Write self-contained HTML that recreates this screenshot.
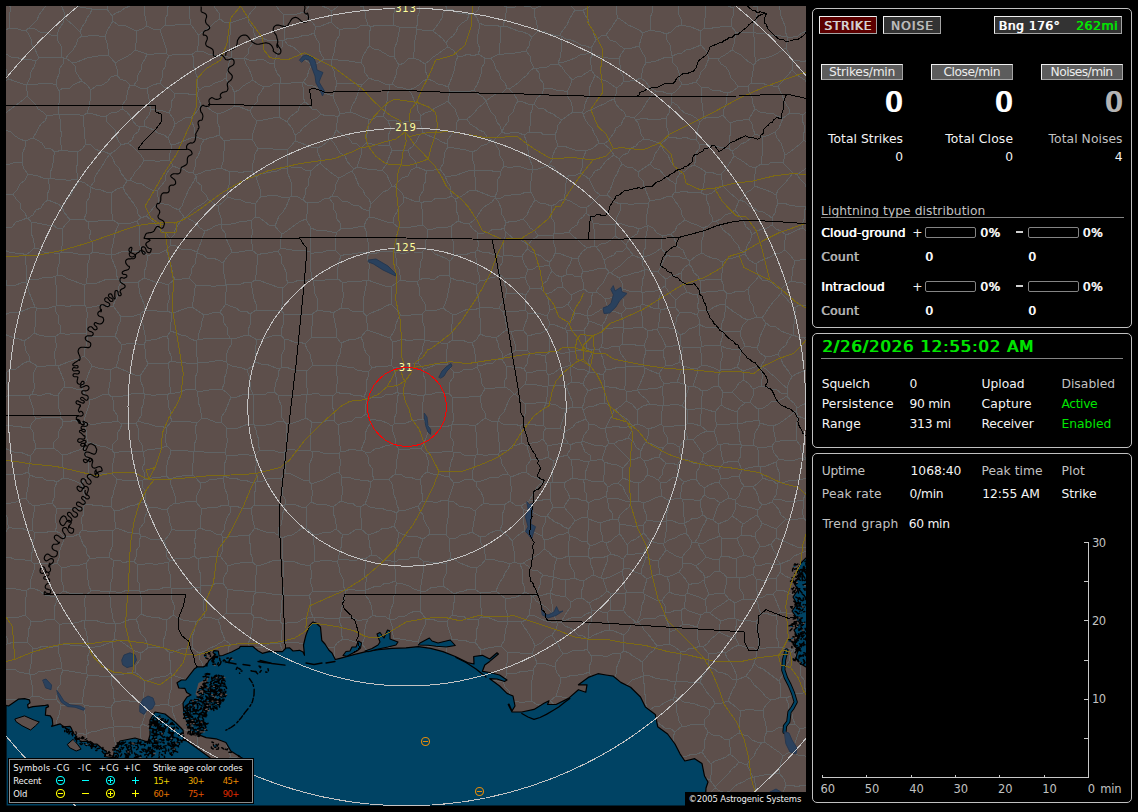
<!DOCTYPE html>
<html lang="en"><head><meta charset="utf-8"><title>Lightning Detector</title>
<style>
html,body{margin:0;padding:0;background:#000;}
body{width:1138px;height:812px;position:relative;overflow:hidden;font-family:"DejaVu Sans","Liberation Sans",sans-serif;}
.map{position:absolute;left:0;top:0;}
.t{position:absolute;line-height:1;white-space:nowrap;}
.pn{position:absolute;border:1px solid #c0c0c0;border-radius:5px;}
.bx{position:absolute;border:1px solid;border-color:#f0f0f0 #a4a4a4 #a4a4a4 #f0f0f0;}
.hr{position:absolute;height:1px;background:#848484;}
.bar{position:absolute;width:49px;height:9px;border:1px solid #848484;border-radius:2px;}
.mn{position:absolute;width:7px;height:2px;background:#d0d0d0;}
.lg{position:absolute;background:#000;border:1px solid #8c8c8c;box-shadow:0 0 0 1px #000;}
.rl{font-family:"DejaVu Sans","Liberation Sans",sans-serif;font-size:10px;letter-spacing:0.7px;fill:#ffff9c;}
</style></head><body>
<svg class="map" width="1138" height="812" viewBox="0 0 1138 812">
<defs><clipPath id="mc"><rect x="6" y="6" width="800" height="800"/></clipPath></defs>
<rect x="6" y="6" width="800" height="800" fill="#5d4f4b"/>
<g clip-path="url(#mc)" fill="none" stroke-linejoin="round" stroke-linecap="round">
<path d="M-26 673L-21 672L-15 671L-9 670L-4 668L1 666M1 666L1 660L1 653M-26 641L-21 643L-15 645L-10 648L-5 651L1 653M426 394L432 394L438 392L443 393L449 393M426 394L425 389L426 384L425 379L423 374L424 369M448 365L441 364L435 365L430 367L424 369M448 365L451 369L454 372M449 393L449 388L450 382L453 378L454 372M845 222L840 225L834 227L828 229L823 231L817 232L812 235M812 235L814 240L814 246L816 251L818 256M791 281L792 276L792 270L794 265L794 260M791 281L796 282L801 282L806 285L811 286L816 286M794 260L800 260L806 259L811 257L817 257M666 118L661 119L656 119L650 120L645 118L640 119L635 119M666 118L666 125L668 131L668 138M668 138L661 144M661 144L656 142L650 140L644 139M635 119L638 123L640 129L641 134L644 139M671 94L672 102M671 94L666 93L661 91L656 91M672 102L670 108L669 113L666 118M656 91L652 95L648 100L645 105L642 110L638 114L634 118M634 118L635 119M683 775L680 769L676 764L672 759M683 775L682 781L681 787L680 793L679 799L676 804M676 804L675 805M675 805L672 800L668 797L665 793L661 789L657 786L655 781L651 777M665 759L669 757M665 759L661 763L656 765L652 769M652 769L650 775M672 759L669 757M651 777L650 775M647 813L647 808L648 803L648 798L649 793L651 788L651 783L651 777M667 813L671 809L675 805M675 732L671 729L665 728L661 725L657 722L651 720M675 732L673 737L673 743L670 747L671 753L669 757M641 735L644 730L648 726L651 720M641 735L645 738L649 742L653 746L657 750L660 755L665 759M781 612L779 608L777 603L775 598L773 594M781 612L776 615M776 615L771 615L766 613L761 614M761 614L759 609L758 604L756 599M756 599L758 597M758 597L763 597L768 594L773 594M811 543L815 540L821 540L826 538L830 535L835 533M811 543L809 538L809 532L808 527L806 521M806 521L811 518L817 518L822 516L827 513L832 510L837 508M803 610L802 611M803 610L809 609L815 608L821 611L827 609L832 609M802 611L802 617L803 623L801 628L802 634L802 639L801 645M814 648L807 647L801 645M778 647L778 641L776 636L776 631L777 625L777 620L776 615M778 647L783 648L788 648L793 650M802 611L797 611L792 613L787 613L781 612M793 650L794 649M801 645L794 649M59 644L65 644L70 645L76 645L82 646L88 647M59 644L59 638L59 632L60 625M60 625L64 623L69 623L74 623L79 622L84 620M88 647L88 642L87 636L86 631L84 626L84 620M-1 540L2 547L1 555M1 555L-3 557L-9 556L-14 558L-19 558L-23 562L-29 562M-2 588L-0 583L0 578L2 573L1 567L4 563L3 557M3 557L1 555M-2 702L-1 707L-1 712L-1 717L-0 723L1 728L2 733M-30 732L-25 733L-19 733L-14 733L-9 732L-3 733L2 733M1 666L3 668M3 668L1 674L1 679L1 684L-0 690L-1 695L-1 701M33 648L32 654L31 659L31 664L30 669L29 674M33 648L38 648L43 646L48 647L53 647L58 646M61 668L61 662L60 657L58 651L58 646M61 668L56 669L51 670L45 671L40 671L35 674L30 674M30 674L29 674M3 668L8 670L14 669L19 672L24 673L29 674M-1 701L4 699L10 700L15 699L20 699L25 699L30 698M30 674L31 680L32 685L32 691L32 696M32 696L30 698M86 595L80 593L75 594L69 593L64 591M86 595L84 601L85 607L85 613L85 620M54 619L55 614L54 608L56 603L56 597M54 619L60 625M85 620L84 620M56 597L59 594L64 591M1 653L4 648L7 644M33 648L27 642M27 642L20 642L14 642L7 644M59 644L58 646M54 619L48 619L43 621L37 621L31 621M27 642L28 637L28 631L30 626L31 621M-24 623L-18 623L-12 623L-6 622L0 620M7 644L7 638L3 632L1 626L0 620M812 235L807 231L802 228M785 250L790 255L794 260M785 250L784 245L785 240L786 235M802 228L797 230L791 233L786 235M672 102L677 105L681 110L685 113L691 115L696 118L700 122M668 138L674 137L679 139L685 137L690 139L696 139M696 139L697 133L698 128L700 122M626 116L624 112L619 108L616 104L614 99M626 116L623 120L621 125L616 128L614 133L611 137L608 141L604 144M614 99L609 101L604 104L599 106L593 109L588 111L583 114M583 114L585 119L588 124L592 128L594 133L597 138L599 143M604 144L599 143M656 91L650 88L646 82L641 78M616 88L621 85L624 81M616 88L616 94L614 99M634 118L626 116M641 78L636 80L630 81L624 81M338 425L338 430L339 435L339 440L340 446L341 451M338 425L342 423L347 422L352 421L356 417L362 417L366 414M341 451L346 451L351 449L356 450L361 450M361 450L363 445L365 440L365 434L367 429L370 424L370 419M366 414L370 419M361 450L365 452M392 426L387 423L382 421L376 420L370 419M392 426L393 432L395 438L395 444M395 444L390 445L385 446L380 448L375 449L371 452L365 452M427 472L423 475L420 480M427 472L428 466L428 460L426 454M420 480L415 479L410 477L405 477L400 474L395 474M426 454L421 449M421 449L416 448L410 449L404 450L399 449M399 449L398 454L397 459L396 464L396 469L395 474M395 444L399 449M365 452L368 457L368 463L372 468L372 474L374 479M395 474L389 479M374 479L382 479L389 479M643 554L646 547L650 541M643 554L638 553L632 555L627 554M627 554L627 545M627 545L631 541L636 539L640 536L644 533M644 533L650 541M646 557L652 560L658 561M646 557L644 563L642 568L641 574M658 561L659 568L659 574M659 574L653 576L647 579M641 574L647 579M448 365L446 360L446 354L447 349L447 344M424 369L418 363M418 363L419 357L422 352L423 346L425 340M447 344L441 343L436 341L430 341L425 340M449 393L452 397M485 389L482 384L481 378L480 373L477 367M485 389L480 397M454 372L460 372L465 369L471 370L477 367M480 397L475 396L469 397L463 397L458 398L452 397M781 293L786 298L790 303L795 308M781 293L781 289M791 281L785 285L781 289M795 308L799 305L805 306L809 303L814 302M643 554L646 557M627 554L623 559M641 574L635 572L630 569L624 568M623 559L624 568M643 593L645 586L647 579M643 593L638 592L632 592L627 592M627 592L624 587L624 581L623 576L622 571M624 568L622 571M586 151L584 156L582 162L582 168L580 173M586 151L581 150L575 150L569 148L564 146L558 146M549 165L552 160L553 155L555 150L558 146M549 165L554 167L557 172L561 175L566 178M566 178L570 175L576 175L580 173M524 135L526 140L527 145L528 150L528 155L530 160L532 165L532 170M524 135L529 132M555 135L550 134L544 135L540 132L534 133L529 132M555 135L556 140L558 146M549 165L544 167L538 169L533 170M533 170L532 170M227 -13L232 -10L237 -8L242 -5L247 -3L252 0L258 3M258 3L257 -3L257 -9L258 -15L258 -21L257 -26M258 3L258 3M258 3L255 8L251 12L248 17M213 -4L214 2L215 8L219 13L220 19M248 17L242 19L236 21L230 23M220 19L224 22L230 23M274 63L276 57L278 52L282 47L283 41M274 63L269 63L264 60L259 59L254 61L249 60L244 58M283 41L278 40L272 41L267 40L262 38L256 38M256 38L253 43L249 48L248 54L244 58M244 58L244 58M256 38L254 33L253 28L249 23L248 17M230 23L231 29L230 35L229 41L229 46L232 52L231 58M244 58L237 58L231 58M198 35L203 32L207 29L211 26L215 22L220 19M198 35L199 40L198 46L197 51M197 51L202 51L208 54L214 55L219 56L225 56L231 58M231 58L231 58M812 2L815 -2L819 -6L824 -9M812 2L813 8L814 14L816 19L819 25M560 35L554 35L549 34L544 31L538 31M560 35L563 30L567 25L569 20L572 15L575 10M575 10L571 6L567 2L564 -2L560 -6M560 -6L556 -2L551 -1L547 1L543 5L538 7L534 9M538 31L537 25L536 20L534 15L534 9M529 6L534 9M529 6L528 1L528 -5L526 -10L527 -15L525 -21M448 87L450 91M448 87L450 82L452 77L454 71L455 66L456 61L458 56M450 91L456 91L462 91L468 92L474 90M458 56L463 56L468 54L473 56L478 54M474 90L477 85L479 80L481 74L481 69L484 64L485 58M478 54L485 58M562 120L558 125L557 130L555 135M562 120L557 117L553 114L548 112L544 109L538 108L534 104M529 132L530 126L531 121L530 115L532 110L533 105M534 104L533 105M616 88L611 84L606 81L600 79L595 75M592 55L590 60L591 65L591 70M592 55L597 55L603 57L608 58L613 58L619 59M619 59L620 65L620 71L623 76L624 81M595 75L591 70M583 114L582 113M595 75L593 80L591 84L589 89L590 95L587 99L585 104L584 109L582 113M562 120L567 116L573 112M599 143L593 148L586 151M573 112L582 113M561 36L562 42L561 47L561 52L560 58L558 63M561 36L566 39L571 40L576 42L581 45L586 46L591 48M558 63L564 62L570 60L575 58L580 55L586 54L591 52M591 48L591 52M560 35L561 36M575 10L583 10M591 48L596 40M583 10L585 15L588 19L589 25L593 30L594 35L596 40M592 55L591 52M619 59L621 54L625 49M625 49L620 46L616 42L610 40L606 35M606 35L601 36L596 40M625 49L632 48L639 46M618 18L615 22L612 27L609 31L606 35M618 18L623 21L628 25L633 27L639 30L643 33M643 33L641 39L639 46M641 78L642 73L643 68L646 63M639 46L642 52L645 57L646 63M696 82L689 84L682 84M696 82L699 78L701 72L705 68L707 63L709 58M682 84L679 79L679 73L677 67L673 63L672 57M709 58L706 51L701 45M701 45L696 47L691 49L686 50L682 53L677 54L672 56M672 57L672 56M671 94L675 92L679 88L682 84M701 87L702 92L701 98L702 103L702 108L704 114L703 119M701 87L696 82M700 122L703 119M646 63L651 62L656 61L661 59L666 57L672 57M666 34L667 40L670 45L671 51L672 56M666 34L661 32L655 31L650 30M643 33L650 30M758 6L753 6L747 5L741 5L736 5M758 6L764 3L768 -0M736 5L735 -1L735 -7L734 -13L732 -19M666 34L671 32L676 27L681 25M701 45L700 38L701 31M701 31L696 29L691 27L686 26L681 25M736 32L735 38L734 44L732 50M736 32L731 26M718 59L723 56L728 53L732 50M718 59L709 58M731 26L725 26L720 27L715 27L710 29L704 28M701 31L704 28M731 26L731 20L734 14L733 8M733 8L728 6L723 5L717 6L711 5L706 2M704 28L704 23L705 18L706 13L705 8L706 2M392 150L390 155L388 160L386 165L382 170M392 150L390 146M390 146L384 145L378 145L372 144L366 143M382 170L377 170L372 169L367 169L362 168L357 167M357 167L359 161L361 155L361 148M361 148L366 143M388 121L383 116M388 121L390 126L390 131L388 136L389 141L390 146M383 116L378 116L373 119L368 119M368 119L368 125L368 131L366 137L366 143M354 169L350 165L347 161L345 156L340 153L337 148L334 143L330 139M354 169L357 167M330 139L334 135L336 130M336 130L340 133L345 136L349 138L352 143L357 144L361 148M422 809L426 815M422 809L416 812L410 813L405 815L399 816L393 819M612 763L615 759L620 757L624 753M612 763L606 762L601 759L596 756L590 754M590 740L591 747L590 754M590 740L594 738L600 737L604 735L609 732L613 729L619 728M624 753L624 748L626 742L627 737M619 728L623 732L627 737M617 710L618 716L618 722L619 728M617 710L611 710L605 709L599 709L593 709L588 710M588 710L586 715L583 719L583 725L581 729M581 729L586 734L590 740M641 735L634 736L627 737M652 769L648 766L643 763L637 762L633 759L628 756L624 753M759 807L756 811L752 815M759 807L757 801L756 795L755 789L755 783L754 777M754 777L753 777M753 777L748 779L743 782L738 784L734 787L730 791L725 793M738 813L735 807L732 802L728 798L725 793M759 807L763 804L769 804L774 803L779 802M779 773L774 774L769 774L764 775L759 776L754 777M779 773L784 779L786 785M786 785L784 790L781 796L779 802M817 809L816 814L813 818L809 822M812 787L807 786L802 785L797 787L792 785L786 785M779 802L783 806L786 812L790 816L793 820M779 773L780 768L781 762L783 756M783 756L779 752L774 749L769 745L764 742M753 777L750 771L747 765M764 742L762 742M747 765L750 760L754 756L756 751L759 747L762 742M715 787L718 784L722 780L725 777L729 773L732 769L736 766L739 762M715 787L715 788M715 788L720 791L725 793M747 765L739 762M720 503L717 508L715 514L713 520M720 503L729 498M718 524L713 520M718 524L723 522L728 520L732 516M729 498L735 500M735 500L736 503M732 516L735 510L736 503M743 524L748 521L752 518L757 515M743 524L738 520L732 516M736 503L741 506L747 507L752 508L758 510M758 510L757 515M836 586L831 585L826 582L822 579L816 579L812 576M852 562L847 562L842 561L837 559L831 558L827 555L821 556L816 554L811 552M812 576L810 570L812 564L812 558L811 552M809 550L809 550M809 550L811 543M809 550L811 552M771 544L776 538M771 544L766 546L760 546M760 546L755 537M755 537L756 532L760 528L762 523M762 523L769 526L776 529M776 538L776 529M809 550L805 547L799 548L795 546L790 544L786 542L781 540L776 538M780 564L785 562L790 560L794 556L799 554L804 552L809 550M780 564L777 559L776 554L773 549L771 544M753 558L744 555M753 558L757 552L760 546M744 555L742 549L739 544L737 538M742 535L748 535L755 537M742 535L737 538M743 524L741 529L742 535M757 515L762 523M762 505L758 510M762 505L767 504L772 502M772 502L776 506L779 510L781 515L786 519M786 519L781 524L776 529M804 518L798 519L792 520L786 519M804 518L806 521M812 474L813 469L811 464M853 445L848 446L843 449L839 451L834 453L829 456L824 456L820 459L816 462L811 464M779 681L781 686L780 692L781 697M779 681L775 678L771 675L767 672L763 669L758 667L754 663M754 663L752 668L749 672L746 676M746 676L751 680L754 685L758 688L762 692L766 697L771 700M781 697L776 699L771 700M778 647L772 647L766 648L760 648M761 614L756 622M756 622L756 628L759 632L758 638L758 643L760 648M793 650L790 655L789 661L786 666L783 670L782 676L779 681M754 663L756 657L757 650M757 650L760 648M814 785L813 779L814 773L812 767L811 760M811 760L816 761L821 758L827 759L832 757L837 757L842 756M783 756L788 753L793 752M793 752L798 755L805 756L810 759M811 760L810 759M767 731L766 726L765 721L763 715L763 710M767 731L773 731L778 728L784 727L789 725L795 724M763 710L766 705L771 700M781 697L786 698M795 724L793 719L792 714L789 709L788 703L786 698M793 752L794 746L796 740L798 734L800 729M767 731L765 736L764 742M795 724L800 729M794 649L795 655L797 660L800 665L800 670L801 676L804 680L804 686L806 691M786 698L791 696L796 693L801 694L806 691M815 692L806 691M281 676L276 675L270 676L264 674L259 674L253 673M281 676L281 681L280 687L281 693L280 698M253 673L247 679M247 679L249 684L249 689L249 695L251 700M257 706L251 700M257 706L262 704L267 703L272 703L277 701M280 698L277 701M86 595L91 591M61 567L62 573L61 579L63 585L64 591M61 567L67 567L73 565L80 565L86 563M91 591L89 586L88 580L87 575L87 569L86 563M85 620L90 621L95 620L100 622L105 623L110 623L115 624M115 624L113 619L112 613L111 608L110 602L110 597L109 591M91 591L97 590L103 592L109 591M313 534L306 528M313 534L313 540L314 545L314 550L314 556L315 561M306 528L301 529L297 532L292 535L287 536L282 538M315 561L310 565M310 565L305 565L300 564L295 562L290 561L284 562M282 538L282 544L282 549L282 555L283 560M283 560L284 562M336 529L343 535M336 529L331 532L325 532L319 534L313 534M343 535L341 540L342 545L340 550L339 555L338 560M338 560L337 561M337 561L332 561L326 560L320 561L315 561M306 507L301 507L296 505L290 504L285 504M306 507L306 512L306 517L306 523L306 528M278 535L282 538M278 535L278 529L281 525L282 520L282 515L284 510L284 505M284 505L285 504M312 592L312 587L310 581L312 576L311 570L310 565M312 592L317 591L323 591L328 591L334 591L339 591L345 590M345 590L343 585L343 579L340 573L339 567L337 561M61 668L63 670M89 648L88 647M89 648L89 653L87 658L89 663L86 668L87 674M63 670L69 671L75 672L81 673L87 674M32 696L38 696L44 699L49 700L56 699M63 670L61 675L60 680L60 685L57 689L57 695L56 699M304 757L305 752L304 747L305 742L307 737L305 731L307 726M304 757L297 757L291 759L285 758M285 758L284 758M307 726L301 727L296 726L290 724L285 725M285 725L278 730M278 730L278 736L280 741L282 747L282 752L284 758M4 315L5 309L4 303L5 298L5 292L4 286M4 315L1 320M-18 285L-12 284L-7 285L-1 286L4 286M-27 310L-21 311L-15 314L-10 316L-4 317L1 320M204 315L209 314L215 312L220 312M204 315L202 321L201 327L199 333L198 339M220 312L223 316L223 322L227 327L227 333L230 338M198 339L203 339L209 338L214 338L219 338L224 338L230 338M231 397L229 402L227 407L225 412L222 416L221 422M231 397L227 393L222 389M222 389L216 389L209 390L203 391L197 391M197 391L198 397L198 402L200 407L201 413L202 418M202 418L208 419L215 422L221 422M29 728L35 729L41 729L47 732L53 733M29 728L29 728M54 759L55 754L54 749L54 743L54 738L53 733M54 759L48 761L42 762L37 764L31 764M31 764L29 759L30 754L30 749L29 744L28 739L29 733L29 728M2 733L3 733M29 728L29 723L29 718L29 713L30 708L29 703L30 698M29 728L24 730L18 729L13 730L8 732L3 733M3 733L2 739L3 745L3 750M-26 763L-21 762L-16 758L-11 757L-7 755L-2 753L3 750M2 812L5 814M2 812L-3 814L-8 814L-13 817L-19 817L-24 818M-2 786L-2 791L1 796L1 801L2 806L2 812M25 615L19 617L13 618L7 617L1 619M25 615L26 609L25 603L26 597L26 591M1 619L1 614L-1 609L-1 604L1 599L-1 594L-0 589M26 591L21 590L16 589L10 588L5 589L-0 589M31 621L25 615M0 620L1 619M30 588L35 589L40 591L45 595L50 596L56 597M30 588L26 591M701 87L707 87L712 90L718 90L723 92L728 93M703 119L708 117L714 118L719 117L723 115M723 115L724 109L726 104L726 98L728 93M718 59L721 64L726 67L729 72L731 78L735 82L738 87M728 93L733 91L738 87M306 507L311 502M336 529L336 524L335 518L333 513L333 507M333 507L327 505L322 504L316 504L311 502M339 453L334 454L328 453L323 453L317 451L312 452M339 453L340 459L340 466L339 472M312 452L312 458L310 463L309 469L310 475L309 481M309 481L311 484M311 484L317 482L323 480L328 477L333 474L339 472M337 392L336 387L338 381L337 376L336 370L337 365M337 392L333 396M333 396L328 395L322 396L317 393L312 394L307 394M336 365L337 365M336 365L330 365L325 365L319 366L313 365M307 394L307 388L306 382L306 377L307 371M313 365L307 371M305 344L300 342L294 342L289 340L284 339M305 344L307 349L310 354L311 359L313 365M281 368L282 362L281 356L284 350L284 345L284 339M281 368L286 367L291 369L296 370L302 370L307 371M339 453L341 451M312 452L310 450M334 421L328 420L323 422L317 423L312 422M334 421L338 425M312 422L311 428L310 433L311 439L310 445L310 450M364 397L366 392L366 387L366 382L368 377L368 372M364 397L366 399M366 399L371 398L377 397L382 397L387 394L393 394L398 392M372 368L379 366L385 367L391 365M372 368L368 372M398 392L397 387L396 382L396 377L395 372L393 367M393 367L391 365M337 392L342 394L348 393L353 395L359 395L364 397M337 365L342 366L347 367L352 367L357 370L362 371L368 372M334 421L334 416L334 411L332 406L332 401L333 396M366 414L365 409L366 404L366 399M392 341L392 347L392 353L392 359L391 365M392 341L397 341L403 339L408 341L413 340L419 339L424 339M418 363L412 363L406 366L400 367L393 367M424 339L425 340M423 419L422 413L422 408L423 402L423 396M423 419L417 420L411 421L406 423L400 423L394 424M394 424L394 419L396 414L396 408L397 403L397 398L399 393M423 396L417 395L411 394L405 393L399 393M429 426L428 432L426 438L424 443L421 449M429 426L423 419M392 426L394 424M398 392L399 393M426 394L423 396M366 590L365 585L367 579L364 575L365 569L366 564L365 559M366 590L365 590M365 559L360 558L355 561L349 560L344 559L338 560M345 590L345 591M345 591L350 589L355 590L360 591L365 590M345 591L345 596L343 601L342 607L341 612L340 617M340 617L345 617L351 617L357 620L362 620L368 619M365 590L366 596L369 600L371 605L372 610L373 615M373 615L368 619M309 481L303 480L297 477L291 474L285 473M310 450L304 450L298 451L292 449L286 450M286 450L284 452M284 452L284 457L286 462L285 468L285 473M285 504L285 499L282 494L282 488L283 483L281 478M311 502L312 496L312 490L311 484M285 473L281 478M374 479L371 482M339 472L342 477M371 482L366 480L360 480L354 479L348 477L342 477M333 507L337 504L341 501M342 477L341 483L343 489L342 495L341 501M420 480L421 485L421 491L423 496L422 501M422 501L418 506M389 479L392 484L393 489L394 495L396 500L397 505L399 510M399 510L406 510L412 508L418 506M343 535L349 534L355 530L361 529M341 501L347 503L352 503L356 506L361 507M361 529L361 524L361 518L360 513L361 507M371 482L370 488L369 493L367 499L365 504M361 507L365 504M399 510L397 513M365 504L370 507L375 508L381 508L386 510L392 511L397 513M720 503L715 499L709 498L704 495M713 520L707 518M704 495L700 501M700 501L701 508L703 515M703 515L707 518M700 501L694 500L688 499L682 499M682 499L684 505L683 511L684 517L684 523M703 515L698 518L693 518L689 521L684 523M718 524L718 530L720 536M737 538L730 538L722 538M722 538L720 536M624 651L629 653L633 656L638 659L642 662M624 651L623 646L623 641L624 635M624 635L628 631L631 625L636 622M657 646L654 642L651 638L648 634L644 630L642 626L638 622M657 646L654 650L649 654L646 658L642 662M636 622L637 622M637 622L638 622M682 726L675 732M682 726L679 721L678 716L676 710L676 704L673 699M651 720L650 715L650 710M650 710L654 707L660 706L664 703L668 701L673 699M669 644L663 645L657 646M669 644L675 647L680 651M680 651L681 656L680 661L678 666L678 671L676 676L677 681M677 681L676 682M642 662L642 669L644 675M644 675L650 676L655 678L660 679L665 679L670 681L676 682M422 501L428 501L433 502L438 502L443 500L448 501M418 506L420 511L423 515L424 520L426 524L429 529L430 534M430 534L436 534L441 534L446 535M448 501L448 507L448 513L448 518L447 524L446 530L446 535M418 557L423 561M418 557L419 550L421 545L423 539M450 558L450 552L449 545L450 539M450 558L447 563M423 539L430 534M447 563L441 563L435 562L429 562L423 561M450 539L446 535M560 428L564 432M560 428L562 422L564 416L566 409M582 408L573 407M582 408L583 410M583 410L586 419M564 432L568 430L573 427L576 423L581 421L586 419M566 409L573 407M477 367L478 365M452 340L447 344M452 340L457 340L462 340L467 342L472 343M478 365L475 360L475 354L474 348L472 343M479 308L479 313L480 318L480 324L481 329L480 334M479 308L474 310L468 309L463 311L457 314L452 314M452 340L453 335L451 330L452 324L452 319L452 314M472 343L477 339L480 334M515 394L520 389L525 384M515 394L520 399L525 404M546 403L541 402L536 403L531 403L525 404M546 403L546 403M546 403L547 397L547 392L548 386M525 384L531 384L537 385L542 386L548 386M429 426L435 427L440 426L446 427L451 425M426 454L431 452L436 452L442 452L447 451L452 451M451 425L451 431L450 436L453 441L453 446L452 451M452 397L453 403L452 408L453 413L454 419L452 424M451 425L452 424M680 335L680 340L680 345M680 335L674 328M680 345L673 346L666 347M658 328L663 327L669 328L674 328M658 328L657 329M657 329L659 333L662 338L664 342L666 347M810 463L811 464M810 463L813 458L816 453L819 449L820 443L823 438L825 433M637 390L641 395L646 399L650 404M637 390L643 389L648 389L653 388L658 388L663 386M663 386L662 392L664 399L663 405M650 404L657 405L663 405M757 348L751 347L745 346M757 348L759 343L760 337L762 332L764 328L766 323M745 346L743 341L741 337L740 332M740 332L743 325L748 320M748 320L757 317M757 317L762 318M766 323L762 318M741 350L740 356L739 362L737 367M741 350L736 349L731 349L726 348L721 346M721 346L722 352L722 358L720 364L721 370M737 367L732 369L726 369L721 370M700 325L699 330L700 336L701 341L701 347M700 325L705 327L710 328L716 327L721 329M701 347L707 345L713 345L720 345M720 345L722 338L723 331M721 329L723 331M700 324L695 327L689 329L685 333L680 335M700 324L700 325M682 347L688 348L694 347L700 348M682 347L680 345M700 348L701 347M700 348L701 353L701 359L702 365M720 371L714 368L708 366L702 365M720 371L721 370M721 346L720 345M745 346L741 350M740 332L734 331L728 332L723 331M726 306L730 309L734 312L739 315L743 318L748 320M726 306L725 312L724 318L722 323L721 329M803 500L797 501L791 501L785 501L779 499L773 500M803 500L805 495L807 490L806 484L809 478M809 478L803 479L797 480L791 480L785 482L779 482M773 500L776 495L777 489L777 484M777 484L779 482M804 518L802 512L804 506L803 500M772 502L773 500M812 474L809 478M639 501L631 502M639 501L638 495L638 489L639 483M631 502L628 497L625 492L623 487L618 483M639 483L633 482L628 480L623 478M623 478L618 483M608 487L613 484L618 483M608 487L603 481M603 481L604 475L604 468L604 462M604 462L611 464L617 465L623 468M623 468L622 473L623 478M735 500L739 496L741 490L744 486M762 505L759 501L758 496L756 491L753 487M753 487L744 486M777 484L773 481L768 480L763 478M753 487L758 483L763 478M606 447L604 453L602 459M606 447L600 445L594 445L588 443L582 441M602 459L597 460L591 460M591 460L590 455L585 452L583 447L581 442M582 441L581 442M609 443L606 447M609 443L607 438L606 433L605 428M605 428L600 428L595 425L589 424M589 424L588 430L584 435L582 441M609 443L614 444M604 462L602 459M623 468L630 460M614 444L618 448L622 452L626 456L630 460M529 501L532 496L535 491L538 486L543 482M529 501L534 500L540 501L545 499L550 499M550 499L550 494L550 488L551 483M543 482L551 483M510 501L510 495L512 489L510 483L511 477M510 501L515 505L521 506M521 506L529 501M511 477L516 475L521 473L526 472M526 472L531 476L537 478L543 482M605 428L606 427M632 426L632 426M632 426L631 432L628 438M628 438L623 440L618 441L614 444M606 427L612 427L617 426L622 428L627 427L632 426M637 410L632 404L626 401M637 410L637 417L637 424M637 424L632 426M632 426L629 421L624 417L619 414L616 409M626 401L621 406L616 409M583 410L588 407L594 406L599 404L605 403M589 424L586 419M606 427L609 421L612 416L614 410M605 403L610 406L614 410M614 410L616 409M650 164L653 160L655 154L658 150L661 145M650 164L654 168L660 170L663 174L667 178L671 181L676 184M661 145L664 151L668 155L670 160L673 165L677 169L680 174M680 174L677 178L676 184M661 144L661 145M696 139L699 144M699 144L699 149L695 154L696 160L694 165M680 174L685 171L689 167L694 165M638 172L639 177L643 181L644 186L646 191L648 196L650 201M638 172L644 168L650 164M650 201L655 200L661 199L666 197L672 196M672 196L675 192M675 192L676 184M735 210L739 201M735 210L738 214L741 218L744 222L746 227L750 230L752 235M752 235L757 231L762 229L767 228L772 225M740 200L745 202L749 206L754 208L758 211L763 212L768 215L772 218M740 200L739 201M772 225L772 218M604 144L610 149L614 155M580 173L585 176L589 179M589 179L592 176L595 171L600 169L603 165L606 161L610 158L614 155M638 172L633 168L627 167L622 164M644 139L639 142L636 146L631 148L628 153L623 155L619 159M622 164L619 159M619 159L614 155M551 206L552 212L551 217L554 222L554 228L554 233M551 206L556 204L559 201L564 199M564 199L570 201L575 204L580 207L586 208M569 232L564 233L559 233L554 233M569 232L572 228L577 225L579 220L583 217L586 213M586 213L586 208M566 178L566 183L565 188L565 194L564 199M589 179L592 185L595 191L600 195M586 208L591 204L595 200L600 195M650 201L648 203M648 203L642 203L637 203L631 205L625 203L620 204M622 164L619 169L617 174L614 179L612 185L610 190L607 195M620 204L615 202L611 198L607 195M607 195L600 195M535 200L532 205L529 210L527 215L523 219M535 200L531 192M531 192L526 192L521 194L516 194L511 195L506 195L501 198L496 198M523 219L517 221L511 221L506 223M506 223L504 218L501 213L501 208L499 203L496 198M553 235L546 235L538 236M553 235L554 233M538 236L535 231L530 228L527 223L523 219M551 206L546 204L540 203L535 200M533 170L531 176L531 181L530 186L531 192M450 261L445 258L440 256L435 254L431 250L425 249M450 261L454 256M427 229L428 236L425 242L425 249M427 229L433 229L439 227L445 228L451 226M454 256L453 251L453 246L453 241L451 236L451 231L451 226M528 270L525 277M528 270L533 269L538 266L544 266L549 265M525 277L527 283L530 288M552 271L549 265M552 271L549 276L547 281L543 284L541 289M541 289L536 288L530 288M504 278L509 278L514 278L520 278L525 277M504 278L504 283L506 288L506 293M506 293L513 293L519 293L526 295M526 295L530 288M479 307L486 307L493 308L499 308M479 307L479 302L478 296L476 291L476 285M476 285L480 281M504 278L499 274M506 293L505 298L502 303L499 308M480 281L485 280L490 278L495 277L499 274M627 247L633 255M627 247L623 251L617 251L614 255L609 257L604 260M606 268L604 260M606 268L609 272M633 255L628 258L624 262L620 266L615 269L611 273M609 272L611 273M258 3L263 3L269 3L275 4M283 41L284 40M284 40L284 40M284 40L284 35L284 30L284 25L283 20L284 15M275 4L279 10L284 15M275 4L278 0L279 -5L282 -9L286 -13L288 -17L290 -22L294 -26M192 54L194 59L193 65L195 70L196 74L198 79L197 85L199 90M192 54L197 51M231 58L229 63L228 68L227 73L226 78M226 78L221 81L215 83L210 86L204 87L199 90M250 111L253 106L257 102L258 96L261 92L264 87M250 111L245 109L240 107L235 106M235 106L234 99L234 92M234 92L239 90L243 86L248 83L253 80M264 87L258 84L253 80M280 83L279 89L280 94L279 100L279 106L279 112L279 117M280 83L275 83L270 86L264 87M257 121L263 120L268 119L273 118L279 117M257 121L253 117L250 111M244 58L246 64L249 69L251 74L253 80M226 78L228 83L232 87L234 92M274 63L275 68L277 73L280 77L281 83M281 83L280 83M812 2L807 -0L801 -2L797 -5L791 -6L787 -9M732 50L737 53L741 55L745 59L749 62L754 65M738 87L748 86M748 86L751 83M751 83L752 77L753 71L754 65M792 60L792 70M792 60L797 60L803 62L808 60L814 60L820 61L825 61M792 70L796 74L800 77L805 80L808 84L813 87M812 110L807 111L803 115M790 113L797 113L803 115M790 113L789 109L786 104L784 100L782 95L780 91L778 86M778 86L782 82L785 78L789 74L792 70M532 37L538 31M532 37L528 34L523 32L518 31L513 29L508 27L503 26M529 6L524 6L518 5L513 8L507 7M507 7L506 13L505 19L503 26M544 88L543 83L540 79L539 73L536 69M544 88L550 88L556 90L561 90L567 92M536 69L542 67L547 67L552 64L558 64M558 64L562 67L565 72L569 76L572 80M567 92L570 86L572 80M534 104L537 98L542 94L544 88M573 112L572 106L571 102L568 97L567 92M591 70L586 73L582 76L577 77L572 80M558 63L558 64M524 135L519 133L513 132L507 134L502 132M533 105L528 104L523 102L518 101M518 101L515 106L513 112L509 116L508 122L504 127L502 132M526 51L530 56L531 62L534 68M526 51L521 52L515 53L510 53L504 54L499 54M534 68L530 71L526 76L522 79L518 83L514 86L509 89M499 54L491 58M491 58L494 63L496 69L499 73L501 79L505 83L507 88M507 88L509 89M532 37L530 41L529 46L526 51M536 69L534 68M503 26L501 27M501 27L500 32L500 38L500 43L499 49L499 54M518 101L514 94L509 89M478 54L480 49L478 44L477 39L478 34L479 29L479 23M485 58L491 58M479 23L484 25L490 26L496 25L501 27M474 90L478 94L483 97L486 101M486 101L486 101M486 101L491 97L496 94L502 93L507 88M486 101L488 106L491 112L495 116L497 122L500 126L502 132M502 132L502 132M622 -6L620 -1L616 4M616 4L610 5L604 3L598 5L592 4M592 4L591 -1L590 -7L590 -12L589 -18L587 -23M653 2L647 -3M653 2L652 8L652 13L650 18L651 24L650 30M618 18L616 11L616 4M583 10L588 8L592 4M699 -11L695 -7L691 -4L687 -1L682 1L678 4M673 -32L672 -27L671 -21L670 -16L670 -10L667 -5L667 1M667 1L673 1L678 4M736 5L733 8M706 2L703 -4L699 -11M681 25L681 19L679 15L678 10L678 4M653 2L660 0L667 1M448 101L443 104L439 106L435 108L431 111L425 113L421 116M448 101L451 105L455 109L457 115L459 119M459 119L456 124L456 130L452 134L448 139L447 144M447 144L442 142L437 139L432 137L427 135L423 132M423 132L421 126L420 121M420 121L421 116M448 87L443 85L438 84L433 81L428 79M450 91L448 101M409 90L414 88L419 85L423 81L428 79M409 90L412 95L414 100L417 105L418 111L421 116M486 101L482 105L478 108L475 112L471 116L467 119M467 119L459 119M408 150L403 150L398 151L392 150M408 150L413 146L416 142L419 136L423 132M388 121L394 120L399 122L404 122L409 121L414 120L420 121M408 150L410 156L415 161L417 167M427 171L422 169L417 167M427 171L434 170L440 169M447 144L448 147M440 169L443 164L444 158L445 152L448 147M467 119L470 124L475 127L479 130L484 132L487 137L492 140M502 132L498 136L494 140M494 140L492 140M532 170L527 169L521 167L516 166L510 168L504 166M494 140L496 145L499 150L500 156L503 161L504 166M448 147L454 148L460 149L466 150L472 152M492 140L487 144L481 146L477 150L472 152M392 186L394 186M392 186L388 190L383 192L379 196L375 200L371 204M394 186L398 189L402 193L404 197M404 197L403 203L399 207L397 212L394 217L393 223M393 223L387 222L381 220L375 218L369 217M371 204L369 211M369 217L369 211M417 167L411 170L408 176L402 178L398 182L394 186M382 170L387 175L389 180L392 186M354 169L352 171M352 171L355 176L357 181L359 186L363 190L365 195L369 199L371 204M427 171L425 176L426 181L423 186L423 191L420 196L419 201M419 201L414 201L409 199L404 197M421 203L422 209L422 214L422 220L423 225M421 203L419 201M423 225L417 226L411 227L405 227L399 228M399 228L393 223M338 117L340 114M338 117L332 115L326 116L321 114M340 114L338 108L335 102L333 96M321 114L317 110L312 109L309 105L305 102M333 96L327 94L322 92L318 88L313 86L307 85L303 82M305 102L303 97L304 92L303 87L302 82M303 82L302 82M336 130L337 123L338 117M368 119L362 117L356 114L350 112M350 112L345 113L340 114M295 135L292 128L287 122M295 135L300 132L303 128L308 124L311 121L317 118L321 114M287 122L290 117L294 114L298 111L300 105L305 102M281 83L286 83L291 83L297 82L302 82M287 122L279 117M312 65L308 62L304 59L301 54L297 50L293 47L288 45L284 40M312 65L309 70L307 77L303 82M350 112L352 106L355 101L357 96L359 90L362 85M333 96L335 90L337 83M362 85L357 84L352 83L347 83L342 83L337 83M284 15L290 14L297 14L304 12M313 -19L313 -13L314 -6L313 0M304 12L307 9L310 5L313 0M340 786L340 780L342 774L342 768L345 762M340 786L345 788L350 789L356 792L361 794L366 796M366 796L369 790L373 785M373 785L370 780L367 775L364 770L361 764L359 759M359 759L352 760L345 762M335 754L330 755L325 758L319 757L314 759L309 761M335 754L340 758L345 762M309 761L309 766L309 771L310 776L311 781L312 786M340 786L333 790M312 786L317 788L322 789L328 789L333 790M647 813L641 811L637 806L631 804L625 801M650 775L645 777L641 780L636 782L632 785L627 786L622 789M625 801L625 795L622 789M612 763L613 769L613 774L615 779L615 785M622 789L615 785M532 811L527 812L521 810L516 812L510 811M532 811L532 817L533 822L536 828L534 834L536 839M510 811L504 817M537 805L532 811M537 805L543 804L548 805L554 805L560 806M560 806L562 812L567 816L570 821M585 788L580 788L575 790L569 790M585 788L586 782L584 776L584 771L585 765L585 759M585 759L578 758L572 761M572 761L569 765L566 770L564 775L562 780M569 790L565 785L562 780M590 754L585 759M592 793L597 790L604 789L609 786L615 785M592 793L585 788M451 786L452 792L453 798L453 804L455 809L455 815M451 786L456 786L461 784L467 783L472 781L478 782M480 814L480 808L481 802L482 797L482 791L482 785M478 782L482 785M724 825L720 822L716 818L713 815L709 811L706 807L701 804M695 808L694 813L695 818L696 823L697 828L698 833L702 837L701 842L702 847M695 808L701 804M715 788L711 792L708 796L704 800L701 804M676 804L682 806L688 808L695 808M683 775L688 775L694 777L699 779L705 778L710 780M710 780L715 787M763 710L757 711L751 709L745 710L740 711M762 742L757 742L752 740L748 736L744 735L739 733M739 733L739 728L739 722L740 717L740 711M682 726L687 726L693 724L698 724L704 725M673 699L674 697M674 697L679 699L684 702L690 703L695 704L700 706L705 707L710 710M704 725L705 719L709 715L710 710M677 681L682 681L688 682L694 682L700 682M700 682L703 686L706 691L709 695L713 699L715 704M676 682L674 687L676 692L674 697M710 710L715 704M700 682L702 677L706 672L709 667M709 667L714 669L718 672L723 673L728 675L732 679L737 680M737 680L735 686L732 691L730 696L728 701M715 704L722 703L728 701M746 676L737 680M737 680L737 680M728 701L732 704L736 707L740 711M637 410L643 406L650 404M637 424L643 426L648 429M663 405L663 405M663 405L662 411L661 418L661 424M648 429L655 427L661 424M753 558L756 565M780 564L780 564M756 565L762 565L768 563L774 565L780 564M756 599L750 600L743 599M758 597L757 591L756 585L756 579M743 599L743 594L740 589L739 583L739 577M739 577L746 577L753 574M756 579L753 574M739 577L736 577M744 555L737 558M756 565L753 569L753 574M736 577L736 571L736 564L737 558M722 538L721 544L721 550L721 556M737 558L732 558L727 556L721 556M719 632L725 635L730 637L736 639M719 632L715 636L711 639L707 644L703 647M703 647L708 653M708 653L714 654L720 652L725 653M725 653L730 650L734 647L739 645M739 645L736 639M700 646L695 648L690 648L686 651L680 651M700 646L703 647M709 667L708 660L708 653M737 680L736 674L734 669L731 663L727 658L725 653M757 650L752 647L745 647L739 645M756 622L751 621L746 620L741 621L736 619M736 619L737 624L735 629L735 634L736 639M810 759L813 755L816 750L818 744L820 739L823 734M800 729L808 727M823 734L817 733L812 730L808 727M808 727L811 723L811 717L813 712L815 707L817 702L820 697M9 79L3 82L-2 85L-8 87M9 79L6 74L6 69L4 64L3 59L1 54M1 54L0 53M0 53L-5 54L-10 57L-16 58L-20 62L-26 63M5 31L5 36L4 42L2 48L0 53M5 31L-0 28L-5 26L-11 25M5 31L9 28M3 -3L7 2L10 7M9 28L9 23L9 17L10 12L10 7M10 7L15 3L20 1L26 -2L30 -6L35 -9M67 -26L65 -21L64 -15L63 -9L63 -4L61 2M61 2L61 2M61 2L54 1L48 2M48 2L44 -3L38 -4L35 -9M107 9L108 4L107 -1L107 -6L107 -12L109 -17M107 9L102 10L97 9L92 9M92 9L86 8L80 7L74 4L69 2M69 2L74 -1L78 -5L82 -8L86 -12L90 -16L95 -19L100 -22M61 2L69 2M61 2L62 7L64 12L64 17M92 9L90 14L87 18L85 23L82 27L80 32M64 17L68 21L72 24L76 28L80 32M308 726L310 721L310 715L311 710L312 705M308 726L313 727L318 729L324 730L329 733L335 734M312 705L318 704L324 705L329 704L334 703M335 734L340 729M340 729L341 724L339 718L340 712L340 707M334 703L340 707M307 726L308 726M312 704L312 705M312 704L307 702L301 703L296 702L291 700L285 700L280 698M285 725L283 719L280 713L280 707L277 701M304 757L309 761M335 754L334 749L334 744L335 739L335 734M312 704L311 698L311 692L310 687L311 681L309 675M336 671L331 672L325 673L320 675L315 674L309 675M336 671L338 672M338 672L338 677L336 682L336 688L336 693L336 698L334 703M251 648L248 644M251 648L252 653L252 658L252 663L252 668L253 673M247 679L241 679L235 678L229 678L224 677M224 677L223 676M223 676L225 671L225 665L227 660L228 655L228 649L230 644M248 644L242 643L236 644L230 644M282 624L280 621M282 624L287 623L292 622L298 622L303 619L308 618L313 617M280 621L280 616L282 611L281 606L282 600L283 595M313 617L311 612L310 607L311 601L309 596M309 596L304 595L299 595L293 595L288 595L283 595M283 595L283 595M312 592L309 596M284 562L283 567L283 573L283 578L282 584L284 590L283 595M140 791L139 797L139 803L138 809L137 815M140 791L148 787M145 823L150 821L154 817L159 816L164 813L168 811M148 787L153 789L159 789L164 790M164 790L168 794M168 811L169 805L169 799L168 794M140 791L135 789L129 790L124 787L119 786M114 816L112 811L115 806L114 801L113 795L113 790M119 786L113 790M141 755L136 757L130 757L125 758L120 759M141 755L142 756M142 756L142 761L143 766L146 771L145 776L148 781L148 787M119 786L120 781L120 775L120 770L121 765L120 759M89 648L95 647L101 646L106 644L112 642M115 624L115 624M115 624L115 632L114 639M112 642L114 639M205 617L212 618L218 620M205 617L200 620L195 622M195 622L195 627L194 632L192 637L193 642L192 648M218 620L220 625L221 630L223 635L225 640M225 640L220 643L215 646L210 648L205 651L199 653M192 648L199 653M223 676L217 675L211 674L205 673M225 640L230 644M199 653L199 658L202 663L202 668L205 673M4 286L6 285M6 285L6 280L3 275L4 270L2 265L1 260L-1 255M29 361L29 356L26 351L25 346L24 341M29 361L24 363L20 366L16 369L10 370L6 373M6 373L1 369L-4 366M-4 366L-4 360L-2 355L-2 349L-1 343L0 338M24 341L19 339L14 338L9 336L4 334M4 334L0 338M-27 392L-22 392L-17 394L-12 396L-7 398L-3 400L2 401M8 395L2 401M8 395L8 390L7 384L6 378L6 373M-26 341L-21 340L-16 340L-10 341L-5 338L0 338M1 320L3 327L4 334M254 395L253 394M254 395L253 401L253 407L254 413L253 419L254 424M253 394L247 394L242 395L237 397L231 397M221 422L227 428M227 428L233 428L238 428L243 426L248 424L254 424M257 481L263 481L269 478L275 478L281 478M257 481L257 476L255 471L256 466L256 461L255 455M284 452L278 452L272 450L266 450L260 450M255 455L260 450M228 364L226 362M228 364L232 366L237 367L242 368L247 370M226 362L226 356L228 350L231 345L231 339M247 370L252 366L256 362M256 362L255 356L255 351L256 345L257 340M231 339L237 338L243 336L249 335M249 335L257 340M253 394L250 388L250 382L249 376L247 370M222 389L224 384L224 379L226 374L227 369L228 364M274 392L269 392L264 395L259 394L254 395M274 392L275 387L276 382L278 377L278 372L281 368M281 368L276 368L271 366L266 364L261 364L256 362M281 368L281 368M284 339L281 335M281 335L275 335L269 337L263 339L257 340M220 312L226 304M230 338L231 339M226 304L230 306L236 308L240 311L246 311L250 314M250 314L250 319L250 325L248 330L249 335M250 314L256 310M256 310L261 310L266 310L271 310L276 311L281 310M281 335L281 330L283 325L283 319L284 314M284 314L281 310M198 362L197 357L196 351L196 346L196 341M198 362L197 363M197 363L192 363L186 363L181 362L176 362L171 361M196 341L191 339L186 336L181 335L176 333L171 331M171 361L171 356L169 351L168 346L169 341L167 336M171 331L167 336M198 339L196 341M226 362L220 360L215 361L209 362L203 362L198 362M195 389L196 384L195 378L197 373L198 368L197 363M195 389L197 391M192 307L187 308L181 310L176 312L171 313M192 307L198 311L204 315M171 313L172 319L170 325L171 331M305 344L312 337M284 314L289 314L295 315L300 314L306 315L312 314M312 337L311 331L312 326L312 320L312 314M35 533L40 532L45 533L50 531L55 531M35 533L34 539L32 544L33 550L31 555L31 561M57 563L51 565L45 563L39 563L34 564M57 563L59 558L59 553L61 547L63 542L64 537M64 537L60 533L55 531M31 561L34 564M-1 540L3 536L6 532L9 527M3 557L9 557L14 559L20 559L25 560L31 561M9 527L15 529L21 528L26 530L32 530M32 530L35 533M30 588L30 582L32 576L34 570L34 564M61 567L57 563M86 563L90 558M90 558L87 554L86 548L83 544L81 539L79 534M79 534L74 536L69 536L64 537M114 511L120 510L125 508L130 506L135 505L140 503L145 502M114 511L111 506M111 506L111 500L113 495L114 490L116 484L117 479M117 479L122 480L127 480L132 481L137 480L142 481M142 481L142 486L145 491L145 496L145 502M-2 786L-0 781L1 775L2 770L2 765L3 759L5 754M-2 786L4 785L9 785L15 784L20 784L26 784M5 754L10 757L15 758L20 760L24 764L30 765M26 784L28 778L28 771L30 765M3 750L5 754M31 764L30 765M57 844L57 839L57 833L57 828L59 823L60 817L59 812M83 813L77 813L71 812L65 811L59 812M804 140L803 135L805 130L804 125L802 120L803 115M804 140L808 144L812 148L816 150L819 154M790 113L783 118M748 86L749 92L752 98L753 104L755 109M778 86L773 86L767 85L762 83L757 83L751 83M783 118L777 116L772 113L766 113L760 112L755 109M797 175L801 180L805 184L807 190L812 193L815 198M797 175L793 173M793 173L789 178L786 182L782 186L778 190L776 195M806 207L801 206L795 206L789 205L784 203L778 203M806 207L810 202L815 198M778 203L776 195M820 157L815 160L810 163L807 168L802 171L797 175M802 228L803 222L805 217L804 212L806 207M786 235L781 231L776 229L772 225M772 218L775 213L776 208L778 203M755 186L760 188L766 190L771 192L776 195M755 186L751 190L747 192L744 196L740 200M761 164L767 165L772 162L778 162L783 163M761 164L761 159L763 153L762 148L762 142L763 137M763 137L769 135L775 132M775 132L777 138L781 143L783 149L785 155M785 155L783 163M755 186L754 180L755 174L755 168M755 168L761 164M793 173L788 168L783 163M804 140L800 144L795 148L790 152L785 155M783 118L781 123L779 128L775 132M730 123L736 121L743 120L749 119M730 123L730 128L731 133L729 138L730 143L729 149M732 151L737 148L741 144L746 142L751 138L755 134M732 151L729 149M755 134L753 129L752 124L749 119M723 115L726 119L730 123M755 109L752 114L749 119M699 144L704 144L709 145L714 146L719 147L724 148L729 149M734 156L732 151M734 156L739 159L744 162L749 166L755 168M763 137L755 134M306 418L299 421L293 423L286 424M306 418L305 412L305 406L307 400L306 394M278 395L279 400L281 405L282 411L281 416L284 421M278 395L283 395L289 395L295 395L301 395L306 394M284 421L286 424M312 422L306 418M286 450L286 445L286 440L286 434L287 429L286 424M307 394L306 394M274 392L278 395M254 425L254 424M254 425L260 426L266 425L272 424L278 421L284 421M260 450L258 445L259 440L257 435L256 430L254 425M343 639L341 634L342 628L340 623L339 618M343 639L337 643L334 648M334 648L328 647L324 644L318 644L314 642M314 642L313 636L314 630L315 624L314 618M314 618L319 617L324 618L329 619L334 618L339 618M340 617L339 618M368 619L366 624L365 629L364 634L364 639L362 644M362 644L355 642L349 640L343 639M313 617L314 618M310 644L309 650L310 656L308 662L307 668L307 673M310 644L305 644L299 643L293 642L287 643L282 642M282 642L280 644M280 644L282 649L282 655L284 661L285 667L285 672M285 672L290 673L296 672L301 674L307 673M336 671L335 665L334 660L334 654L334 648M309 675L307 673M314 642L310 644M282 624L282 630L281 636L282 642M251 648L257 647L263 647L269 644L274 643L280 644M254 617L252 623L252 628L251 634L250 639L248 644M254 617L259 617L264 619L269 621L275 620L280 621M281 676L285 672M395 581L390 583L385 583L381 586L376 586L371 588L366 590M395 581L397 583M373 615L378 617L384 616L389 619M389 619L390 614L391 609L393 604L393 598L395 594L395 588L397 583M443 586L437 587L432 587L426 591L421 591M443 586L443 580L446 574L446 569L447 563M423 561L423 567L423 573L422 579L421 585L420 591M420 591L421 591M362 644L368 652M338 672L344 673L350 673L356 675L362 674M368 652L366 657L365 663L364 668L362 674M368 535L374 533L379 531L383 528L389 528L394 526M368 535L369 540L369 545L371 550L371 555M371 555L377 556L382 560L388 560L394 562M398 532L394 526M398 532L398 538L397 544L396 550L394 556L395 562M395 562L394 562M361 529L368 535M397 513L396 520L394 526M365 559L371 555M395 581L395 575L395 569L394 562M423 539L418 537L413 536L407 536L402 534L398 532M418 557L412 557L407 560L400 559L395 562M397 583L403 584L409 586L414 589L420 591M650 541L657 543L663 544M658 561L662 556L666 550M666 550L663 544M670 632L669 626L667 621L664 615M670 632L677 629L683 624M683 624L681 617L681 610M681 610L676 610L671 612L665 612M664 615L665 612M669 644L669 638L670 632M638 622L643 619L648 618L654 619L659 616L664 615M700 646L698 640L697 633L697 627M697 627L690 625L683 624M644 594L650 597L656 600L662 601M644 594L644 600L642 605L641 611L640 616L637 622M662 601L665 606L665 612M721 621L727 619L734 618M721 621L715 617L710 613M710 613L714 609L719 606L724 603L729 599M734 618L734 610L735 603M735 603L729 599M736 619L734 618M719 632L719 627L721 621M743 599L735 603M709 594L714 594L719 593L724 593M709 594L706 587L704 580M705 578L704 580M705 578L710 576L714 572L719 571M724 593L726 585L727 578M719 571L724 574L727 578M736 577L727 578M729 599L724 593M719 560L721 556M719 560L719 565L719 571M587 649L591 656M587 649L582 651L577 650L572 651L568 653L563 654M591 656L591 662L589 667L589 672M589 672L584 674L578 675L572 675L567 677L561 678M563 654L559 658L556 662L555 667M561 678L557 673L555 667M609 630L614 631L619 633L624 635M609 630L604 631L599 633L594 635L589 638M620 654L614 653L608 656L603 656L597 655L591 656M620 654L624 651M587 639L589 638M587 639L587 649M592 677L589 672M592 677L597 679L603 680L607 684L613 684M613 684L614 679L616 674L616 669L618 664L620 659L620 654M584 703L579 701L573 700L567 698L562 697L556 696M584 703L586 698L588 693L590 688L590 682L592 677M556 696L558 690L560 684L561 678M647 707L645 702L646 697L644 692L645 686L643 681L643 676M647 707L641 708L635 708L629 709L623 709L617 710M643 676L638 678L632 680L628 684L622 686L617 688M617 710L617 704L616 699L618 693L617 688M650 710L647 707M644 675L643 676M617 710L617 710M613 684L617 688M588 710L584 703M454 594L455 600L453 605L453 610L452 615M454 594L459 592L464 591L469 589L475 589M452 615L457 616L463 616L467 619L473 619L478 620M480 593L475 589M480 593L481 599L480 605L482 611L481 617M481 617L478 620M450 558L455 560L460 563L465 565L470 567L476 568M443 586L449 590L454 594M476 568L476 573L475 579L475 584L475 589M447 621L448 627L450 633L452 639M447 621L452 615M452 639L458 640L464 640L469 642L475 642M475 642L477 637L476 631L478 626L478 620M496 591L498 586L500 582L503 578L505 573L508 569L510 564M496 591L491 592L485 592L480 593M476 568L481 565L486 559M486 559L492 559L498 561L504 562L510 564M623 610L617 610L610 610M623 610L625 605L625 599L625 593M610 610L610 605L611 599L610 593M625 593L620 593L615 594L610 593M609 630L609 624L607 618L608 612M636 622L632 619L627 615L623 610M608 612L610 610M644 594L643 593M627 592L625 593M622 571L616 574L610 577L603 579M610 593L607 591M603 579L605 585L607 591M542 536L542 529L545 523L546 517M542 536L544 540M544 540L549 539L554 537L558 535L564 534L568 532M547 516L546 517M547 516L551 519L555 522L560 524L564 527L569 529M569 529L568 532M523 509L529 512L534 513L540 516L546 517M523 509L524 514L523 520L524 525L524 531M524 531L530 532L536 533L542 536M512 541L513 546L514 551L514 557L514 562M512 541L516 537L520 534L524 531M514 562L520 564M544 549L544 540M544 549L539 554L534 557L528 560L523 563M523 563L520 564M521 506L523 509M553 507L550 499M553 507L550 512L547 516M359 759L363 755M340 729L344 731L350 731L355 731L360 732L365 732M363 755L363 749L365 744L364 738L365 732M446 647L450 644L452 639M446 647L446 653L447 658L447 663L448 668M481 650L475 642M481 650L480 656L476 662L476 669M448 668L453 667L459 668L465 667L470 669L476 669M475 511L475 516L474 521L473 527L472 532M475 511L479 507L484 503M504 505L499 504L494 504L489 504L484 503M504 505L504 510L502 515L503 520L502 525L500 530M500 530L495 531L490 533L486 536L480 537M480 537L472 532M448 501L448 501M448 501L454 502L459 506L464 507L470 508L475 511M450 539L456 538L461 535L467 534L472 532M508 474L511 477M508 474L502 475L497 478L491 477L487 479L481 481L476 482M476 482L477 487L481 492L483 497L484 503M510 501L504 505M512 541L509 537L504 533L500 530M514 562L510 564M486 559L485 554L484 548L481 543L480 537M520 426L522 432L521 437L522 443M520 426L523 424M523 424L528 424L533 424L538 426L543 425M522 443L527 446M527 446L532 443L538 442L543 439M543 439L543 433L546 428M546 428L543 425M514 394L515 394M514 394L510 398L508 402L506 407L504 412L500 416L498 421M498 421L503 424L509 425L515 424L520 426M525 404L525 409L525 414L523 419L523 424M546 403L544 408L543 414L544 419L543 425M560 428L553 428L546 428M546 403L551 404L556 405L561 408L566 409M499 308L503 312M526 295L525 302L525 310M503 312L509 311L514 311L519 311L525 310M479 307L479 308M480 334L485 336L491 337L496 338M503 312L505 318L506 324L506 330M496 338L501 334L506 330M573 407L572 401L570 396L568 391L566 386M548 386L549 385M549 385L555 385L561 385L566 386M453 452L459 452L464 455L470 455L476 455M453 452L453 457L451 462L450 467L449 472L449 477M476 455L474 461L474 467L472 473L472 479M472 479L466 479L460 482L454 483M449 477L454 483M427 472L433 474L438 474L444 476L449 477M452 451L453 452M476 482L472 479M448 501L450 495L452 489L454 483M475 426L476 432L476 437L476 443L477 448L478 454M475 426L480 422L485 418M498 421L497 427L498 432L498 437L499 442L499 448L499 453M498 421L491 421L485 418M478 454L483 455L488 455L493 454L498 454M498 454L499 453M452 424L458 424L464 424L469 425L475 426M476 455L478 454M480 397L481 403L482 408L485 413L485 418M498 421L498 421M522 443L517 445L512 446L508 450L503 450L499 453M485 389L490 388L495 388L500 387L505 387M505 387L510 390L514 394M508 474L505 469L502 464L501 459L498 454M526 472L527 465L531 460M531 460L529 453L527 446M700 324L699 319L697 315M674 328L676 322L677 317L680 313M680 313L686 312L692 313L697 315M726 306L725 304M725 304L719 305L714 307L710 310L704 310L699 311M697 315L699 311M664 384L670 383L677 382M664 384L661 379L659 374M659 374L662 369L666 365M677 382L679 377L681 371L684 366M666 365L673 365L680 362M680 362L684 366M682 347L682 352L679 357L680 362M666 347L663 350M663 350L663 355L665 360L666 365M702 365L697 369M697 369L690 368L684 366M725 304L726 299L727 294M757 317L754 312L753 306L750 301L749 295L748 289M727 294L732 293L737 291L743 292L748 289M781 293L778 297L774 301L771 305L768 309L765 314L762 318M781 289L776 287L772 283L768 281L762 280L759 276M748 289L751 285L755 281L759 276M785 250L780 253L775 254L770 257L765 259L760 261L756 264M756 264L756 270L759 276M817 329L813 333L809 336L804 338M804 338L808 343L810 348L811 355L815 360M795 308L795 313L794 318L794 324L793 329L793 335M804 338L798 337L793 335M766 323L770 326L776 327L781 331L786 333L792 335M792 335L793 335M824 399L821 395L820 390L817 385L817 380L813 376L812 371L810 366M810 366L815 360M773 426L778 424L783 421L787 418L792 414L796 411M773 426L774 432L775 437L775 442M775 442L780 441L786 440L791 441L796 440M796 440L796 434L796 428L797 422L798 416M798 416L796 411M810 463L806 460M825 433L821 430L816 427L811 426L808 421L803 418L798 416M806 460L804 455L801 450L800 445L796 440M824 399L818 399L813 403L807 403L802 405L797 408M797 408L796 411M806 460L801 458L795 460L790 460L784 460L779 459M775 442L772 446M779 459L774 453L772 446M779 482L780 477L779 472L777 467L776 462M779 459L776 462M763 478L761 473L760 467M776 462L771 464L766 466L760 467M608 487L606 496M606 496L607 498M631 502L631 502M631 502L625 501L619 499L613 498L607 498M553 507L558 507L564 507M569 529L572 525L575 521M564 507L568 512L572 516L575 521M570 536L568 532M570 536L576 538L581 541L587 542M589 519L588 525L588 531L587 536L587 542M589 519L587 517M575 521L581 518L587 517M744 486L741 482L739 476M739 476L742 470M760 467L759 466M742 470L748 468L753 467L759 466M772 446L767 447L762 448L757 447M759 466L758 460L759 453L757 447M623 559L618 556L611 554M611 554L607 556M603 579L601 578M607 556L607 562L605 567L603 572L601 578M603 481L597 481L591 481L585 479M591 460L589 462M589 462L587 468L585 473L585 479M568 443L570 445M568 443L563 443L558 444L552 445L547 445M570 445L570 450L567 455M567 455L560 457L553 461M547 445L548 451L548 457M553 461L548 457M564 432L565 438L568 443M581 442L575 443L570 445M543 439L547 445M571 460L577 459L583 461L589 462M571 460L567 455M531 460L537 459L543 459L548 457M552 482L551 483M552 482L553 477L552 471L553 466L553 461M622 344L622 339L623 333L624 328M622 344L628 345L633 344L638 346L644 345M624 328L630 329L636 327L643 327M644 345L647 338L648 331M643 327L648 331M601 347L607 349L613 346L619 347M601 347L603 341L602 334L603 328M619 347L622 344M623 327L616 327L610 329L603 328M623 327L624 328M657 329L648 331M646 351L652 350L658 350L663 350M646 351L644 345M566 330L572 331L578 330L584 330M566 330L568 335L567 341L568 347L570 352M584 330L585 336L586 342L586 348M586 348L581 350L575 351L570 352M721 174L716 174L711 172L706 172M721 174L722 180L723 186M706 172L704 177L704 183L703 188L701 193M723 186L717 189L712 193L706 195M706 195L701 193M734 156L731 161L728 166L725 170L721 174M694 165L700 168L706 172M739 201L735 197L731 194L727 190L723 186M675 192L680 192L685 191L690 193L696 192L701 193M587 248L594 246M587 248L582 244L578 240L573 236L569 232M586 213L591 217L593 223M593 223L594 229L594 235L595 240L594 246M566 275L567 269L570 264L572 258M566 275L571 274L576 277L581 276M581 276L583 271M583 271L580 265L578 258M578 258L572 258M561 277L556 275L552 271M561 277L566 275M555 253L553 258L550 262M555 253L561 254L566 256L572 258M550 262L549 265M606 268L600 268L594 270L589 271L583 271M596 292L599 287L603 283L606 277L609 272M596 292L593 293M584 289L588 292L593 293M584 289L583 282L581 276M604 260L601 253L596 247M587 248L582 252L578 258M594 246L596 247M553 235L553 241L555 247L555 253M550 310L549 305L548 299L546 294M550 310L556 308L563 307L568 304M546 294L552 292L557 288L563 287M568 304L571 300L571 295M563 287L567 291L571 295M547 316L550 310M547 316L541 314L534 313L528 313M541 289L546 294M528 313L525 310M550 324L555 325L560 327L565 329M550 324L547 316M565 329L568 323L573 319L575 313M575 313L571 309L568 304M561 277L563 287M584 289L577 292L571 295M454 256L459 254L465 255L470 253L475 252M469 224L473 229L478 233M469 224L463 223L458 221M458 221L451 226M475 252L477 250M478 233L477 239L479 244L477 250M495 198L496 198M495 198L492 202L487 205L483 208L480 212L477 217L473 221L469 224M506 223L504 228M478 233L484 233L489 232L493 229L499 230L504 228M480 281L479 275L477 269L477 264L476 258L475 252M499 274L499 268L502 263L502 257M477 250L482 252L487 252L492 254L497 255L502 257M658 328L659 322L659 316L661 310M680 313L675 307M661 310L668 308L675 307M640 306L641 311L642 316L642 322L643 327M640 306L642 304M642 304L648 306L653 308L659 308M661 310L659 308M623 289L622 283L619 278M623 289L629 291L635 291L641 291M619 278L623 276L628 275L634 273L639 272L644 270M641 291L642 286L642 281L644 276L644 270M642 304L642 299L642 293M659 308L658 302L660 295L661 289M642 293L648 291L655 291L661 289M633 255L642 259M619 278L611 273M642 259L642 264L645 269M644 270L645 269M676 300L675 307M676 300L672 296L668 291L665 286M665 286L661 289M596 292L601 295L605 299M623 289L620 294M605 299L610 298L615 297L620 294M640 306L633 308L626 309M641 291L642 293M620 294L623 299L623 304L626 309M623 327L623 320L621 314M626 309L621 314M602 326L605 321L607 316L610 311M602 326L595 323L589 321M589 321L587 316M608 308L610 311M608 308L602 309L597 312L592 315L587 316M587 316L587 316M603 328L602 326M621 314L616 312L610 311M601 347L599 349M599 349L591 350M584 330L587 326L589 321M586 348L591 350M565 329L566 330M575 313L581 314L587 316M605 299L608 308M593 293L591 298L591 305L588 310L587 316M443 308L437 310L431 310L426 310M443 308L445 304L447 298L448 293L449 288L450 283L451 278M426 310L425 304L422 299L419 294L419 287L417 282M451 278L449 276M449 276L444 275L439 276L435 279L430 279L424 278L419 280M419 280L417 282M452 314L447 311L443 308M424 339L425 333L424 326L422 320L422 314M422 314L426 310M476 285L471 283L466 282L461 280L456 280L451 278M450 261L449 268L449 276M425 249L422 252M422 252L423 257L420 263L420 268L419 274L419 280M392 341L390 338M422 314L417 314L411 315L406 315L401 315M401 315L398 319L396 324L395 329L393 333L390 338M112 16L116 13L121 11L125 8L130 6L135 4L139 3L144 0M112 16L107 9M144 0L148 -7M189 1L184 -2L178 -2L173 -3M189 1L190 7L189 13L190 19L191 25M191 25L186 24L181 24L175 25L170 25L165 25M165 25L165 19L168 14L167 9L169 4L170 -2M199 -4L193 -3L189 1M198 35L195 30L191 25M257 121L255 127L253 133L252 139M218 114L224 112L230 109L235 106M218 114L217 119L218 124L220 129L219 135M219 135L224 141M252 139L247 139L241 140L235 139L230 140L224 141M330 139L326 143L322 146L317 148M295 135L295 141M295 141L301 143L306 145L311 147L317 148M218 114L212 111L207 107L201 105M199 90L197 94M197 94L199 100L201 105M169 56L166 61L165 67L162 72L162 78L160 83M169 56L175 54L181 55L187 54L192 54M160 83L164 87L170 89L174 93M197 94L191 95L186 93L180 94L174 93M151 109L157 110L163 111L169 113M151 109L149 104L149 99L148 94L147 88M160 83L153 85L147 88M174 93L174 98L171 102L171 108L169 113M786 48L781 51L776 54L772 56L766 58L760 59L756 62M786 48L787 43L788 38M787 36L788 38M787 36L781 36L776 35L770 35L764 33L759 34L753 32M756 62L755 57L754 52L755 47L754 42L754 37L753 32M753 32L753 32M754 65L756 62M792 60L789 54L786 48M812 31L807 31L802 33L798 36L793 37L788 38M779 -0L779 5L780 10L781 16L783 21L785 26L785 31L787 36M758 6L757 11L756 16L756 22L753 26L753 32M736 32L741 32L747 32L753 32M458 56L453 50L448 47M428 79L427 75L425 70L425 64M425 64L429 61L433 57L438 54L443 50L448 47M332 11L327 8L322 6L318 3L313 0M332 11L337 7L342 3L345 -2M421 -7L425 -4L430 -2L436 -1L440 3L445 4M445 4L447 -1L451 -6L452 -11L455 -15M474 14L477 18L479 23M474 14L478 10L480 4M507 7L502 5L499 1L494 -1M480 4L484 2L489 -1L494 -1M440 169L445 176M472 152L472 158L474 164L474 170M445 176L451 176L457 175L462 173L468 171L474 170M421 203L426 201L432 201L436 198L442 198L447 198L452 196M445 176L447 181L450 186L450 191L452 196M427 229L423 225M458 221L458 215L456 210L457 204L455 199M455 199L452 196M311 786L310 792L309 797L308 803L308 808L306 814M311 786L312 786M333 790L334 796L333 802L334 808L335 814M366 796L366 802L368 807M368 807L363 809L358 811L353 813L347 812L342 814L337 817M368 807L372 814M582 817L588 813L592 807M592 807L597 811L602 813L607 817L611 821M560 806L562 800L566 795L569 790M592 793L592 800L592 807M625 801L621 806L619 812L616 817L611 821M422 809L421 803L422 797L423 792M451 786L447 784M423 792L428 789L435 788L441 786L447 784M452 757L445 764M452 757L457 757L461 760L467 759L472 761L477 761M477 761L477 766L478 771L479 776L478 782M447 784L446 779L447 774L444 769L445 764M537 805L537 799L535 794L535 788L534 783L533 777M510 811L509 806L507 801L505 796L504 790M533 777L527 779L523 781L518 783L514 786L509 789L504 790M562 780L556 779L551 776L545 776L540 774L534 772M533 777L534 772M482 785L487 784L493 785M504 790L499 787L493 785M534 772L533 765M493 785L495 780L498 775L502 771L504 766L508 762L511 758M533 765L527 763L522 761L516 761L511 758M730 754L730 747L729 740M730 754L726 757L721 759L715 761L711 764M729 740L724 739L719 735L713 735L708 732M708 732L706 737L704 742L705 748L702 752M702 752L706 758L711 764M739 762L735 758L730 754M739 733L734 736L729 740M710 780L711 775L711 769L711 764M704 725L708 732M672 759L677 757L682 756L687 756L692 754L697 754L702 752M628 438L633 441L636 447L641 451M630 460L635 459L640 457M641 451L640 457M648 429L648 436L646 442M641 451L643 446L646 442M639 483L644 480L647 475M647 475L647 468L644 461M640 457L644 461M729 498L727 492L722 487L719 482M739 476L733 476L727 479L721 478M719 482L721 478M704 495L705 488M719 482L714 483L709 485L705 488M682 499L680 498M680 498L681 492L681 487L684 482M684 482L690 480L696 479M705 488L700 485L696 479M776 579L780 572M776 579L776 585L777 590M780 572L785 576L790 578L795 581L799 585L804 588M777 590L782 590L787 592L791 594L796 595L801 596M801 596L804 588M780 564L780 572M756 579L761 580L766 580L771 578L776 579M773 594L777 590M812 576L808 582L804 588M803 610L801 603L801 596M-7 108L-2 112L3 115M-8 140L-5 136L1 134L5 130M3 115L3 120L4 125L5 130M135 50L141 52L147 54M135 50L136 43L136 37L136 31M136 31L142 29L147 26M147 26L153 29L160 30M160 30L162 36L164 42L166 48L167 54M167 54L160 53L154 54L147 54M113 21L118 25L124 25L130 28L136 31M113 21L112 16M144 0L144 6L144 11L145 16L146 21L147 26M165 25L160 30M169 56L167 54M134 85L137 81L138 75L141 70L142 64L145 59L147 54M134 85L140 88L147 88M57 35L58 41L61 46L61 52L62 57M57 35L51 35L46 32L40 32L35 29L29 28M62 57L57 57L51 57L45 57L39 58M39 58L37 54L35 49L32 45L31 39L29 35L26 30M29 28L26 30M48 2L45 7L42 11L39 15L37 20L33 24L29 28M64 17L63 23L59 29L57 35M1 54L6 54L11 57L16 57L21 59L26 59L32 60L36 61M9 28L15 28L21 30L26 30M36 61L39 58M113 21L110 26L107 31L105 37M80 32L82 36M82 36L88 36L93 35L99 36L105 37M115 63L120 60L126 57L131 54L135 50M115 63L112 59L108 55M105 37L107 43L108 49L108 55M205 617L204 611L203 605L203 599L200 593L200 587M195 622L189 621L183 620L178 618L173 615M173 615L174 610L174 605L172 600L171 594L172 589M200 587L194 587L189 589L183 588L178 588L172 589M223 583L217 583L212 585L206 585L201 586M223 583L224 577L227 572L228 566M228 566L224 561L220 556M220 556L215 556L209 557L203 557L198 559M201 586L200 581L201 575L199 570L198 565L198 559M256 565L261 565L267 563L272 561L277 560L283 560M256 565L252 562M278 535L273 532L266 532L260 530L255 528M252 562L252 557L250 552L251 546L249 541L249 536M255 528L252 532L249 536M252 562L246 562L240 563L234 564L228 566M220 556L223 550L222 544L223 537M249 536L244 535L238 536L233 536L228 537L223 537M149 507L147 512L145 517L144 523L140 528L139 533M149 507L145 502M114 511L114 517L115 522L116 528M139 533L133 533L127 532L122 530L116 528M109 591L110 591M110 591L110 585L112 579L112 573L113 567L114 561M90 558L96 558L103 557L109 557M114 561L109 557M82 530L87 531L92 531L98 531L103 530L108 530L113 531M82 530L79 534M109 557L110 552L112 547L113 542L112 536L113 531M251 613L245 613L238 613L232 613L226 613M251 613L251 608L254 603L253 597L256 592M255 591L256 592M255 591L249 591L244 591L238 590L233 590L227 589M227 589L228 595L226 601L227 607L226 613M254 617L251 613M218 620L222 617L226 613M283 595L277 594L272 594L266 593L261 592L256 592M256 565L256 570L256 575L255 581L256 586L255 591M223 583L227 589M200 587L201 586M168 811L172 815M56 699L61 705M88 675L86 680L85 686L83 692L83 697L82 703M88 675L87 674M82 703L77 703L72 703L66 705L61 705M53 733L55 731M61 705L60 710L59 715L57 720L56 726L55 731M117 757L111 758L105 757L99 757L94 759L88 759M117 757L117 752L116 747L115 742L114 737L113 732L114 727M114 727L108 728L103 729L97 731L91 732L86 734M88 759L87 753L87 747L86 741L86 735M86 735L86 734M141 755L141 750L141 744L141 738L140 733L140 727M140 727L135 728L130 726L125 726L120 727L114 726M120 759L117 757M114 726L114 727M111 707L111 714L113 720L114 726M111 707L105 707L100 706L95 706L89 706L84 705M84 705L84 711L86 717L85 723L86 729L86 734M82 703L84 705M55 731L60 732L65 734L70 732L75 735L81 733L86 735M195 698L189 699L183 702L178 705L172 707M195 698L195 693L195 687L195 681M195 681L189 681L184 679L178 677L172 675M172 675L171 681L172 687L170 693L169 699L168 705M168 705L172 707M140 727L142 724M111 707L115 701M142 724L144 718L146 711L147 705M147 705L144 702M144 702L138 701L132 702L127 700L121 701L115 701M88 675L94 675L99 676L105 677L111 676M115 701L113 696L114 691L112 686L111 681L111 676M112 642L113 648L113 653L113 658L113 664L113 669L113 674M111 676L113 674M257 706L256 712L255 718L254 725M278 730L272 731L266 730L259 731M254 725L259 731M284 758L278 757L272 759L266 757L261 759L255 759M259 731L259 737L258 742L256 748L256 753L255 759M201 730L207 731L213 730L219 732L224 731M201 730L201 725L202 720L201 715L201 709L201 704M201 704L206 704L211 703L216 702L222 701M227 729L224 731M227 729L227 723L228 718L228 712L227 707M222 701L227 707M224 677L224 683L221 689L223 695L222 701M205 673L201 678L195 681M195 698L201 704M254 725L248 725L243 727L238 728L232 729L227 729M231 757L237 758L242 760L248 758L253 760M231 757L229 752L227 747L226 742L225 737L224 731M255 759L253 760M251 700L245 702L238 702L233 705L227 707M172 707L173 713L175 718L175 723L178 728M201 730L199 732M199 732L194 730L188 731L183 729L178 728M142 724L147 726L152 727L156 730L161 731L166 732L171 735M147 705L152 705L157 706L163 704L168 705M171 735L178 728M142 756L148 756L154 754L160 753L167 754M171 735L170 741L168 747L167 754M164 790L166 785L166 780L169 775L170 770L172 765L173 760M167 754L173 760M60 333L61 327L58 322L59 317L56 312L55 306M60 333L55 337M55 337L50 336L44 336L39 335L34 333M34 333L35 327L35 320L35 314L37 308M55 306L49 308L43 308L37 308M4 315L9 313L15 312L20 312L25 310L30 308L35 307M6 285L11 285L16 285L21 283L26 282M26 282L28 287L29 292L31 297L33 302L35 307M24 341L30 337L34 333M35 307L37 308M197 253L203 255L207 258L213 258L218 260L223 263M197 253L196 258L195 264L192 268L191 274L189 278M189 278L196 285M196 285L201 286L206 285L211 286L216 286L221 285L226 285M223 263L223 268L224 274L225 279L226 285M226 304L225 298L226 292L226 285M256 310L256 304L254 299L253 294L252 288L251 283M226 285L231 284L236 284L241 284L246 282L251 283M192 307L193 302L194 296L194 291L196 285M226 285L226 285M283 288L282 294L283 299L282 305L281 310M283 288L277 287L272 285L266 283L261 281L255 280M255 280L251 283M197 253L197 252M197 252L199 247L201 242L203 236L205 231M223 263L227 257L232 252M232 252L230 247L228 243L226 238L225 233L222 229L221 224M205 231L210 229L215 226L221 224M55 365L49 365L43 367L37 366M55 365L58 366M58 366L60 371L62 376L64 381L64 387M37 366L34 372L33 377L34 383L34 389L32 394M32 394L37 395L42 395L48 393L53 395L58 395M58 395L64 387M29 361L37 366M55 337L56 343L56 348L54 354L55 359L55 365M87 336L87 341L86 346L84 351L84 356M87 336L86 334M86 334L81 333L76 333L70 334L65 334L60 333M84 356L79 359L74 360L68 362L63 364L58 366M92 366L89 361L84 356M92 366L90 370L88 375L86 381L83 385L82 390M82 390L76 389L70 387L64 387M29 396L24 395L18 395L13 395L8 395M29 396L32 394M195 389L190 389L185 390L180 392L175 393L170 393M171 361L168 363M170 393L170 387L169 381L169 375L169 369L168 363M167 336L162 337L157 339L151 340L146 341M168 363L163 364L158 363L153 363L148 364M148 364L146 359L145 354L145 349L144 344M146 341L144 344M116 367L121 369L126 371L130 373L135 375L140 376M116 367L118 361L119 355L121 350L121 344M140 376L144 370L148 364M144 344L138 344L132 343L126 344L121 344M87 336L93 337L98 336L104 337L110 336L115 336M110 370L116 367M110 370L104 369L98 368L92 366M115 336L121 344M112 474L117 479M112 474L112 468L113 463L114 458L114 453M142 481L144 479M142 451L137 452L131 451L125 451L119 452L114 453M142 451L143 452M143 452L144 457L145 463L142 468L145 474L144 479M202 418L197 423M170 393L167 395M167 395L168 400L168 406L170 410L170 416L172 421M172 421L178 422L185 421L191 422L197 423M143 452L149 449L155 449L161 448L167 446M144 479L149 479L155 477L161 477L166 476M166 476L166 471L167 465L168 460L170 455L171 450M167 446L171 450M167 510L161 509L155 507L149 507M167 510L170 506L175 503M166 476L170 479M175 503L175 496L173 490L171 485L170 479M227 428L226 433L227 438L227 443L226 448L225 453M255 455L249 455L243 454L238 455L232 456L226 455M226 455L225 453M197 423L195 428L196 434L196 440L194 445L194 451M225 453L220 452L215 452L209 452L204 452L199 451L194 451M171 450L177 450L182 450L188 451L193 451M170 479L176 477L182 476L187 475L193 475M193 475L192 469L193 463L194 457L193 451M172 421L166 428M166 428L166 434L165 440L167 446M194 451L193 451M352 171L348 173L343 176L339 178M369 211L363 209L359 206L353 205L348 202L342 201L338 197L332 196M339 178L336 184L335 190L332 196M317 148L318 153L320 158L320 163M339 178L334 175L329 171L324 167L320 163M364 226L358 227L353 228L347 228L341 229M364 226L366 221L369 217M341 229L340 223L337 219L336 213L333 208L333 203L329 198M332 196L329 198M311 228L316 230L322 230L327 231L332 232L337 232M311 228L310 234L311 240L310 246L310 252M311 254L310 252M311 254L317 252L323 252L329 250L335 250M335 250L336 244L335 238L337 232M341 229L337 232M329 198L324 199L319 202L313 202L307 203M311 228L306 219M306 219L307 214L308 209L307 203M311 171L315 167L320 163M311 171L310 176L308 180L308 186L305 190L305 195L303 200M307 203L303 200M369 253L369 253M369 253L374 254L379 252L384 251L389 251L394 252M369 253L367 258L369 264L369 269L368 275L368 280M394 252L395 252M395 252L396 258L396 264L399 269L400 275L401 280M368 280L373 282L379 284L385 286L391 287M401 280L396 283L391 287M364 226L366 231L367 237L368 242L368 247L369 253M341 256L346 254L352 254L358 253L363 252L369 253M341 256L335 250M399 228L397 234L396 240L396 246L394 252M422 252L417 253L411 251L406 253L400 253L395 252M417 282L412 281L406 281L401 280M401 315L396 309L391 304M391 304L391 299L391 293L391 287M283 288L288 283M288 283L294 282L299 280L305 281L311 279M311 279L313 280M312 314L318 310M318 310L317 304L317 298L314 292L314 286L313 280M311 279L311 272L310 266L310 260L311 254M341 256L339 261L338 267L337 273L338 279M313 280L319 280L325 280L332 279L338 279M29 396L31 402L33 408L33 413L36 419M58 395L59 400L58 406L60 412L60 417M36 419L41 418L47 417L54 418L60 417M89 785L88 780L88 775L89 770L88 765L87 760M89 785L85 789M85 789L80 789L74 788L69 789L64 788L58 787M87 760L82 761L77 759L72 760L67 761L62 760L57 761M57 761L57 766L57 772L59 776L58 782L58 787M113 790L109 789L103 788L99 787L94 787L89 785M88 759L87 760M83 813L84 807L83 801L85 795L85 789M54 759L57 761M56 809L56 804L57 798L56 793L58 787M56 809L51 811L46 810L41 813L35 813L30 814M58 787L52 786L46 787L40 787L34 787L28 788M28 788L27 793L29 798L29 803L29 808L30 813M59 812L56 809M58 787L58 787M26 784L28 788M664 543L669 540L675 538L680 535L686 533M664 543L665 538L666 532L667 526L666 521M666 521L667 520M667 520L673 521L678 523L684 523M684 523L686 528L686 533M644 533L643 525M647 520L643 525M647 520L653 521L660 521L666 521M663 544L664 543M661 496L668 500M661 496L655 498L649 501L643 503M647 520L646 514L644 509L643 503M668 500L668 505L668 510L666 515L667 520M668 500L674 499L680 498M684 523L684 523M695 542L692 542M695 542L698 543M692 542L690 548L685 553L682 558M698 543L700 548L703 552L706 557M706 557L701 562L696 566M696 566L690 563L683 563M683 563L682 558M707 518L705 523L702 528L700 533L698 538L695 542M686 533L689 537L692 542M720 536L715 538L709 540L704 543L698 543M666 550L671 553L676 556L682 558M719 560L712 559L706 557M705 578L703 573L699 570L696 566M697 627L699 621L701 615M681 610L684 608M684 608L689 611L695 613L701 615M710 613L706 612M709 594L705 600M705 600L706 606L706 612M701 615L706 612M689 585L686 580L683 576L679 572M689 585L687 593M687 593L685 595M685 595L679 595L674 594L669 592M669 592L669 587L669 582L667 577M667 577L673 575L679 572M704 580L699 583L694 583L689 585M683 563L682 568L679 572M705 600L699 597L693 595L687 593M684 608L685 602L685 595M662 601L665 596L669 592M659 574L667 577M532 596L525 592M532 596L531 603L530 609L529 615M525 592L521 595L516 597L511 598L506 599M506 599L505 605L506 610L508 616L507 621M529 615L526 620L521 622M521 622L515 621L508 622M507 621L508 622M533 596L532 596M533 596L536 601L541 604L546 607L550 611L554 615M557 623L554 615M557 623L551 622L546 621L541 619L535 616L529 615M520 564L522 569L523 575L522 581L524 586L525 592M496 591L501 595L506 599M481 617L487 617L492 619L497 621L502 621L507 621M552 635L546 638L541 643L535 646M552 635L556 629L558 623M535 646L533 641L530 636L527 631L524 627L521 622M558 623L557 623M501 646L504 641L505 634L506 628L508 622M501 646L494 647L488 648L481 650M533 596L535 595M523 563L528 566L532 570L538 571L543 575M535 595L538 590L540 585L540 580L543 575M554 615L552 610L552 604L551 599L550 593M535 595L543 595L550 593M389 619L390 620M421 591L420 598L420 604L420 611M390 620L395 619L400 616L405 616L410 613L415 611L420 611M447 621L442 621L437 621L432 619L426 619M420 611L423 615L426 619M589 603L582 598M589 603L592 610M592 610L591 612M591 612L586 614L582 617L576 617L571 618L566 620L561 622M582 598L576 599L571 602M571 602L570 608L567 612L564 617L561 622M561 622L561 622M608 612L602 612L598 610L592 610M607 591L603 595L599 598L594 600L589 603M589 638L588 632L588 627L591 622L591 617L591 612M587 639L583 636L578 635L574 631L570 628L565 626L561 622M558 623L561 622M565 596L560 596L555 595L550 593M565 596L571 602M550 593L550 593M552 635L555 640L558 644L560 649L563 654M537 663L533 670M537 663L535 658L532 653M533 670L528 671L522 671L517 673L512 673L507 674M532 653L526 654L520 653L514 652L508 653M508 653L507 658L507 663L506 669L507 674M535 646L532 653M555 667L549 665L543 663L537 663M501 646L508 653M503 681L507 674M503 681L497 681L491 680L486 678L480 677M480 677L476 669M340 707L345 705L351 704L356 703L361 703M365 732L366 731M366 731L366 725L364 720L364 714L363 708L361 703M362 674L364 676M364 676L363 681L364 686L363 691L364 697L362 702M362 702L361 703M505 387L504 382L507 377L506 371L506 366M526 372L527 378L525 384M526 372L524 369M524 369L519 367L512 367L506 366M478 365L483 365L488 363L493 363L497 359L502 359M506 366L502 359M496 338L498 343L499 348L502 353L502 358M502 359L502 358M546 371L548 375M546 371L547 365L545 360L546 355M548 375L554 373L559 369L565 367L571 365M546 355L550 352M550 352L555 351L560 353L565 353L570 352M570 352L569 359L571 365M526 372L533 372L539 370L546 371M549 385L548 375M524 369L527 364L528 358L530 353M530 353L535 354L541 355L546 355M571 382L566 386M571 382L571 376L570 371L571 366M571 366L571 365M547 330L549 336L549 341L549 346L550 352M547 330L550 324M570 352L570 352M591 350L591 355L588 361L590 366L589 372M589 372L583 369L577 369L571 366M699 311L697 306L699 301L697 295M676 300L681 295L687 292M687 292L692 294L697 295M727 294L724 290M724 290L718 291L712 291L706 292L700 292M697 295L700 292M735 210L731 213L725 215L721 219L716 221M752 235L750 241L747 246L745 253M745 253L740 250L738 245L734 241L731 236L727 233L723 230L720 225L716 221M756 264L749 260L745 254M745 253L745 254M672 196L675 201L678 205L681 210L682 215L685 220M685 220L691 223L697 225L703 228M706 195L707 201L709 206L709 212L712 217L712 222M703 228L708 226L712 222M712 222L716 221M737 424L743 423L748 421L753 421L759 420M737 424L738 429L740 434L739 439L741 444M753 445L747 445L742 445M753 445L754 439L755 433L758 428L760 423M760 423L759 420M741 444L742 445M738 461L742 470M738 461L741 456L740 450L742 445M757 447L753 445M773 426L767 425L760 423M613 519L618 520M613 519L606 521L600 523M620 534L615 537L611 541L606 543M620 534L619 529L620 524M620 524L618 520M600 523L600 529L602 535L602 541M606 543L602 541M631 502L629 507L624 511L620 515L618 520M607 498L608 503L609 509L612 513L613 519M606 496L600 499L594 500L588 503M589 519L594 521L600 523M587 517L588 510L588 503M627 545L624 540L620 534M611 554L608 549L606 543M643 525L638 526L632 526L626 525L620 524M643 503L639 501M587 542L590 546M590 546L596 544L602 541M586 500L581 500L576 498L570 498M586 500L587 495L584 490L585 485L583 480M570 498L568 493L565 488L564 483M583 480L578 479L572 478M564 483L572 478M564 507L567 502L570 498M588 503L586 500M585 479L583 480M552 482L558 482L564 483M571 460L572 466L572 472L572 478M601 578L593 575M582 598L581 592L583 587L584 581M584 581L588 578L593 575M607 556L602 558L595 557L590 559M593 575L593 570L591 565L590 559M590 546L588 551L588 556M588 556L590 559M603 375L604 380L604 386M603 375L596 373L589 372M589 372L585 378L583 384M604 387L604 386M604 387L598 388L593 389L588 391M588 391L583 384M599 349L601 354L603 359L604 365L606 370M589 372L589 372M606 370L603 375M571 382L577 382L583 384M582 408L584 403L585 397L588 391M605 403L604 398L605 392L604 387M627 392L624 389M627 392L632 391L637 390M624 389L626 383L625 378L626 372L625 367M637 390L640 384L642 379L644 374L645 368M645 368L643 366M643 366L637 366L632 366L626 366M626 366L625 367M626 401L627 392M604 386L609 387L614 387L619 389L624 389M637 390L637 390M606 370L612 369L619 367L625 367M663 386L664 384M659 374L654 372L649 370L645 368M646 351L644 358L643 366M619 347L621 354L625 359L626 366M616 223L615 225M616 223L622 224L628 226L634 227L639 229M615 225L615 230L615 236M615 236L621 240L626 245M639 229L637 234L632 237L629 240L626 245M620 204L620 211L617 217L616 223M593 223L599 224L604 224L610 224L615 225M596 247L601 244L606 243L611 240L615 236M627 247L626 245M505 231L505 237L503 243L503 249L503 256M505 231L509 235L513 238L519 239L524 242L528 245M503 256L510 255L516 257L522 256M522 256L527 249M527 249L528 245M504 228L505 231M502 257L503 256M538 236L532 240L528 245M528 270L524 263L522 256M550 262L545 260L541 256L536 254L532 252L527 249M644 257L650 255L656 252L661 248M644 257L643 252L646 247L645 241L646 236L647 231L647 226M661 248L661 242L663 236M663 236L657 233L653 228L647 225M647 225L647 226M642 259L644 257M639 229L647 226M685 220L681 223L677 226L675 231L671 234M648 203L648 208L647 214L646 220L647 225M671 234L663 236M645 269L651 271L658 272M665 286L666 279M666 279L662 276L658 272M687 292L684 286L682 280L681 273M666 279L671 276L676 275L681 273M661 248L667 255M658 272L661 266L664 260L667 255M671 234L674 238L676 243L678 247L683 250L685 255L687 259M667 255L672 257L678 256L682 258L687 259M55 152L51 149L45 148L42 143L37 140L33 138M55 152L53 158L53 163L52 168L50 173L50 178M22 163L22 158L23 152L25 147L25 141M22 163L24 169L28 174M33 138L25 141M28 174L33 175L38 176L43 178L48 179M50 178L48 179M-7 165L-1 165L5 164L10 164L16 162L22 163M5 130L11 132L15 136L20 139L25 141M77 179L79 181M77 179L71 180L66 180L60 179L55 179L50 178M48 200L53 202L58 204L62 207M48 200L47 195L49 190L49 184L48 179M79 181L76 186L73 190L71 195L67 199L65 203L62 207M110 154L110 154M110 154L106 159L104 163L101 168L98 172L95 177L94 182L90 187M77 179L77 173L76 168L78 163L77 157L78 152M110 154L105 152L100 151L95 149L91 145L86 144M79 181L85 183L90 187M86 144L83 148L78 152M55 152L62 150M78 152L73 151L68 151L62 150M208 199L213 203L218 206M208 199L206 195L202 191L201 185L197 182L196 176M196 176L195 175M195 175L201 173L205 171L211 170L216 169L221 168M230 172L221 168M230 172L229 179L229 185L227 191L228 197M228 197L223 202L218 206M186 217L191 220L196 223L200 228L205 231M186 217L190 213L194 209L199 206L204 203L208 199M221 224L221 224M221 224L221 218L219 212L218 206M186 217L184 217M179 210L184 217M179 210L182 206L184 200L186 196L188 191L191 186L194 181L196 176M219 135L214 137L209 138L204 140M224 141L224 146L224 151L223 157L223 162L221 168M195 175L193 173M193 173L195 167L195 161L198 156L200 151L201 145L204 140M258 149L255 154L254 160L252 166L252 171M258 149L263 148L268 148L273 149L278 149L283 150L288 149M288 149L287 155L287 160L288 166M256 177L261 174L266 173L271 172L277 171L281 169L287 168M256 177L252 171M287 168L288 166M252 139L255 144L258 149M230 172L235 171L241 173L246 171L252 171M295 141L292 145L288 149M311 171L305 170L300 167L294 168L288 166M261 196L267 196L273 195L278 196L284 198L290 197M261 196L260 189L258 183L256 177M292 196L290 197M292 196L291 191L292 185L290 179L288 174L287 168M256 203L261 196M256 203L251 203L245 202L239 199L234 199L228 197M303 200L298 197L292 196M446 43L442 38L438 35L433 31M446 43L449 39L453 36L456 32L458 27L462 23L467 20L469 15M433 31L436 27L439 23L442 18L443 13L447 9M469 15L464 13L458 13L453 10L447 9M417 29L422 30L428 30L433 31M417 29L416 35L415 40L414 46L414 52L413 58M425 64L419 60L413 58M448 47L446 43M474 14L469 15M421 -7L421 -2L420 3L419 8L419 13L417 18L418 23L416 28M416 28L417 29M445 4L447 9M480 4L478 -1L474 -5L471 -8L467 -12L465 -17M383 -9L387 -6L390 -1L395 2M375 -9L372 -4L368 2L363 7M363 7L365 12L366 19L368 25M395 2L395 8L394 13L393 19L393 25M393 25L388 25L382 26L376 25L371 27M368 25L371 27M419 -11L414 -8L409 -7L405 -2L399 -2L395 2M345 -2L350 -0L355 1L358 5L363 7M399 27L405 28L410 27L416 28M399 27L393 25M475 190L476 184L475 177L474 170M475 190L480 192L485 194L490 196L495 197M474 170L479 171L485 170L490 170L495 172L501 171M495 197L497 192L498 187L497 181L500 176L501 171M455 199L460 197L465 194L469 191L475 190M474 170L474 170M495 198L495 197M504 166L501 171M369 46L366 51L363 56L361 62M369 46L374 49L379 50L384 53L389 56L394 57M361 62L364 67L365 73L369 78M369 78L374 80L379 81L385 84L390 85M390 85L392 84M392 84L394 80L396 75L397 69L399 65M394 57L399 65M399 27L399 32L398 37L397 42L395 47L394 52L394 57M371 27L369 34L369 40L369 46M383 116L385 111L386 106L387 101L387 95L389 90L390 85M362 85L369 78M409 90L403 88L397 87L392 84M413 58L408 59L404 63L399 65M331 22L326 24L321 26L316 27M331 22L335 26L340 30M340 30L339 36L336 41L335 47L334 53L332 59M314 33L316 38L319 43L319 49L321 54L324 59M314 33L316 27M324 59L331 59M331 59L332 59M332 11L331 17L331 22M304 12L308 17L312 22L316 27M368 25L362 25L357 28L351 29L346 28L340 30M361 62L355 62L349 61L344 60L338 60L332 59M312 65L318 63L324 59M284 40L289 38L294 38L299 37L304 35L309 35L314 33M337 83L335 77L334 71L331 65L331 59M423 792L421 790M445 764L440 762L435 760L431 758L426 756L421 754M421 754L422 759L421 764L420 769L422 775L422 780L421 785L421 790M373 785L378 783L383 781L388 779L393 779M363 755L368 756L373 757L379 757L384 757L389 758L395 758M395 758L393 763L394 768L394 774L393 779M390 817L393 811L394 806L395 800L396 795L397 789L399 784M421 790L415 789L410 787L404 786L399 784M399 784L393 779M572 761L566 757L560 754M533 765L534 763M560 754L555 755L550 757L544 758L540 762L534 763M663 405L670 405L676 404L682 406M677 382L683 384L689 387M682 406L685 400L687 393L689 387M720 371L718 378L719 386M697 369L697 374L695 380L693 386M719 386L713 387L708 390L702 391M702 391L698 388L693 386M689 387L693 386M661 496L661 489L660 482M684 482L678 477M678 477L672 478L667 482L660 482M647 475L653 477L658 480M660 482L658 480M738 461L731 461L724 463M741 444L736 444L731 445L726 443L720 445M720 445L721 451L722 457L724 463M721 478L718 470M724 463L718 470M284 505L278 505L272 505L266 505L260 505L254 505M257 481L255 483M254 505L254 499L254 494L256 489L255 483M255 528L253 521L252 515L251 509M254 505L251 509M226 455L226 460L224 465L224 470L224 476M255 483L250 482L245 480L240 480L235 478L229 478L224 476M285 758L284 764L284 769L283 775L283 780L281 786M253 760L254 766L255 771L256 776L257 781L257 786M257 786L263 785L269 787L275 787L281 786M311 786L306 786L301 788L296 789L290 788L285 789M285 789L286 795L285 801L283 806L283 812M285 789L281 786M231 757L226 760L222 766M199 732L197 737L197 743L198 749L196 755L196 761M222 766L217 764L212 763L206 762L201 761L196 761M173 760L178 761L183 762L189 761L194 762M194 762L196 761M168 794L173 793L178 793L183 791L187 788L193 789M194 762L194 767L193 773L193 778L193 783L193 789M144 681L140 676L135 672M144 681L149 680L154 678L160 677L166 676L171 673M135 672L136 665L140 660L141 653M171 673L170 668L171 663L169 658L170 653M148 648L141 653M148 648L153 647L158 647L163 647M163 647L170 653M144 702L143 697L144 692L145 686L144 681M113 674L119 674L124 674L130 672L135 672M172 675L171 673M114 639L120 641L125 644L130 648L135 651L141 653M192 648L186 648L181 649L176 651L170 653M136 619L131 619L126 621L121 623L115 624M136 619L138 624L139 629L141 634L145 638L147 643L148 648M141 614L136 619M141 614L146 616L151 617L157 617L162 619L167 620M167 620L166 625L166 631L165 636L163 641L163 647M167 620L173 615M5 194L-0 198M5 194L13 194M13 194L16 199L20 203L21 209L25 213L27 218M27 218L22 220L16 222L12 227L6 228L2 231M2 231L-0 230M-13 172L-9 176L-7 181L-2 185L1 189L5 194M28 174L25 180L20 184L17 190L13 194M28 218L33 215L36 210L41 208L44 203L48 200M28 218L27 218M4 250L-1 255M4 250L4 243L4 237L2 231M28 218L31 222M31 222L37 223L42 224L47 225L53 225L57 228L63 228M62 207L64 212L67 216L70 220M63 228L66 224L70 220M90 187L90 187M90 187L90 193L89 198L86 203L87 208L86 214L84 219M70 220L77 219L84 219M179 210L174 208L169 205L164 204L158 203M193 173L188 172L183 169L178 168L173 166M173 166L169 170L166 175L165 181L161 186L157 191M157 191L158 197L158 203M144 160L142 164L139 168L135 172L133 176L130 180M144 160L150 160L155 161L160 161L165 160L170 161M170 161L173 166M157 191L152 190L146 187L141 183L136 183L130 180M144 160L141 155L137 151L133 147L128 143M110 154L113 159L115 164L119 168L121 173L124 177L127 181M110 154L116 150L121 145M128 143L121 145M130 180L127 181M197 252L192 250L186 249L181 249L176 246L171 245M184 217L181 221L178 225L175 230L174 235L170 239M171 245L170 239M158 203L154 207L150 212L146 216M170 239L167 234L162 231L158 228L155 223L150 219L146 216M145 310L144 304L142 299L140 294L139 288L138 282M145 310L140 314M140 314L134 316L128 316L121 317M138 282L133 282L127 282L122 282M122 282L119 286L118 291L117 297L115 301L113 306M121 317L117 311L113 306M171 313L168 311M168 311L163 311L157 311L151 310L145 310M146 341L145 335L144 330L143 325L140 320L140 314M115 336L117 331L118 326L120 322L121 317M86 334L86 328L86 323L87 318L87 312L86 307M86 307L92 307L97 306L102 305L108 306L113 306M110 370L111 376L110 382L109 388L108 394M82 390L86 395L90 400M108 394L102 395L96 398L90 400M63 421L60 417M63 421L69 422L74 420L79 422L84 423M90 400L89 405L87 411L85 417L84 423M282 234L278 230L275 226M282 234L280 241L281 248M278 251L281 248M278 251L273 252L268 253L263 253L258 255M258 255L252 250M252 250L252 244L251 238L253 232L251 226L252 220M275 226L269 225L265 222L260 218L255 217M252 220L255 217M306 219L301 221L296 224L291 228L287 231L282 234M290 197L288 202L286 207L283 212L279 216L277 221L275 226M310 252L304 250L298 250L292 250L286 249L281 248M288 283L286 278L286 272L284 267L281 262L281 256L278 251M255 280L256 275L256 270L257 265L257 260L258 255M232 252L239 252L245 251L252 250M221 224L226 224L231 224L236 223L242 221L247 221L252 220M256 203L255 210L255 217M312 337L317 338L322 337L327 338L332 337L337 338M318 310L323 311L328 311L333 313M333 313L334 318L335 323L336 328L336 333L337 338M391 304L386 306L381 309L376 311L371 313L366 316M390 338L384 336L379 334L373 332L367 330M366 316L367 323L367 330M336 365L338 359L340 354L341 348L341 343M372 368L369 363L370 357L366 353L364 348L363 342L361 337M341 343L346 341L351 339L356 339L361 337M341 343L337 338M361 337L367 330M367 280L362 281L357 281L352 281L347 282L342 282M367 280L366 286L365 291L364 296L363 301L363 307L363 312M342 282L342 287L343 292L343 298L342 303L341 308M363 312L357 311L352 311L347 308L341 308M368 280L367 280M338 279L342 282M366 316L363 312M333 313L341 308M32 530L32 524L33 518L34 512L34 506M55 531L57 526L55 520L56 514L57 509M34 506L40 505L46 504L52 503M57 509L52 503M82 530L82 524L81 519L84 514L83 508M57 509L62 508L67 509L72 508L77 509L83 508M111 506L105 507L100 505L95 506L90 504L85 504M116 528L113 531M83 508L85 504M2 401L2 406L0 412L1 417L1 423M1 423L-4 422L-10 424L-15 423L-20 421L-25 422L-30 422M388 646L391 650L393 655L394 660L396 665L398 670M388 646L394 638M394 638L400 639L406 640L412 641L418 642M418 669L411 669L405 670L398 670M418 669L418 663L419 657L419 651L419 644M419 644L418 642M368 652L373 651L378 649L383 646L388 646M364 676L369 678L374 676L379 677L384 678L389 679M389 679L393 674L398 670M390 620L392 626L392 632L394 638M426 619L425 625L422 631L420 636L418 642M446 647L441 648L435 646L430 647L424 645L419 644M448 668L448 668M448 668L442 668L437 669L431 669L426 672L420 672M420 672L418 669M420 672L420 677L420 682L421 688L420 693L421 699M389 679L391 685L392 692L395 697M421 699L416 700L411 698L405 697L400 697L395 697M362 702L367 703L373 704L378 705L383 705L389 706M395 697L391 701L389 706M527 350L522 350L516 350M527 350L527 343L528 336M516 350L515 344L513 338L511 332M528 336L523 330M523 330L517 330L511 332M530 353L527 350M502 358L507 355L512 353L516 350M547 330L541 333L535 334L528 336M506 330L511 332M528 313L527 319L525 324L523 330M766 357L764 361L761 366M766 357L772 356L778 354M778 354L781 359L783 364L786 368L789 372L792 377M761 366L761 366M761 366L766 369L770 373L775 377L779 381L783 385L787 388M792 377L789 382L787 388M757 348L760 353L766 357M737 367L743 371M743 371L749 369L755 367L761 366M792 335L788 340L786 345L781 349L778 354M810 366L806 370L801 372L796 374L792 377M566 580L560 579L554 577M566 580L574 578M574 578L574 572L571 567L569 562L569 557M553 576L554 577M553 576L554 570L555 564L557 558M557 558L563 558L568 556M568 556L569 557M565 596L566 591L565 585L566 580M550 593L552 588L552 582L554 577M584 581L579 580L574 578M588 556L581 556L575 556L569 557M543 575L548 576L553 576M544 549L549 552L552 556L557 558M570 536L569 541L568 546L568 551L568 556M690 261L689 264M690 261L696 256L702 253M689 264L692 268L694 273L698 276L700 281M700 281L705 280L711 279L716 279L721 279M702 253L707 256L712 258L717 259L722 262M721 279L722 273L723 268L722 262M681 273L684 268L689 264M687 259L690 261M703 228L704 234L702 240L701 247L702 253M700 292L700 287L700 281M724 290L723 284L721 279M745 254L739 256L733 258L727 259L722 262M3 115L7 112L11 109L15 106L19 103L23 100L27 96M33 138L36 133L38 129L41 124L45 121L47 116M47 116L43 112L38 109L35 104L31 100L27 96M9 79L14 81L20 83L26 85M27 96L27 91L26 85M36 61L34 67L31 72L30 78L27 84M26 85L27 84M191 117L185 118L180 121L175 124M191 117L192 122L194 127L194 132L197 137M197 137L191 138L186 140L181 142L176 144L171 145M175 124L173 129L171 133L168 138M168 138L171 145M201 105L198 110L195 114L191 117M169 113L173 118L175 124M204 140L197 137M170 161L169 156L171 150L171 145M144 126L145 120L149 115L151 109M144 126L149 128L154 130L158 133L164 135L168 138M144 126L140 127M128 143L132 140L134 135L138 132L140 127M581 729L573 730M556 696L550 701M550 701L554 704L557 709L559 714L563 718L567 721L569 726L573 730M560 754L560 748L562 742L562 736M573 730L568 733L562 736M477 761L481 754M511 758L511 758M511 758L506 757L501 756L496 755L491 756L486 754L481 754M678 477L678 471L677 465M658 480L662 475L663 469L666 463M677 465L672 463L666 463M661 424L663 426M663 426L664 432L667 437L668 443M646 442L652 444L658 447L664 447M668 443L664 447M644 461L649 460L654 458L659 457M664 447L661 452L659 457M659 457L666 463M682 406L688 410M702 391L702 396L701 402L701 408M688 410L695 409L701 408M663 426L668 426L674 426L680 425L685 426M685 426L688 423M688 410L687 416L688 423M141 614L141 608L141 603L141 597L140 591M172 589L170 587M170 587L165 587L160 589L155 589L150 589L145 591L140 591M110 591L116 592L122 592L127 590L133 590L139 591M140 591L139 591M175 503L180 503L185 502L191 501L196 502M193 475L197 479L200 483M196 502L197 495L200 489L200 483M224 476L223 478M200 483L206 482L211 479L217 479L223 478M222 766L223 771L221 777L222 782M193 789L197 792M222 782L217 783L212 786L207 789L202 789L197 792M198 818L203 811M197 792L200 798L201 805L203 811M4 250L9 252L15 253L21 253L26 255M26 282L27 280M27 280L26 274L27 268L25 262L26 255M31 222L32 227L31 233L33 238L34 243L34 248M34 248L30 252L26 255M55 306L56 306M27 280L33 279L39 279L45 277L50 278L56 276M56 276L55 282L57 288L56 294L56 300L56 306M86 307L85 305M56 306L62 305L68 307L73 305L79 305L85 305M111 193L112 198L111 204L111 209L112 214L113 220M111 193L117 189L123 187M123 187L125 192L128 196L131 200L134 204L137 209L138 214L141 218M113 220L119 224M119 224L125 223L131 223L137 221M137 221L141 218M90 187L95 189L101 190L106 192L111 193M88 222L84 219M88 222L93 221L98 221L103 220L108 221L113 220M127 181L123 187M146 216L141 218M111 254L112 248L113 244L114 238L115 233L117 228L119 224M111 254L111 254M111 254L105 254L99 253L93 252M93 252L92 247L92 242L89 237L91 232L88 227L88 222M111 254L116 254L121 252L126 251L132 252L137 251L142 251M142 251L140 246L139 241L140 236L139 231L139 226L137 221M166 250L160 253L153 253L148 256M166 250L168 255L169 260L171 265L172 270L172 275L175 279M148 256L147 261L146 267L144 272L144 278M144 278L150 280L155 282L162 283L168 285M175 279L168 285M171 245L166 250M142 251L148 256M189 278L182 279L175 279M111 254L112 259L114 264L116 269L116 274L118 279M118 279L122 282M138 282L144 278M168 311L167 306L169 300L169 295L168 290L168 285M122 424L129 423L136 423M122 424L117 421M117 421L117 415L113 409L114 403L112 397M138 421L141 416L141 410L143 405L144 399L145 394M138 421L136 423M112 397L117 396L123 396L128 395L134 393L139 393L144 393M144 393L145 394M142 451L142 445L139 440L138 434L138 428L136 423M114 453L112 450M112 450L113 444L117 440L117 434L120 429L122 424M88 442L94 444L100 446L106 447L112 450M88 442L86 436L86 430L85 423M85 423L90 424L96 424L101 423L107 422L112 422L117 421M108 394L112 397M84 423L85 423M167 395L161 394L156 395L151 395L145 394M166 428L161 426L155 426L149 424L144 423L138 421M140 376L141 382L143 387L144 393M63 478L69 479L75 481L81 484M63 478L63 472L63 467L62 461L62 455M84 447L85 453L88 459L88 465L88 471L90 476M84 447L79 450L73 452L68 454L62 455M90 476L85 479L81 484M52 503L54 498L54 492L55 487L57 482M85 504L84 499L84 494L83 489L81 484M57 482L63 478M112 474L106 473L101 474L96 475L90 476M88 442L84 447M53 448L54 442L58 438L59 431L62 426L63 421M53 448L58 451L62 455M34 506L29 503L26 498M57 482L52 480L46 480L41 477L35 477L30 475M26 498L27 492L28 487L28 481L30 475M-1 445L-1 438L1 432L2 425M-1 446L4 448L9 450L14 452L20 452L25 454L30 456M2 425L8 425L13 426L19 426L24 428L30 427M30 427L33 432L33 438L35 443L36 448M36 448L33 453L30 456M1 423L2 425M2 475L7 474L13 474L18 475L23 474L28 472M2 475L2 469L2 463L-0 458L-1 452L-1 446M28 472L29 467L30 462L30 456M36 419L32 423L30 427M53 448L48 448L42 448L36 448M30 475L28 472M448 668L448 674L447 679L447 685L447 690L448 696L448 702M421 699L425 703M425 703L431 704L437 702L443 703L448 702M471 699L466 700L461 700L456 702L451 703M471 699L474 693L476 688L478 682L480 677M448 702L451 703M471 699L478 706M478 706L477 711L476 717L478 723L476 729L476 735M476 735L471 734L465 734L459 734L454 732M451 703L450 709L451 715L452 721L453 727L454 732M452 757L450 751L451 745L451 740L452 734M476 735L479 737M481 754L479 748L479 743L479 737M454 732L452 734M421 753L416 754L410 755L406 757L400 757L395 757M421 753L423 748L424 742L425 736M425 736L421 730L419 724M419 724L413 725L408 725L402 726L397 727L391 727M395 757L395 751L394 746L392 740L392 734L390 729M390 729L391 727M421 754L421 753M395 758L395 757M452 734L446 734L441 735L436 735L431 735L425 736M425 703L424 708L423 714L420 719L419 724M389 706L388 711L390 716L392 721L391 727M366 731L372 731L378 729L384 729L390 729M737 412L740 407L745 403M737 412L731 410L726 408L721 405M721 405L722 398L723 392M723 392L732 392M732 392L736 396L740 400L745 403M723 392L719 386M743 371L744 380M732 392L736 388L739 383L744 380M86 144L85 139L84 133L84 127L83 121L83 116M62 150L61 145L60 140L62 134L60 129L60 124L60 119L59 114M59 114L65 114L71 115L77 114L83 116M47 116L53 115L58 114M59 114L58 114M537 732L539 729M537 732L531 731L525 733L519 733L513 733L508 733M539 729L539 723L538 717L538 711L538 705M514 701L519 702L525 702L531 701M514 701L509 704L506 709M531 701L538 705M506 709L504 715L503 722L503 728M508 733L503 728M534 763L535 758L536 753L535 748L535 743L537 738L537 732M562 736L556 734L550 734L545 730L539 729M511 758L509 752L509 746L509 739L508 733M550 701L544 704L538 705M503 681L505 687L509 691L511 697L514 701M533 670L533 675L532 680L531 685L531 691L532 696L531 701M478 706L484 707L489 706L495 707L500 709L506 709M479 737L484 735L489 734L493 731L498 730L503 728M682 459L680 453L679 447M682 459L688 460L693 463L700 463M704 454L702 461M704 454L700 450L697 445L693 440M679 447L683 442L688 439M700 463L702 461M688 439L693 440M677 465L682 459M668 443L674 444L679 447M696 479L696 473L699 468L700 463M720 445L718 444M718 444L714 448L709 451L704 454M718 470L712 468L707 464L702 461M685 426L686 433L688 439M707 431L701 426M707 431L714 431M701 426L700 420L701 414L702 408M714 431L717 425M717 425L715 418L715 412M715 412L708 410L702 408M688 423L694 424L701 426M693 440L697 436L702 433L707 431M718 444L716 437L714 431M701 408L702 408M737 423L737 424M737 423L730 424L724 424L717 425M737 412L738 418L737 423M721 405L715 412M170 561L167 557L166 551L166 546L164 541M170 561L169 562M169 562L164 563L158 564L153 564L148 563L142 565L137 564M164 541L158 539L152 540L146 537L141 536M141 536L139 541L139 547L136 551L136 557L134 562M134 562L137 564M195 531L196 536L194 541L196 546L194 551L194 556M195 531L190 530L184 530L178 531L172 529M194 556L188 559L182 558L175 559L170 561M172 529L169 535L164 541M198 559L194 556M170 587L171 581L170 574L168 568L169 562M139 591L140 585L137 580L137 575L137 570L137 564M167 510L169 516L170 523L172 529M139 533L141 536M114 561L119 560L124 563L129 561L134 562M200 528L205 530L211 531L216 534L221 535M200 528L200 521L201 515L201 508M201 508L207 508L212 507L218 507L223 505L229 506M221 535L224 530L225 524L227 518L230 513L230 507M230 507L229 506M223 537L221 535M195 531L200 528M196 502L201 508M223 478L224 483L225 489L227 494L228 500L229 506M251 509L246 508L241 508L236 506L230 507M228 790L225 796L224 802L222 809M228 790L233 791L238 790L243 791L248 792L254 791M254 791L254 797L255 804L256 810M228 815L222 809M252 817L256 810M222 782L228 790M203 811L209 810L216 809L222 809M257 786L254 791M283 813L277 813L272 812L267 811L261 810L256 810M86 284L85 285M86 284L87 278L87 272L87 266L89 260L90 254M85 285L79 283L74 281L68 279L63 276L57 275M90 254L84 255L78 254L73 253L67 252L61 252M57 275L57 270L59 264L59 259L60 253M61 252L60 253M118 279L113 279L107 279L102 281L97 283L91 283L86 284M85 305L84 300L84 295L84 290L85 285M93 252L90 254M56 276L57 275M63 228L62 234L62 240L62 246L61 252M34 248L39 249L44 252L49 252L54 253L60 253M-2 480L-0 484L-0 490L2 495L4 499L5 504M-23 510L-18 509L-12 509L-7 508L-2 508L3 508M3 508L5 504M2 475L-2 480M26 498L21 499L16 502L11 503L5 504M9 527L7 523L7 517L4 513L3 508M761 386L753 389M761 386L766 387L771 389L777 390L781 393L787 394M753 389L753 396L750 402M787 396L782 399L778 401L772 401L768 405L763 408L758 409M787 396L787 394M758 409L754 406L750 402M761 366L762 373L762 379L761 386M744 380L749 384L753 389M787 388L787 394M745 403L750 402M797 408L794 403L790 400L787 396M759 420L758 415L758 409M106 116L111 113L117 112L122 109M106 116L100 116L93 114L87 113M87 113L89 107L90 101L90 96L91 90M91 90L96 86L102 85L107 82L111 77L117 75M122 109L123 104L126 100L127 95L128 90L130 85M117 75L120 79L126 81L130 85M121 145L118 140L116 135L115 130L111 126L107 122L106 116M140 127L136 125L133 121L130 116L127 112L122 109M83 116L87 113M134 85L130 85M115 63L117 69L117 75M82 81L77 83L73 85L69 89L63 88L59 91M82 81L79 77L76 72L75 66L71 62M71 62L66 58M56 85L59 91M56 85L57 79L59 74L60 68L63 64L64 58M64 58L66 58M58 114L58 108L59 103L59 97L59 91M91 90L87 85L82 81M108 55L103 55L98 56L92 57L87 58L82 60L77 62L71 62M82 36L78 39L76 45L73 50L69 54L66 58M27 84L33 85L38 84L44 83L50 83L56 85M62 57L64 58" stroke="#606364" stroke-width="1" shape-rendering="crispEdges"/>
<path d="M6 705.4 L8.5 706 L12.2 703.5 L18.3 699.2 L24.5 698.6 L29.4 699.9 L30 702.9 L27.6 704.8 L28.2 707.9 L33 706.6 L45.4 705.4 L47.9 704.8 L48.5 706.6 L46 707.9 L45.4 715.2 L50.3 715.9 L52.2 718.9 L52.8 724.5 L51.6 726.3 L60.2 723.9 L63.9 726.9 L70 726.3 L71.3 728.2 L73.1 732.5 L75.6 735 L76.8 739.3 L81.1 741.7 L87.3 741.1 L92.2 744.2 L97.1 744.2 L102 748.5 L106.4 751.6 L104.5 756.5 L113 757.7 L115 748 L120 741 L135 738 L148 742 L150 735 L150 720 L155 712 L165 714 L175 722 L183 730 L184 739 L194 746 L209 757 L225 770 L243 758.5 L240.7 757.3 L230.8 751 L225.9 742.5 L216 738.8 L206.2 737.6 L196.4 733.9 L190 728 L184 715 L183 703 L187 697 L191 695 L186.7 692.4 L184.9 688.4 L178.8 688 L177 682.7 L181.4 680 L185.8 680 L194.6 668.7 L197.2 666.9 L203.4 666.9 L206.9 665.1 L208.7 660.8 L215.7 654.6 L213 652.8 L213.9 650.7 L218.3 651 L219.2 655.9 L222.7 655.5 L231.5 652 L239.4 648 L240.3 646.3 L252.6 646.3 L257.9 650.7 L262.3 653.3 L270 651.3 L282.4 651.6 L286 648 L289.7 647.9 L293 651 L299.6 650.3 L303 652 L304.5 655.3 L303.5 645 L305.8 635.6 L309.4 625.7 L313 622 L316 623 L320.5 627 L321.8 640.5 L325 644 L329 650.3 L332 653 L335.3 659.5 L340 658.3 L353.8 654.7 L366 651.7 L378.4 649.7 L392 648.4 L406 647.9 L418.3 646.6 L430.6 648.4 L443 651.6 L455.3 656.5 L467.6 662.6 L474 664 L473.7 656.5 L482.4 655.3 L489.7 659 L497 652.8 L498.4 654 L489.7 661.4 L484.8 665 L482.4 671.3 L489.7 672.5 L499.6 675 L507 680 L504.5 681.5 L497 679 L489.7 678.7 L499.6 686 L507 693.4 L513 696 L515 706 L512 711 L509 704 L508.2 704.5 L512 712 L521.8 712 L534 709.4 L544 703.3 L549 700.8 L547.6 704.5 L556 704.5 L568.5 698.4 L578.4 689.7 L585.8 692.2 L587 684.8 L578.4 684.8 L588.3 677.4 L598 673.7 L606 675 L613.4 676.2 L620.8 682.4 L630.6 687.3 L640.5 697 L645.4 707 L655.3 714.4 L657.7 726.7 L667.6 734 L675 744 L680 753.8 L684.8 761 L694.7 758.7 L702 763.6 L704.5 776 L708 782 L706 788 L705 806 L6 806Z" fill="#004364" stroke="#000" stroke-width="1.2"/>
<path d="M806 558 L801 563 L797 570 L799 577 L794 583 L798 590 L793 597 L797 604 L792 611 L797 618 L800 624 L794 630 L798 638 L793 644 L798 650 L796 658 L801 664 L806 667 L810 667 L810 558Z" fill="#004364" stroke="#000" stroke-width="1.2"/>
<path d="M786.5 650.3 L784 660 L783.3 670 L786 678 L789.5 684.8 L793 693 L795.7 702 L792.5 708 L789.5 712 L788.3 721.8 L785 726 L784.5 732" stroke="#000" stroke-width="4.2"/>
<path d="M786.5 650.3 L784 660 L783.3 670 L786 678 L789.5 684.8 L793 693 L795.7 702 L792.5 708 L789.5 712 L788.3 721.8 L785 726 L784.5 732" stroke="#004364" stroke-width="2.4"/>
<path d="M343 655.5 L346 651.5 L350 651 L352 647 L356 647 L358.5 641 L361.5 643 L360.5 648 L357 651 L352 653.5 L347 656.2Z" fill="#004364" stroke="#000" stroke-width="1.1"/>
<path d="M365 651 L372 648.5 L378 645 L380 642 L377 634 L380 632.5 L384 638 L387.5 630 L390 631 L390 639 L398 642 L396 645 L388 647 L376 649.5 L368 651.8Z" fill="#004364" stroke="#000" stroke-width="1.1"/>
<path d="M418.3 645 L420 643 L429.4 638 L432 641 L438 643 L450.3 640 L455.3 645.5 L446 647 L436 646.3 L428 645.2Z" fill="#004364" stroke="#000" stroke-width="1.1"/>
<path d="M15.2 718.9 L24.5 715.9 L34.3 720.2 L39.3 722 L35.6 725.7 L30.6 730 L22 725.7 L16.5 722Z" fill="#5d4f4b" stroke="#000" stroke-width="1"/>
<path d="M67.6 744.2 L73.1 739.3 L77.4 744.2 L81.1 749.1 L76.2 751 L70 747.9Z" fill="#5d4f4b" stroke="#000" stroke-width="1"/>
<path d="M198.5 683 L203.5 680.5 L205 676.5 L208 678 L206 686 L203 694 L199 698 L195.5 694Z" fill="#5d4f4b"/>
<path d="M306 663 L314 664.5 L322 663" stroke="#000" stroke-width="1.3"/>
<path d="M326 663 L335 661.5" stroke="#000" stroke-width="1.3"/>
<path d="M226 662 L231 663 L236 664" stroke="#000" stroke-width="1.3"/>
<path d="M243 664.5 L250 665.5" stroke="#000" stroke-width="1.3"/>
<path d="M258 661.5 L264 662.5 L270 663" stroke="#000" stroke-width="1.3"/>
<path d="M521.8 713.5 L528 717 L534 719.3 L540 717.5 L546.4 714.4 L553 710.5 L558.7 707 L565 702 L569.8 698.4" stroke="#000" stroke-width="1.3"/>
<path d="M260 660.5 L272 663.5 L285 665.2" stroke="#000" stroke-width="1.3"/>
<path d="M456 657.5 L466 662.5 L476 669 L486 677" stroke="#000" stroke-width="1.3"/>
<path d="M249.3 678.5 L252.5 683 L254.2 688.3 L254 695 L252.4 701.9 L249.5 707 L245.6 711.7 L241 718 L235.8 724 L231 727.5 L225.9 730.2" stroke="#000" stroke-width="1.4" stroke-dasharray="5 2 2 3 7 2"/>
<path d="M212.0 677.6L211.8 679.2L211.8 677.3M202.3 725.1L203.4 725.6M208.8 698.0L207.9 698.1M197.3 724.4L199.0 725.5M207.6 677.0L208.8 677.2M197.5 709.9L197.7 711.3M194.5 709.2L194.3 711.9M202.0 720.7L203.6 721.6L204.3 722.6M221.6 692.8L220.4 694.5M204.4 714.8L206.7 715.3M219.3 690.9L220.1 693.1L220.0 691.7M186.5 721.4L187.8 721.9L189.3 720.3M196.0 699.2L197.2 701.6M194.0 703.6L193.7 704.9L193.3 704.4M206.2 711.9L205.7 712.7M200.9 698.1L203.0 698.8L201.2 697.7M210.4 682.4L211.5 683.5L210.0 684.9M204.0 703.5L205.0 703.8L204.1 705.1M206.7 682.2L206.6 683.1M191.2 721.6L190.9 724.1L189.8 725.4M193.7 705.6L194.1 706.4L193.2 705.4M220.1 703.2L219.0 705.5L219.6 707.1M216.3 703.1L218.4 704.5L219.6 706.4M201.3 732.6L200.5 733.5L199.1 735.2M190.3 725.1L188.0 725.2L188.2 723.7M202.7 727.9L201.6 728.6L200.7 727.5M195.2 699.4L197.7 700.5L197.6 700.9M202.1 730.8L202.1 732.8M202.9 684.5L205.5 684.6L205.4 685.5M198.0 705.7L197.6 708.1L197.8 707.1M217.2 705.0L216.7 707.4M210.3 704.8L210.2 707.2L210.4 707.1M224.5 689.4L224.0 692.2M187.1 715.2L185.0 716.9L185.8 717.6M193.4 733.0L194.0 734.8M190.9 700.2L190.9 701.7L190.1 702.6M207.8 700.7L209.4 700.8M202.2 730.4L201.0 731.2L202.7 731.4M213.6 699.8L216.4 700.4M187.6 726.9L190.2 727.5L189.6 727.7M206.7 688.0L207.7 688.4L206.6 687.7M216.7 691.3L216.7 692.5L214.7 691.5M192.1 702.9L191.1 703.1M205.3 725.6L205.9 727.4M198.7 725.4L197.4 727.2L196.8 725.4M187.0 719.7L187.8 720.5L189.2 722.0M196.6 701.9L198.2 702.8L200.0 704.7M194.5 733.8L195.4 735.1L194.9 735.0M192.6 704.8L194.0 704.8L193.6 703.0M209.2 706.3L207.6 707.9M200.7 693.5L199.6 693.6M190.0 706.0L190.0 708.6M188.5 725.7L188.1 727.8M205.6 706.7L205.2 707.5M215.4 685.9L213.3 688.1L212.9 688.0M211.6 677.9L212.9 678.5M208.4 673.8L209.8 674.0M213.1 691.3L213.0 693.1L211.4 694.7M203.3 689.9L205.6 691.7L205.9 690.3M225.0 681.4L223.3 682.4M193.9 729.6L194.0 730.4L194.0 730.2M197.6 725.9L200.0 725.9M222.8 691.3L223.4 692.8M199.5 700.0L200.1 700.7L201.4 699.8M206.0 685.0L207.1 687.6M214.9 676.1L213.7 677.5M223.9 681.0L224.0 682.6L224.9 684.5M212.2 692.0L211.9 693.6L210.6 692.4M205.4 686.9L202.5 687.7L201.1 686.5M216.2 699.0L216.8 700.9L216.1 699.1M205.6 712.7L204.5 713.2L203.5 712.8M185.4 717.7L183.6 718.3M200.8 731.4L198.5 732.8M206.5 716.0L204.1 716.4M203.7 707.7L206.2 708.1L207.8 708.6M206.6 709.7L207.0 710.9M197.0 702.0L194.8 702.3M205.4 715.5L205.8 716.8M198.5 699.5L197.9 700.5M205.7 685.9L204.2 686.1M193.5 720.9L195.3 723.2L194.0 722.1M224.1 693.7L226.4 695.3M212.6 696.9L213.2 698.3L211.2 697.4M225.5 686.1L226.6 688.4M200.0 730.9L201.3 731.8M201.7 724.1L201.0 724.7L199.3 726.4M195.3 718.1L196.0 719.3L197.1 721.0M194.1 702.9L191.2 703.3L190.2 703.0M223.9 684.5L221.9 685.9M210.1 693.7L211.0 695.0M192.5 720.4L193.2 721.1L193.4 720.4M188.1 704.4L187.1 705.8L186.7 706.3M212.6 680.6L211.3 681.3M215.7 685.5L216.7 686.5L218.2 686.8M205.8 687.6L204.0 688.8M204.4 724.6L201.9 726.0L201.1 724.4M224.0 696.5L222.4 697.2L223.5 699.0M195.0 710.8L194.4 711.9L193.7 712.6M201.0 707.7L200.6 708.6L201.4 708.2M197.2 733.1L198.4 734.8L198.0 736.2M215.3 685.8L218.1 685.9L219.4 685.5M203.8 683.2L205.8 683.3M187.8 712.2L188.6 714.0L187.7 714.0M188.7 703.9L186.3 705.6L184.8 707.4M204.8 676.4L203.1 676.7M219.5 683.1L218.4 683.9L219.8 685.2M206.3 697.2L207.5 697.7M216.6 675.4L215.6 675.9M211.0 692.3L211.5 694.3L212.1 694.1M185.0 712.0L185.0 713.3M203.7 684.3L203.8 685.3L203.5 683.7M205.9 675.6L205.5 676.5M206.0 676.4L206.0 678.0M223.4 683.4L221.1 685.2L220.6 686.2M222.6 690.3L221.6 690.9M205.8 693.1L207.0 693.2L208.7 694.0M191.3 722.4L193.1 723.1M211.1 697.8L210.0 698.7M199.5 721.2L199.7 722.3M219.3 689.0L218.0 691.7M210.5 700.2L210.4 703.0L209.3 703.6M193.6 709.8L193.3 711.0M189.8 732.0L190.6 732.8L191.2 734.3M201.3 689.6L203.5 689.7M211.8 701.0L209.4 701.4L211.0 699.6M201.5 688.0L203.9 688.4L204.1 690.2M192.6 711.3L192.5 713.5M216.0 702.3L214.8 703.6L213.2 702.5M198.4 720.2L196.9 722.4M207.8 700.5L206.3 701.7L206.8 703.5M216.1 693.6L214.7 694.2L216.3 694.7M204.2 725.9L202.6 728.1L203.5 728.4M193.1 712.2L195.8 712.9L193.9 711.3M186.8 710.2L187.9 712.6M211.2 691.1L212.1 691.4M197.7 699.7L199.1 699.8L199.9 699.3M202.8 721.7L203.9 723.8M221.1 678.7L220.1 679.4L218.9 680.4M205.1 723.2L206.7 724.2L208.0 723.3M214.1 704.4L216.1 705.1L217.3 705.9M211.0 695.4L211.5 697.0M200.3 728.7L201.7 729.9M199.0 693.6L201.3 694.8M191.3 700.6L189.7 702.0L189.6 703.5M206.5 683.1L207.1 684.2M215.5 700.4L217.3 701.7L216.2 701.2M201.2 722.8L200.1 724.4M190.1 711.0L190.8 713.4M202.1 687.4L200.4 689.5M211.6 701.6L212.8 703.4L212.5 704.5M211.1 688.8L211.5 690.5M191.9 714.2L190.6 715.3L192.5 713.4M190.9 722.3L189.0 722.6L189.3 722.8M206.0 713.3L204.4 714.3L206.1 713.1M200.9 721.1L203.6 722.2L201.9 721.3M202.1 717.0L202.7 718.2L203.7 720.0M193.4 723.5L193.8 724.7L194.9 725.9M204.2 708.4L206.4 710.3L206.9 711.6M204.1 691.5L204.0 692.6M220.6 689.8L221.1 691.1L219.8 689.1M197.0 703.2L197.5 705.4M190.0 725.4L189.7 726.1L191.5 726.8M194.0 721.9L194.6 722.9M191.2 729.1L190.4 731.5M192.5 716.6L192.3 719.1L193.8 719.3M205.2 676.7L205.3 677.8L205.3 678.0M204.1 708.4L202.8 710.7L202.5 712.6M185.2 711.4L183.7 713.8L185.6 713.8M198.6 727.3L199.3 729.0M193.1 700.4L193.5 702.4M219.6 698.4L219.6 699.8M196.9 709.9L195.8 712.2L196.7 713.8M213.3 686.4L212.4 688.0M212.2 696.2L210.0 697.6M197.0 699.6L197.9 701.0M186.3 708.8L187.4 708.9M211.7 686.4L212.5 686.8L213.2 685.2M187.8 727.8L188.6 728.1M215.5 684.8L218.0 685.2M215.4 678.3L214.5 680.5L216.2 679.5M184.6 714.0L183.8 714.5L184.7 713.2M204.9 676.8L205.7 678.7L206.5 677.2M199.6 713.6L198.9 715.2L200.1 717.0M208.4 691.4L211.3 692.0M198.3 711.2L195.7 711.4M202.4 729.0L203.3 731.1M218.7 690.8L220.1 690.9L220.4 692.1M208.6 690.3L206.3 691.4M192.6 720.3L191.3 720.5M204.0 686.0L205.7 687.8M187.8 723.8L186.8 724.7M204.5 710.1L205.5 710.8L206.3 710.3M201.3 705.6L202.1 706.0M188.6 712.9L187.7 713.6M206.3 674.3L209.3 674.6M208.4 689.5L207.1 690.6M223.1 677.0L222.6 678.6L224.5 677.7M212.8 697.8L213.0 698.9M220.0 676.0L218.2 677.4M213.1 691.8L212.4 694.2L211.7 693.2M204.7 683.6L205.5 684.4M214.8 685.3L217.7 685.6L219.4 687.1M190.0 701.2L192.7 702.0M203.5 694.4L201.9 695.4M214.7 707.9L217.1 709.1L216.8 707.7M220.1 694.1L221.7 695.0L223.3 693.5M212.7 686.3L212.8 687.7L211.6 687.2M222.5 676.6L221.6 677.7M218.7 694.5L219.4 694.8M192.0 700.4L190.8 700.8M191.7 721.5L191.0 722.5L189.3 722.9M215.5 698.7L214.9 699.4M221.5 689.8L223.7 691.2L222.3 690.7M203.2 705.5L205.4 706.4M197.8 717.8L198.7 720.1L200.2 721.9M206.1 706.4L206.0 707.3M194.8 724.5L195.8 724.6M184.8 710.8L184.3 712.7M205.2 704.5L205.9 705.4L204.5 705.7M190.3 709.1L189.5 709.9M200.7 699.5L199.0 700.4L200.8 701.5M194.7 699.6L194.1 701.1M202.6 704.8L203.7 704.9M211.6 689.7L210.8 690.9M210.7 688.8L210.6 690.5M197.1 713.8L199.1 714.6M195.5 702.4L195.4 703.5L193.9 702.7M187.8 707.4L185.9 708.5M192.7 717.8L192.9 719.7M193.5 705.3L194.3 707.2L193.7 708.7M207.9 704.0L209.8 706.3L210.9 704.9M221.5 700.7L223.1 701.0L224.0 699.5M199.2 715.5L198.2 718.0M216.7 702.9L214.8 704.4M208.6 699.3L206.5 701.0M203.4 701.8L202.5 703.0L202.7 702.5M205.5 701.0L206.7 701.8L207.0 702.1M223.6 693.4L221.2 694.7M202.3 730.4L203.2 730.4M206.3 705.6L205.3 707.0L205.7 706.4M213.1 706.1L214.6 706.6L214.9 706.9M202.9 712.4L201.4 712.4M206.0 680.0L203.8 680.7M222.2 699.5L223.5 700.2M199.2 735.6L198.8 736.4L200.0 735.6M212.7 685.4L212.7 687.4L213.3 687.5M208.7 698.9L209.8 699.3M217.1 693.3L216.1 694.6L215.2 693.0M209.0 695.0L209.3 696.6L210.9 696.9M202.9 712.1L203.5 712.7M197.5 729.6L196.3 730.4M214.9 686.9L216.4 689.2L217.6 688.2M225.8 691.3L225.6 692.3M189.3 725.0L189.9 726.2L189.0 725.2M212.6 694.5L214.6 695.6L213.7 697.0M203.1 725.7L202.1 726.3L203.0 725.9M192.9 732.9L192.9 734.2L191.5 735.0M199.8 688.5L199.4 689.7M206.1 707.2L207.7 709.1L208.3 709.3M191.6 726.6L192.8 728.5L193.1 728.0M189.4 718.2L190.5 719.5M185.3 715.8L184.5 717.2L185.1 718.0M220.4 695.2L219.9 696.3L221.6 697.2M197.0 697.0L198.5 697.2M214.8 689.0L215.3 691.3L213.3 692.6M188.8 722.9L191.0 724.6M213.9 697.8L212.0 699.7L210.4 701.5M211.0 701.5L213.3 701.9L213.4 703.6M216.8 675.8L215.2 677.8L215.4 679.7M207.4 688.7L208.9 689.0L207.8 688.3M206.2 701.0L204.6 701.4L206.2 699.9M198.3 724.4L198.0 726.8L198.6 727.2M192.5 717.2L192.6 718.2L192.5 717.7M187.6 718.2L185.6 718.3L185.5 718.0M207.4 673.5L205.2 674.1M212.1 688.8L212.9 689.6L214.0 691.0M192.0 713.2L189.5 714.5L190.6 715.8M219.5 693.2L220.3 695.0L221.6 694.0M205.3 704.5L206.5 705.2M213.6 683.3L214.1 686.2L212.3 686.0M217.8 699.8L219.3 701.6M198.6 700.6L197.3 702.9M196.7 700.9L196.4 702.5L194.7 701.7M218.9 676.8L217.8 678.6L218.0 680.4M211.8 691.9L213.1 694.3L211.9 695.0M187.7 714.6L188.5 716.5L188.6 716.8M188.8 727.3L189.5 728.0M205.0 707.9L206.6 709.2L206.7 709.6M202.9 727.4L202.5 729.7M188.4 725.3L188.8 726.4M217.3 681.6L216.6 682.2L216.1 680.3M214.4 699.8L212.4 700.6M191.2 720.0L192.4 722.1M215.0 675.7L214.7 676.7M188.9 731.3L188.1 732.5L187.9 733.8M188.7 723.4L190.4 724.6L191.2 724.1M218.4 675.2L220.6 676.6M204.5 683.0L203.0 683.8M193.3 729.3L193.1 730.2L192.5 730.1M200.7 695.3L202.8 695.3L200.8 695.2M212.9 690.2L214.1 691.6L214.4 691.7M199.6 690.7L197.4 692.4M197.1 721.1L195.8 722.5M207.7 698.6L209.2 698.9L211.1 698.8M203.5 701.1L203.2 702.5L201.4 701.7M224.3 694.4L222.3 695.0L221.0 695.3M199.3 721.8L200.0 724.4L199.9 726.0M214.3 686.8L214.7 687.9M211.9 685.4L209.9 687.6M192.1 706.8L190.1 707.7M198.1 720.2L197.3 721.7M186.0 712.5L186.9 714.1M217.0 678.7L215.5 679.6M209.9 693.8L208.9 694.8M217.4 692.5L215.1 694.4L214.3 694.5M204.5 714.3L203.2 715.3M216.5 678.7L217.6 678.8L217.6 679.0M224.4 696.0L225.5 696.6M217.5 688.3L215.6 688.4M218.4 702.0L219.9 704.4L220.8 702.6M201.3 727.4L203.3 727.8L205.0 729.6M195.3 700.3L196.2 701.2M193.3 708.9L195.7 710.2M204.9 729.1L206.9 730.3M193.0 728.7L194.1 730.9M190.5 719.4L191.6 719.7M198.6 730.9L196.9 733.0M194.1 722.9L193.6 723.6M197.6 728.4L199.3 729.0L199.1 727.8M190.4 719.5L190.4 720.6L190.3 722.2M193.3 734.0L191.0 734.8L189.7 733.9M201.5 708.1L201.9 708.8M207.4 707.6L205.7 710.0M201.2 693.1L201.9 695.9L201.4 695.5M195.0 711.5L195.5 712.7L193.9 714.1M223.1 676.1L222.2 677.4M197.6 734.2L200.0 734.2M194.1 712.7L193.0 713.8M206.6 711.6L205.8 712.9M193.6 711.6L195.5 713.7L196.4 713.7M206.5 706.2L205.4 707.0L206.7 706.8M221.3 675.7L222.3 678.2M213.9 701.3L214.1 703.9M213.2 696.1L213.2 697.4L212.5 697.0M192.6 708.9L193.8 709.2M219.9 678.8L218.8 681.2L218.4 682.4M203.0 696.1L202.1 697.3L202.7 698.5M200.6 709.5L199.4 709.7M200.0 714.9L200.5 715.8M206.6 704.3L204.3 705.0L204.6 704.9M220.1 699.1L220.3 701.9L220.3 701.9M213.2 707.9L211.4 709.5L210.2 707.9M186.4 715.9L185.2 717.4L186.0 717.0M221.5 682.2L222.5 683.9L224.4 682.9M206.0 699.5L207.4 699.7M220.8 689.2L221.6 689.7M204.0 703.8L203.5 705.4M206.9 698.8L206.6 700.2L207.8 699.4M203.1 728.3L204.9 728.6M221.1 677.5L220.7 678.7M218.4 704.4L217.2 706.3L216.1 707.7M223.5 686.0L224.4 686.3M201.8 714.5L203.8 716.5M186.4 716.8L189.1 717.2L188.0 717.5M208.1 682.7L206.6 683.1M200.3 713.4L201.9 714.7L201.7 715.6M213.2 680.2L212.3 680.8M216.3 704.3L215.3 704.5L216.7 704.9M195.7 729.3L194.5 729.9M198.8 732.5L198.4 733.3L198.2 732.3M191.7 722.6L192.3 723.4M209.6 702.1L211.5 702.3L212.1 700.8M199.2 696.6L198.6 697.6L200.4 696.9M221.8 680.4L221.8 682.4L221.7 681.0M205.8 696.1L207.2 697.1L205.7 696.1M205.0 722.8L204.5 725.1L205.5 723.7M206.3 691.4L205.4 691.7M214.6 676.9L216.1 678.4M219.0 694.6L217.5 695.6M194.5 719.2L193.9 720.2L192.5 719.0M198.2 734.5L195.7 734.5L195.7 735.6M192.6 712.4L190.3 713.6L191.2 713.0M216.1 681.5L213.6 683.0M209.4 700.4L207.2 701.7M224.7 680.3L222.2 680.5L223.5 679.5M203.7 687.9L203.8 690.7M200.9 722.4L199.0 723.8M198.6 710.5L196.4 711.7L196.3 709.8M218.9 699.4L218.3 701.1L217.2 700.5M210.6 691.4L212.0 691.8M189.2 716.0L191.8 716.4L190.9 718.2M193.6 729.1L192.7 731.7L192.7 733.5M219.7 683.2L219.6 684.0L221.4 683.8M188.3 707.8L186.6 708.6L188.3 710.2M187.3 712.3L187.8 715.2L188.4 715.7M206.5 715.6L204.6 716.2L206.5 714.4M213.4 708.1L213.8 710.5M216.2 675.2L216.8 676.2M190.2 710.0L190.0 710.9L191.0 711.5M216.8 691.3L216.5 693.1M177.0 738.0L178.0 740.7M158.0 720.5L157.4 723.0M153.0 732.5L152.0 733.0M159.2 716.8L160.2 718.1M154.7 725.5L153.5 725.7L153.3 724.2M162.2 728.1L160.8 728.3L162.4 728.1M170.9 741.5L171.6 742.4M168.1 737.8L167.1 738.8L168.8 738.9M170.7 723.8L170.0 724.4M160.7 747.0L161.6 747.9L161.8 749.0M162.9 742.5L164.2 743.0M170.8 738.5L169.6 739.6M160.3 728.3L159.0 729.2L160.5 729.4M172.1 745.7L173.5 746.3L173.2 746.3M172.0 734.6L172.7 736.6L174.0 737.8M153.4 737.8L152.1 739.2M174.7 742.9L173.5 745.4L174.3 746.2M157.9 717.3L157.1 719.8L155.9 718.7M172.3 748.1L171.0 749.1M153.0 724.4L154.7 724.7M149.4 743.1L150.6 743.6M159.9 734.3L161.9 735.9L163.2 737.2M149.1 741.5L151.0 741.6L149.3 742.1M169.1 728.6L169.0 730.7L170.4 732.7M165.2 719.5L165.5 721.8M160.3 721.5L160.7 722.8L161.7 722.9M155.1 738.9L156.2 739.7M183.0 740.4L180.2 740.9M150.3 722.0L153.0 722.1M157.5 727.1L159.4 728.2M160.8 745.6L159.3 746.6L157.7 745.2M165.0 748.7L162.5 749.4L163.8 747.9M168.3 732.3L169.4 733.1L171.0 733.9M174.4 728.1L172.2 729.5L170.2 728.4M177.9 741.7L178.0 742.6M150.6 726.0L149.5 728.5L150.1 727.4M151.7 735.1L152.9 735.6L153.2 736.1M164.9 728.6L163.7 730.6L164.3 731.4M153.1 745.9L152.8 746.8L154.8 745.7M176.4 743.0L175.4 745.2L173.8 747.1M156.7 746.6L158.4 748.1M183.0 739.1L185.2 740.6L185.2 739.0M168.0 742.9L168.0 745.1M167.6 724.9L167.9 725.7M177.9 742.6L178.0 743.7M163.4 718.8L161.4 718.9L159.8 719.8M161.2 725.3L160.4 726.1M172.9 735.4L172.8 737.2L173.3 737.8M174.4 742.1L171.8 742.8M172.5 743.9L173.1 746.6L174.9 746.3M157.1 725.2L157.8 726.6L157.6 728.5M181.6 740.9L179.0 742.4M157.0 729.0L158.3 729.1M159.8 741.2L157.7 743.0M151.8 743.1L153.0 744.9L153.1 746.7M167.1 737.1L166.8 739.9L168.4 740.7M151.2 722.2L153.0 724.4L152.0 725.3M154.3 729.9L153.1 731.8M156.9 723.7L159.3 723.9L158.3 725.8M169.3 737.3L168.6 739.5L166.8 737.8M161.0 719.8L162.8 720.5M157.8 741.2L158.7 741.7L158.3 742.5M178.8 742.3L178.1 743.5L176.8 745.1M171.7 735.0L171.2 736.0L169.5 737.9M171.5 734.4L172.2 735.0L173.6 733.5M161.1 739.6L163.4 740.6L162.9 740.7M156.9 742.1L158.0 743.3M155.0 722.4L155.6 723.9M171.9 743.4L172.5 744.0L171.0 743.9M165.3 720.9L166.6 722.1L164.9 721.5M181.7 733.9L183.0 734.2M182.0 732.8L182.8 733.6M151.0 724.0L149.2 724.4M164.3 725.8L166.1 727.2L164.6 729.1M171.5 732.5L173.3 732.6M156.4 732.0L155.7 734.1L156.9 735.9M156.2 735.3L155.2 735.6L153.4 735.4M154.9 740.5L154.2 743.2L154.9 741.3M156.4 731.2L156.3 734.1L158.3 734.6M156.1 747.7L157.0 749.1L157.7 747.2M153.8 743.2L156.0 743.2L155.8 743.4M153.0 723.2L155.7 724.3L154.2 724.3M156.4 720.7L156.0 722.4L157.5 723.1M158.4 724.8L155.7 725.1L155.8 726.5M171.5 732.4L172.8 732.9M176.8 745.6L175.6 745.7L177.2 746.0M172.9 723.7L174.1 724.8M150.6 740.2L149.9 741.9M172.4 739.1L171.9 740.2M156.4 729.6L155.1 729.8L157.0 731.4M174.5 727.2L173.2 729.4L172.1 728.3M162.6 729.3L164.6 729.8M160.8 739.0L161.0 740.1L159.1 740.8M161.3 747.7L159.3 749.5M173.4 747.9L175.4 749.3L174.4 750.6M178.6 744.8L178.2 745.9L178.4 746.8M154.2 738.7L155.5 738.7L156.4 740.6M160.1 732.8L161.0 734.2L160.0 732.4M153.8 718.1L153.0 720.3L154.1 721.2M165.7 721.4L163.7 721.9L162.3 722.6M176.7 742.3L178.7 742.9L179.5 744.1M156.3 718.2L155.3 720.0L154.1 720.3M170.8 723.2L172.0 724.4M149.1 739.6L150.2 740.5M170.1 745.7L171.3 746.6M153.7 722.7L151.7 724.4M159.4 739.5L161.5 739.9L159.7 739.9M164.6 721.7L166.4 722.4M173.8 733.0L173.0 733.7L172.5 733.6M172.1 722.5L173.1 724.1M161.4 730.2L158.6 730.8M164.4 736.7L165.0 737.3M152.6 730.8L152.1 732.2L153.1 733.3M151.1 728.4L153.9 729.2L153.0 730.3M153.9 733.1L152.9 733.7L153.9 733.4M152.4 723.3L151.4 723.3L152.3 724.9M165.0 747.5L164.6 748.9L165.4 749.8M151.9 742.7L152.5 743.8L152.4 745.8M154.2 740.3L154.8 741.4L156.1 742.8M148.4 741.0L147.5 743.6M178.5 742.8L179.6 744.0L179.0 743.5M156.2 745.9L156.8 748.0M156.8 746.3L154.4 748.0M171.6 727.9L170.7 728.5M178.4 743.8L177.4 744.2M172.4 737.2L175.1 737.6M160.2 741.6L158.1 743.3L157.5 742.3M159.8 715.9L158.7 716.7L157.0 717.6M164.6 728.7L162.3 730.3L162.8 731.9M180.4 739.9L181.9 742.2M169.1 743.2L169.0 745.1L170.6 745.7M161.0 727.4L158.7 727.7L160.4 725.8M163.6 739.4L163.8 740.4M176.4 727.1L178.3 728.7M163.6 727.9L161.9 730.2L161.1 729.5M154.7 733.6L154.7 735.9L156.5 737.9M180.8 733.7L178.8 735.6L180.5 734.4M166.1 745.6L163.3 746.4M168.2 719.9L167.1 722.2L167.5 721.3M163.1 732.4L163.2 733.4L162.6 734.3M156.5 723.7L156.5 724.9M155.3 734.9L153.7 736.8M157.8 743.5L156.9 743.7M176.7 738.0L178.3 738.8M160.1 741.1L161.0 741.9L160.6 742.4M153.8 722.4L155.0 722.8L155.0 721.5M163.8 748.1L164.0 751.0L162.7 751.3M154.1 717.5L152.4 719.9L151.8 719.6M172.9 728.3L175.3 729.6M178.6 739.8L179.5 741.7M129.0 745.4L128.6 747.6M118.4 746.6L116.1 747.7M125.6 757.0L125.3 758.7L123.8 760.3M130.7 748.9L131.9 751.4L132.0 753.2M130.6 746.0L131.4 748.0M126.7 747.0L127.9 749.5M125.3 754.8L127.3 755.9L126.1 754.1M118.4 744.1L119.8 744.4M146.7 757.0L146.2 759.8L147.9 759.6M140.7 755.5L141.0 756.4M135.1 757.6L136.0 757.7L134.1 758.5M117.2 742.9L119.0 744.1M126.3 757.6L126.7 759.2L125.6 761.1M139.1 743.2L140.1 743.8L141.0 742.0M138.2 740.6L138.7 743.1M145.6 750.8L146.4 752.3M146.8 750.1L147.9 750.6L148.7 748.6M142.1 749.3L144.6 749.3L145.3 749.6M128.1 757.3L125.3 757.7M126.9 744.8L124.5 745.6M124.8 753.6L126.2 755.2L127.7 755.2M147.1 741.5L144.7 742.0L145.8 742.3M134.7 747.7L133.7 747.9M123.2 742.0L121.6 742.7M140.0 751.7L141.8 752.2M137.2 745.0L138.3 747.6M128.8 750.3L126.8 751.7L128.2 751.3M130.5 742.1L129.7 742.9M140.4 742.4L139.7 743.8L141.0 742.0M116.2 755.3L115.4 755.6L115.3 756.5M125.7 756.8L126.6 757.4M119.9 749.0L120.5 750.0M142.1 744.5L140.8 744.9M148.9 753.9L148.1 755.7M116.6 756.4L114.8 757.8M130.1 754.8L127.3 755.1L128.1 755.4M119.2 742.5L119.4 744.3L118.9 744.6M134.8 742.9L133.3 743.5M118.2 750.5L116.6 750.7M117.6 745.1L116.8 747.0M126.4 757.1L125.6 758.9M126.3 750.9L128.1 753.3L129.9 751.5M133.5 743.7L133.4 744.8M138.3 756.7L136.0 756.7M114.8 747.7L113.3 747.8M128.4 756.2L127.7 758.8L126.5 757.5M116.8 756.8L118.6 758.8M148.8 747.3L148.2 748.1M117.1 753.4L117.8 754.3L118.5 756.1M137.2 742.9L135.9 744.4L137.5 743.4M118.9 742.7L118.1 745.2L118.2 745.4M128.3 749.8L129.2 749.8L128.1 750.9M143.5 744.3L145.3 744.9L144.6 745.9M137.8 755.0L138.1 756.9M116.0 746.0L118.2 746.6L117.4 746.6M122.0 742.8L122.9 744.0M128.9 743.0L129.9 743.1M118.8 751.3L120.7 751.6L119.1 752.6M131.9 743.0L131.0 744.5M121.2 747.2L122.0 747.8M125.4 744.8L124.7 745.9L125.5 745.6M115.6 749.8L112.8 749.9L112.8 749.8M137.8 748.9L136.6 749.7M130.5 742.5L130.6 743.6M134.4 757.6L136.7 757.9M134.6 753.0L135.6 755.1L136.5 754.2M116.4 753.1L114.4 754.0L115.9 754.8M127.1 752.1L128.0 752.1L129.5 754.1M146.6 754.1L144.7 755.0M148.1 750.2L149.7 751.3L149.0 750.8M134.8 744.0L136.0 745.5M137.6 743.3L137.4 744.7M141.9 749.3L143.9 751.3M123.7 747.2L122.2 749.3L123.1 748.1M126.2 745.5L127.3 747.7M121.7 754.1L120.6 756.1M148.6 749.4L147.1 752.0M125.5 742.0L123.5 743.4L123.0 742.5M139.3 756.1L136.9 757.4L136.6 756.6M119.8 742.8L121.6 745.0M105.1 754.3L105.4 755.4M83.3 737.5L82.9 738.7L82.5 738.2M91.1 743.5L91.5 744.3L92.1 744.7M66.5 731.2L67.3 732.5L68.9 731.0M102.2 751.6L103.6 753.1L105.6 751.4M65.0 727.1L65.6 728.5M87.1 740.8L87.9 742.9L89.5 742.3M92.6 743.2L93.2 743.9M77.9 738.2L76.5 738.4L75.2 739.0M83.7 737.8L85.3 739.2L86.6 738.7M85.6 745.0L86.8 745.5M79.3 739.2L77.1 739.5M63.5 726.5L63.1 727.4L62.3 726.5M108.0 753.6L106.4 753.6M109.1 751.6L108.3 752.4L110.0 752.7M71.9 731.4L70.5 731.6M80.0 743.7L81.2 744.6L82.4 743.7M89.3 744.5L88.9 745.4M105.7 750.7L104.6 752.6L105.3 754.4M90.4 746.0L91.0 747.5L91.6 748.3M75.9 739.7L76.7 741.7M96.9 750.5L95.8 750.5L96.8 750.2M84.5 743.5L85.7 744.8M93.2 745.5L91.8 746.2L91.0 747.1M94.8 746.4L96.4 746.5L96.7 745.8M80.9 741.0L81.2 742.0M109.7 754.5L111.0 755.7L109.2 755.5M64.8 730.6L64.7 731.6M73.3 732.2L72.6 732.6M79.8 738.0L78.6 738.4M112.5 756.1L114.0 757.7M69.3 732.8L68.9 733.9L69.8 732.2M94.4 747.4L95.5 747.5M82.5 736.7L81.3 738.4M90.2 741.5L92.2 742.9M99.4 748.3L97.2 748.7M76.6 736.5L74.8 737.8M69.0 729.3L68.8 730.4L67.2 729.0M76.0 733.1L76.3 733.9L75.8 731.9M73.0 733.7L71.6 733.9M102.9 747.6L102.6 749.8L102.7 748.9M93.3 744.4L91.2 744.9M94.2 746.5L92.1 746.9L92.0 748.0M66.8 728.6L66.8 730.0M72.6 734.4L72.6 735.8M795.2 625.5L793.9 625.5L792.0 623.9M796.8 650.3L795.1 652.7M796.1 588.3L795.8 589.1M797.9 603.7L800.2 604.4M791.9 624.7L789.1 625.9M804.1 631.8L805.9 634.0M794.0 622.3L794.5 623.7M795.3 618.6L793.3 619.1M805.9 563.1L806.1 565.1M800.0 611.6L799.2 613.4M804.0 566.4L803.3 567.0M793.8 601.2L795.6 602.7M795.2 623.4L792.7 623.7M798.3 601.7L799.5 603.9L799.7 605.0M797.9 661.1L800.2 662.4L800.4 664.1M795.3 576.8L796.6 577.4M791.9 646.6L791.9 647.7M803.0 584.7L805.7 584.8M802.3 643.5L801.2 645.9M803.3 659.5L804.6 661.4M799.1 589.8L800.5 591.2L801.9 592.7M801.2 632.7L803.5 633.6M802.3 610.4L801.4 611.0L800.8 612.6M791.2 641.3L793.4 642.0L792.3 642.6M796.5 608.6L798.1 608.7L799.2 609.6M798.5 635.5L800.0 636.2L799.2 637.1M795.2 590.5L793.2 591.4L792.7 593.1M797.2 621.2L796.0 621.8L794.4 621.8M792.5 606.7L790.6 606.8L792.0 608.3M792.0 628.7L790.0 630.8M798.2 591.1L798.5 592.9M804.8 611.6L803.7 611.8M804.0 604.6L803.1 604.7M796.0 649.5L797.9 651.0L797.6 649.8M801.7 569.6L800.4 569.7L800.1 570.0M805.1 628.4L805.5 629.3L805.6 629.7M805.7 604.7L806.5 606.2L808.3 606.6M796.8 587.0L797.8 588.6L799.8 588.8M795.5 644.5L794.3 645.0M798.6 617.6L799.5 617.7M796.1 659.3L794.8 660.0L795.1 660.7M790.5 639.6L790.0 640.9L788.9 639.6M803.1 609.0L802.1 610.2M800.5 602.4L800.2 603.6M798.5 629.0L800.0 629.5L801.4 627.5M803.9 644.5L803.0 645.7L803.8 644.8M795.6 642.1L795.0 644.7M805.8 561.1L805.0 561.4M802.3 594.0L804.3 595.6M797.8 564.0L796.9 564.8L794.9 563.8M802.2 628.7L802.7 631.1M798.6 624.6L797.7 625.5L797.1 623.9M801.7 622.4L803.7 623.6L804.7 622.2M794.0 615.6L795.8 617.7M802.0 635.1L801.7 636.5M795.1 581.4L795.7 584.1L797.1 583.4M804.4 589.4L805.2 590.1L803.7 588.8M799.3 608.2L800.4 609.8M795.5 659.1L793.9 660.4L793.2 658.9M799.7 570.7L797.1 571.3L797.9 570.2M803.3 597.9L803.4 600.1L803.9 599.8M793.0 636.8L794.4 637.0L793.0 637.1M802.7 570.4L801.7 572.9L800.6 574.0M804.9 596.5L805.8 599.3L807.7 600.8M798.7 661.7L801.2 662.6M799.6 570.8L798.6 570.9M795.1 633.9L795.8 636.3L797.5 635.8M797.5 647.7L798.7 649.4L798.7 647.7M800.8 605.9L798.0 606.1M801.3 638.6L801.0 639.4M799.5 648.0L800.1 648.6M805.9 639.9L806.8 640.6M799.3 574.2L800.1 576.9L799.8 575.2M803.5 639.0L805.8 639.3L805.7 637.9M802.8 574.2L801.2 574.9L800.2 574.7M799.1 656.1L799.0 658.1M795.0 573.4L795.2 574.2M804.1 635.3L802.4 637.2L803.3 636.0M799.5 643.8L800.9 644.5M805.6 572.8L806.5 573.4M800.4 644.2L800.3 646.2M800.5 623.6L800.5 626.1M796.8 605.5L797.2 607.5L796.8 607.2M805.6 569.8L807.9 569.9L807.7 570.3M804.0 661.4L805.1 662.8L803.4 664.4M793.9 587.5L792.4 589.6L791.9 588.5M803.8 652.7L805.8 653.4M797.3 575.7L799.7 576.1L801.0 576.8M804.3 660.7L803.9 661.7M801.7 573.1L802.9 574.2M797.0 647.8L799.0 649.1L800.8 650.9M799.7 572.0L800.3 574.1M799.0 578.5L800.2 580.3M794.1 623.3L795.7 625.2L794.8 625.0M792.6 580.8L793.8 581.3L793.4 582.3M797.6 602.8L795.5 604.6L797.2 603.6M798.4 633.7L798.9 635.0L800.5 634.4M797.4 616.9L798.3 617.6L799.0 617.8M801.4 606.8L802.7 607.1L804.0 607.3M794.0 591.4L795.0 592.7M801.2 655.6L800.7 656.5L799.3 655.5M803.2 623.3L803.4 624.6M795.5 565.0L794.1 565.0M800.4 598.5L799.1 599.0L797.9 600.2M800.3 633.6L801.2 634.7L803.1 632.9M795.6 580.2L796.2 583.0L794.8 583.5M798.2 579.4L797.2 579.8L796.2 579.9M798.9 638.5L797.1 639.1L798.5 637.2M792.3 625.0L791.5 625.7L792.9 626.5M801.0 645.8L801.3 646.9M792.1 577.8L792.5 578.8L792.7 579.0M802.8 569.5L804.3 571.9M802.2 617.9L800.6 619.1L799.6 617.5M795.2 604.0L795.0 605.0M802.7 655.2L803.3 656.1M795.9 597.1L798.3 598.3L799.5 597.7M798.2 640.5L796.7 641.1M803.8 642.1L803.5 643.7L805.0 644.9M791.4 581.1L790.5 581.2M798.9 618.3L799.4 620.2L801.1 618.6M800.8 629.2L798.9 630.5M802.5 576.5L802.2 579.0L802.3 580.6M796.4 611.7L798.2 614.0M794.9 639.0L795.0 641.6L796.5 642.3M799.0 646.9L798.7 649.8L800.3 650.7M803.6 576.1L804.8 578.1M805.9 630.1L807.0 630.2L807.2 629.5M797.2 568.4L794.6 569.2M794.9 625.1L796.3 627.7M803.2 568.1L804.7 568.7L804.3 570.7M805.3 583.9L806.0 584.5L804.2 584.6M800.8 620.6L800.3 622.0M801.4 610.9L801.6 612.3L801.5 612.8M803.8 654.9L801.4 656.1L800.1 655.2M805.8 572.0L807.3 572.0L807.7 570.5M795.4 658.1L796.2 659.4L798.0 659.7M805.0 571.2L806.1 574.0M805.1 588.5L804.8 590.1M805.2 654.7L807.0 656.6L806.6 658.4M795.9 622.8L797.6 624.4M804.7 567.7L803.8 569.0L802.1 571.0M797.3 645.8L794.5 646.1M801.7 632.3L800.2 633.1M799.2 575.8L797.5 576.2L797.1 576.6M801.4 574.2L803.2 576.1M802.1 624.7L802.4 625.4L801.4 625.8M793.3 568.1L792.8 569.0L792.5 570.9M795.1 611.3L796.5 612.1M802.7 579.9L804.8 580.6L806.5 579.0M800.7 600.0L802.7 600.8M218.3 662.7L217.8 664.1L217.6 664.3M214.5 654.8L213.7 656.7L214.5 658.7M230.4 658.4L229.4 660.4L228.7 662.4M214.0 659.1L212.7 660.4M206.0 652.2L207.6 652.4L207.7 652.9M228.3 658.0L226.9 658.2M212.8 664.3L214.1 664.3L215.6 664.3M213.8 661.4L213.0 661.9M219.6 658.2L220.1 660.6M209.7 651.6L208.0 652.6M214.9 656.9L217.3 657.5M206.1 658.1L208.0 658.8M206.3 652.6L204.4 653.6M231.6 658.1L229.9 659.5M214.4 656.8L213.5 656.8L212.1 658.8M224.2 659.8L223.2 660.8L224.2 661.6M225.2 660.7L225.7 662.4L224.1 661.7M207.3 663.2L206.0 664.6L206.9 665.9M211.9 660.6L212.3 661.8L213.8 662.3M210.5 655.5L210.4 656.4L210.6 656.3M221.0 661.8L220.4 663.9L218.5 665.8M209.3 652.9L210.8 654.1L208.8 654.1M212.7 657.5L213.4 658.0L212.3 657.3M215.4 656.5L217.6 656.6M206.1 655.0L204.6 655.5L205.9 657.0M251.0 670.7L252.4 671.3M255.9 671.4L256.2 672.3L257.6 673.8M238.5 668.2L240.7 669.7M241.9 670.9L241.2 672.0L239.6 673.2M237.2 667.3L236.2 669.3M260.6 666.5L260.5 667.7L259.1 666.0M265.7 671.9L266.9 672.2M253.5 671.2L255.9 671.8L256.3 672.0M268.0 668.7L268.4 670.7M261.2 670.5L259.9 672.2M231.4 752.2L228.9 752.3M222.9 748.2L223.5 749.0L221.8 747.7M218.5 747.5L218.4 749.0L216.5 749.2M216.1 744.4L217.2 746.1L218.4 744.1M213.4 744.7L213.9 746.1M225.2 749.2L227.3 749.7L227.8 748.8M215.8 747.2L214.8 747.3L215.9 745.6M211.4 747.1L211.5 748.1L213.2 749.0M211.9 742.0L213.4 742.7M239.8 756.4L238.9 756.4L238.7 755.4M173.5 750.1L173.5 752.6M152.7 752.7L152.6 754.8L151.7 756.7M165.9 749.8L164.8 750.8M172.8 750.8L173.8 751.0L173.3 752.8M168.6 749.3L168.6 751.0L168.9 750.8M171.6 754.5L172.5 754.9L171.6 755.4M153.2 755.3L152.1 756.4M153.1 750.7L154.8 751.5M150.3 749.1L149.0 749.2L150.5 747.6M165.8 749.0L165.2 750.8M153.0 750.8L152.5 751.6L151.5 752.8M159.3 756.7L159.0 757.9M159.6 752.5L159.0 754.9M165.1 751.6L165.3 753.6L165.3 752.8M171.3 752.7L170.8 753.9L170.9 754.1M169.9 753.0L170.4 754.1M174.4 751.0L176.2 751.4L177.6 752.1M161.5 754.5L162.7 755.1M165.2 749.8L166.2 750.6L166.7 750.9M164.4 756.3L164.6 758.0L164.4 759.8M150.1 751.8L151.6 752.9M152.3 749.2L151.2 750.7M150.9 752.6L149.3 753.5L147.8 755.1M154.3 754.7L152.1 755.2M152.3 752.7L151.1 753.5L152.6 754.3" stroke="#000" stroke-width="1.5"/>
<path d="M191.8 726.1h1M203.6 731.8h1M192.4 701.2h1M218.2 692.3h1M194.1 705.8h1M206.9 687.9h1M186.9 718.7h1M208.1 710.7h1M225.6 694.7h1M201.5 731.9h1M211.6 694.7h1M201.0 722.2h1M212.0 701.2h1M217.5 703.3h1M212.5 696.4h1M217.0 701.4h1M205.6 709.4h1M206.2 684.6h1M224.0 677.6h1M196.2 700.6h1M209.4 705.0h1M207.0 702.0h1M190.8 726.0h1M190.3 723.9h1M221.0 694.2h1M206.8 705.5h1M206.5 708.9h1M213.4 686.4h1M192.0 720.4h1M200.1 731.9h1M194.8 735.0h1M214.7 697.1h1M204.6 729.3h1M197.2 730.3h1M193.2 723.6h1M216.1 677.9h1M220.5 695.6h1M159.4 718.3h1M173.8 749.1h1M169.1 725.9h1M175.9 743.1h1M170.8 738.3h1M152.5 725.0h1M155.7 739.7h1M161.6 733.8h1M182.3 734.7h1M174.4 729.3h1M132.0 743.1h1M127.8 751.9h1M139.8 757.7h1M116.3 748.7h1M133.4 744.0h1M84.8 738.5h1M86.0 744.5h1M74.8 733.2h1M796.7 626.5h1M793.4 625.7h1M799.4 662.1h1M804.5 585.7h1M803.2 623.4h1M796.6 582.4h1M802.3 606.9h1M798.9 617.9h1M802.3 630.2h1M797.4 623.8h1M231.9 659.4h1M214.3 665.3h1M210.8 653.9h1M154.2 753.7h1M153.8 753.7h1" stroke="#5d4f4b" stroke-width="1.2"/>
<path d="M217.8 692.4h1.2M194.5 700.7h1.2M199.4 699.6h1.2M202.5 705.0h1.2M223.0 690.9h1.2M185.6 716.7h1.2M197.2 726.9h1.2M211.6 692.8h1.2M196.1 727.4h1.2M204.3 689.1h1.2M202.9 726.1h1.2M222.5 698.0h1.2M193.5 712.3h1.2M218.0 684.6h1.2M204.5 677.9h1.2M221.9 684.9h1.2M200.0 689.5h1.2M191.1 712.8h1.2M211.8 687.9h1.2M211.6 693.3h1.2M202.0 695.9h1.2M190.5 701.9h1.2M193.3 726.0h1.2M183.3 712.3h1.2M215.2 704.4h1.2M207.2 700.4h1.2M213.4 688.4h1.2M211.1 696.0h1.2M198.3 690.0h1.2M195.5 698.5h1.2M209.5 703.0h1.2M205.9 690.2h1.2M191.0 718.7h1.2M186.1 719.7h1.2M212.1 684.8h1.2M197.1 702.1h1.2M201.4 728.9h1.2M187.2 724.9h1.2M215.0 680.2h1.2M191.5 730.2h1.2M199.7 694.6h1.2M219.8 677.2h1.2M212.4 702.8h1.2M216.9 705.9h1.2M200.3 716.0h1.2M206.6 684.2h1.2M191.1 713.9h1.2M223.2 681.8h1.2M197.1 712.0h1.2M151.5 734.0h1.2M163.5 750.2h1.2M150.3 744.6h1.2M177.3 743.8h1.2M159.6 741.1h1.2M154.7 736.8h1.2M175.3 747.1h1.2M159.3 740.5h1.2M154.8 719.7h1.2M157.9 741.0h1.2M159.9 731.7h1.2M149.6 729.9h1.2M163.5 749.0h1.2M150.4 744.2h1.2M177.0 744.3h1.2M158.7 743.1h1.2M158.3 717.4h1.2M178.9 741.4h1.2M162.3 749.6h1.2M145.2 758.5h1.2M133.2 749.2h1.2M124.2 758.3h1.2M135.7 744.4h1.2M123.9 746.3h1.2M114.1 751.3h1.2M132.9 759.1h1.2M114.9 754.6h1.2M77.8 740.7h1.2M104.2 752.2h1.2M88.9 747.5h1.2M74.4 741.2h1.2M93.3 747.9h1.2M800.8 611.9h1.2M789.0 641.1h1.2M791.5 638.3h1.2M799.0 625.1h1.2M794.0 566.5h1.2M790.8 626.5h1.2M797.4 619.8h1.2M799.9 612.4h1.2M223.7 662.2h1.2M204.6 656.5h1.2M240.4 672.4h1.2M214.6 745.9h1.2M158.1 754.0h1.2" stroke="#004364" stroke-width="1.2"/>
<path d="M299.6 60 L303 56 L307 55 L314 58 L316 64 L317 70 L323 72.5 L321 77 L319 82 L322 87 L324.5 91 L322.5 96 L320 90 L316 83 L315 76 L312 68 L309 60 L305 59 L302 62Z" fill="#2a415d" stroke="#22364f" stroke-width="0.9"/>
<path d="M368.6 260 L376 259 L388 266 L395.6 273.7 L395.6 276 L383 270 L373.5 264 L368.6 262Z" fill="#2a415d" stroke="#22364f" stroke-width="0.9"/>
<path d="M439 377 L442 371 L446 367 L451 363.5 L452 366 L447 371 L444 376 L441 378Z" fill="#2a415d" stroke="#22364f" stroke-width="0.9"/>
<path d="M424.5 413.4 L427 417 L428 425.7 L430.6 429.4 L430.6 434.3 L428 432 L425.7 425.7 L424.5 418.3Z" fill="#2a415d" stroke="#22364f" stroke-width="0.9"/>
<path d="M527 502 L529.5 504.5 L533 503 L532 514 L530.8 524 L535.5 526.7 L533 534 L531.6 539 L528 534 L525.5 531.6 L528 526.7 L525.5 516.8 L528 509.4Z" fill="#2a415d" stroke="#22364f" stroke-width="0.9"/>
<path d="M613.4 286 L615 291 L620.8 287.3 L622 292 L627 293.4 L619.5 300.8 L615.9 307 L609.7 313 L604 313.5 L603 308 L608 306 L611 303.3 L613.4 294.7 L611 289.7Z" fill="#2a415d" stroke="#22364f" stroke-width="0.9"/>
<path d="M541.5 607 L544 613.5 L548 615 L554 612 L556.5 606.5 L559 612 L563 611 L556 615.5 L548 618 L542.5 615Z" fill="#2a415d" stroke="#22364f" stroke-width="0.9"/>
<path d="M121.8 660 L124 655 L130 652.8 L135 655 L136.5 660 L133 666 L127 667.6 L123 665Z" fill="#2a415d" stroke="#22364f" stroke-width="0.9"/>
<path d="M140 705 L143 699 L148 696 L153 698 L155 704 L152 709 L147 710 L144 714.4 L140 712Z" fill="#2a415d" stroke="#22364f" stroke-width="0.9"/>
<path d="M43 680 L46 679 L51.6 685 L51 689.7 L46 688Z" fill="#2a415d" stroke="#22364f" stroke-width="0.9"/>
<path d="M57 690.6 L60.2 695 L63.9 701 L70 704.8 L80 706 L84.8 708.5 L83.6 710.3 L75 707.2 L67.6 706.6 L61.4 702.3 L58.3 696.2Z" fill="#2a415d" stroke="#22364f" stroke-width="0.9"/>
<path d="M784.6 731.6 L789 733 L792 740 L797 748 L796 753.8 L790 752 L786 744Z" fill="#2a415d" stroke="#22364f" stroke-width="0.9"/>
<path d="M770 792 L776 789 L781 792Z" fill="#2a415d" stroke="#22364f" stroke-width="0.9"/>
<path d="M240.5 6 L230.6 18.3 L227 43 L220.8 60 L206 68.8 L196 80 L197 105 L190 125 L183 140 L176 155 L163.6 174 L148.8 200 L145 206 L151.3 218.3 L161 224.5M240.5 6 L250 20.8 L262.6 38 L263.9 50 L270 57.7 L287 60 L304.5 52.8 L314 57.7 L334 67.6 L353.8 82.4 L363.7 90 L372.3 99.9 L381.6 108.5 L390.8 115.9 L400.6 120.8 L405 130.6M174.8 223.1 L184 219.4 L193.9 213.3 L206.2 204.6 L220.8 193.5 L240.5 182 L267.6 171 L299.6 163.6 L334 158.7 L353.8 151.3 L360 147.9 L372.3 146 L384.6 141.7 L395.7 139.3 L405 131.9M394.5 99.2 L406.8 101 L416.7 102.3 L429 107.2 L435.7 112.8 L437.6 125.7 L433.9 139.3 L430.8 149.1 L428.3 159 L417.9 162.7 L408 165.7 L396.9 164.5 L385.9 163.9 L376 156.5 L368.6 146.7 L365.5 136.8 L367.4 126.9 L373.5 117.1 L381.6 108.5 L388.3 102.3 L394.5 99.2M405 131.9 L406.2 141.7 L403.1 151.6 L401.3 163.9 L398.2 171.3 L396.3 190 L398 206 L399.3 225.7 L394.4 245.4 L393 260 L397 277.4 L395.7 299.6 L400.6 321.8 L401.5 344 L401.1 350 L401.7 357.4 L404.2 363.5 L401.1 370.9 L403 378.3 L405.4 380.8M472.5 6 L471.3 25.7 L465 45.4 L452.8 55.3 L435.6 60.2 L428.2 77.4 L421.6 90 L416.7 102.3 L410.5 109.7 L409.3 117.1 L410.5 125.7 L405 131.9M405 131.9 L409.3 136.8 L419.1 134.3 L429 132.5 L437.6 132.5 L448.7 131.3 L460 133.1 L487 137.8 L517 136.5 L534 148.9 L551 158.7 L573.5 157.5 L593 160 L606 156 L613.4 148.9 L620.8 147.6 L643 150 L660 142.7 L670 134 L689.7 124.2 L712 113 L739 98.4 L763.6 87.3 L783.3 80 L806 72M409.3 136.8 L414.2 144.2 L421.6 151.6 L428.3 159 L435.1 166.4 L441.3 176.2 L446.2 186 L449.9 190 L460 198 L467.6 206 L477.4 220.8 L482.4 230.6 L502 239.3M588 6 L587 20.8 L595.7 35.6 L603 50.3 L600.6 70 L603 92 L590.7 109.4 L598 126.7 L606 134 L613.4 148.9M593 160 L578.4 178.4 L568.5 193 L561 206 L556 206 L548.9 218.3 L534 230.6 L521.8 238 L502 239.3M659 142.7 L671 153.8 L673.7 166 L683.6 173.5 L686 183.3 L699.6 189.5 L714.4 188.3 L734 183.3 L753.8 180.9 L773.5 176 L793 173.5 L806 174.7M714.4 188.3 L721.8 200.6 L726.7 206 L736.5 215.9 L746.4 217 L756.2 230.6 L761 245.4 L766 265 L769.8 280M6 256.5 L38 255.3 L62.6 250.3 L87.3 243 L112 234.3 L136.5 225.7 L153.8 223.2 L163.6 224.5M161 222 L176 222 L177 227 L176 232 L161 232 L160 227 L161 222M164.9 231.9 L168.6 255.3 L173.5 280 L172.3 309.4 L178.4 343.9 L183.3 373.5 L180.9 395.7 L176 406 L168.6 418.3 L162.4 433 L161 450.3 L155 467.6 L148.9 478.7M504.5 239.3 L497 255.3 L489.7 275 L477.4 297 L462.6 319.3 L450.3 334 L430.6 348.9 L427.6 350 L422.7 357.4 L415.3 362.3 L414 367.2 L410.3 374.6 L405.4 380.8M521.8 238 L534 250.3 L540 270 L544 292 L553.8 304.5 L558.7 316.8 L568.3 322.2 L572 330.8 L578.2 338.2 L581.9 345.6 L583.1 350.5M583.3 293.4 L580.6 300 L575.7 307.4 L572 317.2 L569.6 324.6M414 367.2 L423.9 366 L436.2 363.5 L450 361.7 L467.6 363.6 L499.6 358.7 L529 353.8 L540 352.3 L556 351.7 L562.2 348 L573.3 347.4 L583.1 350.5 L594.2 353M580.6 334.5 L593 335.7 L594.2 349.3 L593 354.2 L590.5 366.5 L583.1 361.6 L577 359.1 L575.1 349.3 L577 339.4 L580.6 334.5M583.1 345.6 L586 350 L594.2 353M583.1 350.5 L583.1 345.6 L586.8 341.9 L593 335.7 L601.6 332 L610.2 323.4 L620.8 319.3 L643 309.4 L662.6 297 L682.4 284.8 L704.5 277.4 L721.8 267.6 L729 256.5 L744 251.6 L758.7 243 L778.4 233 L806 223.2M739 255.3 L744 267.6 L758.7 275 L769.8 280 L783.3 291 L795.7 302 L806 308M594.2 353 L605.3 353.6 L613.9 359.1 L626.2 361.6 L643 364.9 L667.6 368.6 L692.2 369.8 L716.8 372.3 L734 371 L753.8 373.5 L763.6 366 L778.4 358.7 L793 353.8 L800.6 346.4 L806 340M583.1 350.5 L583.1 359.1 L590.5 366.5 L596.7 373.9 L601.6 383.7 L605.3 393.6 L607.1 400 L609.7 406 L618.3 413.4 L627 422 L633 433 L630.6 455.3 L629.4 480 L630.6 504.5 L638 529 L646.6 546.4 L651.6 573.5 L657.7 598 L661.4 606 L667.6 620.8 L680 633 L692.2 645.4 L704.5 659 L712 672.5 L719.3 689.7 L724.2 704.5 L736.5 721.8 L744 739 L748.9 758.7 L751.3 778.4 L755 792M583.1 359.1 L577 361.6 L570.8 366.5 L563.4 372.7 L556 381.3 L552.3 391.1 L548.9 406 L544 408.5 L534 415.9 L526.7 425.7 L519.3 435.6 L512 447.9 L497 457.7 L480 465 L462.6 471.3 L439 471.3M609.7 406 L613 418 L627 422M627 422 L638 430.6 L647.9 443 L667.6 454 L684.8 460 L704.5 465 L729 467.6 L758.7 472.5 L783.3 483.6 L798 487.3 L806 494.7M806 534 L803 544 L800.6 563.6 L793 578.4 L788.3 593 L785.8 606 L787 620.8 L788.3 638 L783.3 647.9 L778.4 655.3 L780.9 665 L790.7 667.6 L798 677.4 L803 689.7 L806 694.7M778.4 655.3 L783 650 L790 652 L792 660 L790.7 667.6M6 460 L30.6 463.9 L55.3 466.3 L77.4 471.3 L97 476 L112 473 L134 472.5 L146.4 478.7 L153.8 480 L178.4 478.7 L206 476 L230.6 475 L255.3 473.7 L280 467.6 L289.7 460 L304.5 440.5 L321.8 423 L341.5 406 L350 401.1 L359.9 400.5 L368.5 398.6 L378.3 394.3 L386.9 386.9 L391.9 378.3 L395.6 370.9 L401.1 368.5M386.9 386.9 L396.8 385.7 L405.4 380.8 L410 374M153.8 480 L146.4 489.7 L139 504.5 L134 521.8 L130.4 544 L129 573.5 L128 593 L126.7 606 L125.5 625.7 L129 640.5 L134 652.8 L132.8 673.7M148.9 478.7 L146 470 L155 467.6M257.7 475 L250.3 489.7 L243 507 L235.6 521.8 L228 536.5 L218.3 548.9 L215.9 563.6 L213.4 583.3 L206 600.6 L206 611 L198 620.8 L190.7 635.6 L185.8 654M405.4 380.8 L403 391.9 L405.4 401.7 L409.1 409.1 L411.6 419 L419 428.8 L422.7 438.7 L426.4 450 L430.6 455.3 L439 471.3 L433 487.3 L423 507 L413.4 524.2 L406 534 L395.7 548.9 L380.9 563.6 L363.6 578.4 L344 590.7 L324.2 599.3 L309.4 606 L307 615.9 L305.8 628M6 661.4 L15.9 659 L30.6 652.8 L50.3 646.6 L67.6 643 L87.3 644 L104.5 641.7 L124.2 640.5 L144 643 L163.6 647.9 L183.3 654 L195.7 655.3 L206 652.8 L220.8 646.6 L243 643 L262.6 644 L280 641.7 L294.7 638 L304.5 631.9 L313 623.2 L324.2 624.5 L339 627 L353.8 630.6 L366 636.8 L378.4 638 L388 633 L398 627 L406 622 L425.7 618.3 L443 617 L460 620.8 L477.4 615.9 L499.6 616.3 L514.4 615.9 L529 620.8 L544 625.7 L558.7 630.6 L573.5 636.8 L588.3 639.3 L606 639.3 L625.7 643 L645.4 645.4 L667.6 651.6 L689.7 655.3 L704.5 659 L714.4 661.4 L739 662 L758.7 657.7 L778.4 655.3 L788.3 654M6 617 L12 625.7 L13.4 638 L14.6 659M87.3 644 L92.2 655.3 L102 666.3 L114.4 672.5 L132.8 673.7 L144 680 L160 684.8 L173.5 675 L183.3 662.6 L185.8 654" stroke="#7d6a14" stroke-width="1" shape-rendering="crispEdges"/>
<path d="M6 105.3 L155 105.3 L156 112 L161 114 L161 122 L156 129 L148 137 L144 141 L138 149 L187 149M208.5 104.5 L265 105.3 L312 105.3 L310.7 97 L309.5 89.3 L314.4 88.5 L321.8 91 L324 92.2 L406 90.5 L455 92.7 L509.4 93.4 L553.8 95.2 L606 96.6 L635.6 96.6 L739 96 L766 94.7 L787 94.2 L806 98.4M635.6 96.6 L638.8 95.6 L639.6 92.2 L643.4 91.6 L645.9 89.8 L648.6 89.4 L651.4 87.6 L654 87 L657.3 87.2 L660.7 85.6 L662.7 84.5 L664.9 83.5 L668.6 83.4 L671.4 83.8 L674.6 82.6 L675.9 79.5 L677.8 77.2 L679.8 76.2 L682.8 73.6 L686 73.7 L688.6 73 L691.4 71.8 L693.6 71.2 L696.3 67.5 L696.9 65.6 L697.5 62.5 L698.9 60.6 L701.3 58.7 L703.5 57 L706.9 54.5 L707.8 52.9 L709.2 49.3 L710.2 46.9 L713.7 45.3 L716.8 44.2 L719.5 42.9 L722.2 42.3 L724.1 40.6 L727.1 39.4 L729.1 37.4 L732.2 37.3 L735.1 34.4 L738.1 34.3 L740.9 32 L743.1 30.1 L745.2 28.4 L746.6 27.5 L748.6 24.9 L752.2 22.4 L753.3 21.5 L755.9 19.2 L757.5 16.6 L760 15.2 L762.3 14.2 L766 13.4M747.6 6 L749.5 8 L752 10 L755 10.4 L756.9 12.4 L760.3 11.9 L764.5 12.9 L766.4 13.9 L765.1 16.2 L764.2 20.3 L764.5 22.9 L766.1 24.3 L767.6 27.9 L768.2 29.6 L771.5 32.3 L773.6 34.8 L776 36.7 L777.8 38.3 L780.6 39.9 L784 39.8 L785.4 41.1 L789.8 41 L792.2 40.1 L794.9 39.7 L797.6 39.5 L800.2 38.1 L802.6 36.1 L805.1 34.2 L806 31.9M787 94.2 L785.5 96.3 L784.8 99.2 L783.2 102.5 L784 106.1 L783.4 108 L782.7 111.1 L781.7 113.8 L781.5 118.3 L780.1 118.6 L777 117.4 L773.8 119.9 L772.3 122.2 L770.3 122.8 L767.5 125.9 L765.4 127.2 L763.8 129.6 L763.1 133.6 L760.9 135.1 L760 138.2 L757.5 139.3 L753.8 138 L751.1 137.5 L747.3 136.8 L745.5 135.8 L741.4 137.6 L739.1 138.8 L736.8 139.8 L735 140.9 L731.3 142.2 L729 143.8 L726.3 146.6 L724 148.3 L722.8 149.4 L719 151.6 L718.6 150.8 L716.2 147.7 L714.6 145.3 L712.3 145 L711.2 146.8 L708.2 148.1 L704.2 148.2 L703.4 150.7 L699.9 152.6 L697.7 154.1 L694.6 154.6 L693.1 156.6 L692.5 161 L692 162.3 L689.1 164.2 L687.8 165.9 L684.2 166.8 L682.8 168.7 L678.7 169.4 L675.7 170.9 L674.2 172.2 L670.3 174.2 L668 176.5 L665.2 177.1 L663.9 178.5 L661.7 180.3 L657.8 181.7 L654.9 183.4 L652.8 185.8 L651.3 186.7 L647 186.8 L644.4 187.1 L641.4 188.6 L638.2 187.5 L636.6 188.7 L633.8 188.8 L630.6 189.6 L627.6 190.4 L624.4 190.6 L621.2 193.4 L619.8 194.9 L616.1 195.7 L615.2 198.1 L613.6 200.4 L611.8 203.3 L609.6 206.3 L609.7 207.5 L608.6 211.9 L607 213.1 L605.8 215.1 L603 215.7 L598.4 214.4 L596.4 214.8 L594 216.7 L590.5 216.5 L590.2 218.7 L589.9 221.9 L589.5 226.1 L589.4 228.7 L589.2 231 L588.6 234.2 L588.8 238 L588 239.3M144 238 L206 238 L299.6 238 L336.5 237.3 L406 238 L492 239.3 L588 239.3 L606 239.3 L655 238.5 L678.7 237.5M299.6 238 L303.3 244 L307 247.9 L304.5 280 L300.8 316.8 L295.9 366 L291 406 L284.8 462.6 L280 504.5 L279.4 524.2 L281 558.7 L283.6 606 L284.8 640.5 L285.3 649M492 239.3 L497 262.6 L500.8 284.8 L507 321.8 L513 358.7 L518 388 L520.5 406M520.5 406 L520.6 409.8 L520.9 412.3 L521.4 414.4 L523.6 417.3 L523.5 420.7 L523.7 423.7 L523.9 427.2 L524.5 429 L525.2 432 L526.7 436 L527.4 437.5 L528 442 L528.7 444.1 L530.6 446.9 L531.9 449.6 L533.5 452.2 L535.6 454.7 L535.6 456.5 L538.2 460 L537.9 463.7 L539.6 466.1 L540.6 468.1 L538.9 472.1 L537.7 474.8 L537.9 477.1 L541.5 479.2 L544.2 480.1 L543.6 481.4 L542.4 484.5 L539.8 487.6 L538.3 489.2 L535.4 490.2 L533.1 492.4 L533.2 495.6 L533.1 499.3 L533.8 501.1 L532.6 504.1 L532.8 508.5 L531.7 511.1 L531.5 512.7 L532.1 516.3 L530.8 519.5 L530.7 522.4 L530.9 525.4 L530.9 528.2 L529.8 530.8 L529.9 534.6 L531.4 537.9 L532.6 540.6 L534.5 542.2 L532.8 545.3 L533 549 L533.2 551.6 L533.1 553.9 L532.4 557.2 L532 559.9 L531.7 564.2 L531.3 566.8 L529.4 570.5 L529.4 571.8 L529.3 575.5 L530.1 577.6 L530.8 581.1 L532.8 582.9 L534.1 586.7 L535.8 589 L536.5 591.5 L537.3 594 L538.5 596.7 L539.9 600.7 L540.5 602.3 L541.2 605.9 L541.8 609.6 L544.1 611.5 L545.3 613.7 L545.6 617.1 L547.6 620.3M678.7 237.5 L704.5 230.6 L716.8 225.7 L731.6 222 L744 220.3 L773.5 221.3 L806 223.7M678.7 237.5 L677.9 240.2 L676.9 242.6 L676 246.3 L673.2 246.8 L670.5 248.8 L667.5 251.6 L666.4 251.6 L664.7 255.2 L662.6 257.3 L661.9 260.4 L660.7 263.5 L660.9 265.9 L664.6 268.4 L666.1 268.8 L667.2 271 L671.4 273 L672.8 275.8 L675.1 276.9 L677.8 277.8 L680.5 280.9 L682 281.8 L684.7 283.5 L687.8 284.9 L691.1 284.4 L694.5 283.7 L695.9 285.9 L697.6 288 L699.5 290.5 L699.8 294.4 L702.6 296.4 L703 298.7 L704.1 302.1 L705.2 303.9 L706.2 306.9 L707 311.1 L708.3 313.2 L709.2 315.6 L710.2 318.6 L712.5 320.4 L713.7 323.1 L716.3 325.5 L718.7 328.3 L719.7 330.1 L723.1 332.2 L724.7 333.5 L726.6 336.3 L728.7 338.1 L731.4 340.2 L733.6 341.5 L735.8 344.8 L738.1 345 L739.3 348.2 L741 349.9 L742.8 353 L746 355.6 L746.9 357.8 L749.6 359.4 L752.5 361.8 L755 362.5 L757.2 365.3 L758.1 366.5 L760.7 369.7 L762.6 371.9 L764.7 374.1 L766.5 377.4 L767.1 379.7 L767.1 382.7 L765.3 385.7 L768 388.1 L770.6 389 L772.2 390.8 L774 394.5 L774.6 396.1 L775.7 398.5 L777.3 401 L780.7 404.6 L782.3 405.9 L785.3 406.9 L787.5 408.5 L790.4 409.2 L792.7 411.2 L794.9 412.9 L796.6 416.6 L798.7 418.7 L797.8 421.2 L798.3 423.5 L799.6 427.1 L801.9 430.1 L802.4 432.8 L804.7 434.7 L806 436M6 415.4 L78.7 415.4M44.2 594.4 L185.8 594.4 L184.6 600 L183.3 606 L178.4 618.3 L178.8 630 L182.3 636.2 L188.9 641.4 L190.7 649.3 L193.7 655.5 L194.6 662.5 L197.2 666.9M345 594.4 L406 594.4 L537.8 594.4M345 594.4 L343.7 597.7 L344.1 601.1 L342.8 602.8 L343.2 606.4 L344.4 608.8 L346.5 611.2 L347.9 612.5 L351.1 615.2 L351.8 618.4 L354.2 619.6 L355.9 622.9 L356.3 625.7 L357.2 627.9 L357.8 630.5 L358.7 633.8 L358 636.8 L356.6 640.5 L357.6 641.8 L358.8 645.4 L359.4 647.1 L358.4 649.8 L354.8 651.5 L353.8 652.8M547.6 620.3 L606 623.2 L744 631.9 L745 643 L748.9 650.3 L757.5 650.3 L760 643 L757.5 630.6 L758.7 615.9 L766 609.7 L778.4 614.6 L788.3 618.3 L795.7 617" stroke="#000" stroke-width="1" shape-rendering="crispEdges"/>
<path d="M304.7 6.3 L304.8 6.6 L304.8 6.9 L304.9 7.3 L304.9 7.7 L304.9 8.1 L304.8 8.6 L304.7 9.1 L304.6 9.7 L304.5 10.3 L304.4 10.9 L304.3 11.6 L304.2 12.2 L304.5 12.6 L304.8 13 L305.2 13.4 L305.5 13.7 L306 14 L306.4 14.2 L306.5 13.8 L306.9 13.4 L307.2 13.1 L307.5 13.1 L307.7 13.3 L307.8 13.8 L307.9 14.3 L308 14.8 L308.2 15.3 L308.3 15.8 L308.4 16.3 L308.4 16.7 L308.5 17.2 L308.5 17.7 L308.5 18.2 L308.4 18.7 L308.3 19.2 L308.1 19.7 L307.9 20.1 L307.7 20.5 L307.1 21.2 L306.3 22 L305.3 22.3 L304.3 22.4 L303.6 22.3 L303.1 22.2 L302.7 22 L302.2 21.7 L301.8 21.5 L301.4 21.2 L301 20.9 L300.6 20.5 L300.3 20.2 L299.9 19.8 L299.5 19.5 L299.2 19.2 L298.8 18.9 L298.4 18.5 L298 18.3 L297.6 18 L297.1 17.8 L296.7 17.6 L296.2 17.5 L295.7 17.4 L295.2 17.4 L294.7 17.5 L294.2 17.6 L293.7 17.7 L293.3 17.9 L292.8 18.2 L292.4 18.5 L292 18.8 L291.7 19.2 L291.4 19.6 L291.1 20 L290.8 20.4 L290.5 20.8 L290.3 21.3 L290 21.7 L289.8 22.1 L289.5 22.5 L289.2 23 L288.9 23.4 L288.6 23.7 L288.4 24 L288.3 24.3 L288.3 24.5 L288.3 24.8 L288.1 25 L287.8 25.4 L287.4 25.7 L286.9 25.9 L286.5 26.1 L286 26.3 L285.5 26.4 L285 26.5 L284.5 26.5 L284 26.4 L283.5 26.3 L283 26.3 L282.5 26.1 L282 26 L281.5 25.9 L281.1 25.7 L280.6 25.6 L280.1 25.5 L279.6 25.3 L279.2 25.2 L278.7 25.1 L278.2 25.1 L277.7 25.1 L277.2 25.1 L276.7 25.1 L276.2 25.2 L275.8 25.4 L274.8 26.1 L273.8 27.2 L273.3 28.6 L273.2 30.1 L273.4 30.8 L273.5 31.2 L273.8 31.7 L274 32.1 L274.3 32.6 L274.6 33 L274.9 33.4 L275.2 33.8 L275.5 34.2 L275.8 34.6 L276 35.1 L276.3 35.5 L276.5 36 L276.6 36.4 L276.8 36.9 L276.8 37.5 L276.9 38.1 L277.1 38.6 L277.3 39.1 L277.5 39.6 L277.6 40.1 L277.7 40.6 L277.7 41.1 L277.7 41.6 L277.8 42.1 L277.7 42.6 L277.5 43 L277.3 43.4 L277.1 43.9 L277 44.3 L276.9 44.8 L276.8 45.3 L276.8 45.8 L276.9 46.3 L277 46.7 L277.2 47.2 L277.4 47.5 L277.1 46.7 L277.2 45.6 L277.3 44.7 L277.7 44.2 L277.8 44.7 L278 45.2 L278.2 45.6 L278.4 46.1 L278.7 46.5 L279 47 L279.3 47.4 L279.6 47.8 L279.8 48.2 L280.1 48.6 L280.4 49.1 L280.6 49.5 L280.7 50 L280.9 50.5 L280.9 50.9 L280.9 51.4 L280.8 51.9 L280.7 52.4 L280.4 53 L279.8 53.8 L279 54.1 L278.1 54.1 L277.5 53.9 L277 53.7 L276.6 53.5 L276.1 53.3 L275.7 53 L275.3 52.7 L274.9 52.4 L274.5 52.1 L274.1 51.8 L273.7 51.5 L273.4 51.2 L273.3 50.9 L273.2 50.7 L273.3 50.3 L273.4 49.9 L273.5 49.6 L273.4 49.1 L273.2 48.7 L273 48.2 L272.8 47.8 L272.6 47.3 L272.4 46.9 L272.2 46.5 L271.9 46.1 L271.6 45.7 L271.3 45.3 L270.9 44.9 L270.6 44.6 L270.2 44.3 L269.8 44 L269.4 43.7 L268.9 43.5 L268.4 43.3 L267.9 43.2 L267.4 43.1 L266.9 43 L266.4 42.9 L265.9 42.9 L265.4 42.9 L264.9 43 L264.4 43 L263.9 43.1 L263.4 43.2 L262.9 43.3 L262.4 43.5 L261.9 43.6 L261.4 43.7 L260.9 43.8 L260.4 43.9 L259.9 44 L259.4 44.1 L259 44.2 L258.5 44.2 L258 44.3 L257.5 44.2 L257 44.2 L256.5 44.1 L256 44 L255.5 43.8 L255.1 43.6 L254.6 43.4 L254.4 43.3 L254.3 43.1 L254.2 43.1 L254.1 43 L253.7 42.8 L253.2 42.6 L252.8 42.3 L252.4 42 L252 41.7 L251.6 41.4 L251.3 41 L250.9 40.7 L250.6 40.3 L250.3 39.9 L250 39.5 L249.7 39.1 L249.4 38.6 L249.2 38.2 L248.9 37.8 L248.6 37.4 L248.3 37 L248 36.7 L247.7 36.3 L247.3 36 L246.9 35.7 L246.2 35.3 L245.4 35.1 L244.5 35 L243.6 35.1 L242.8 35.3 L242.3 35.4 L241.9 35.5 L241.4 35.8 L241 36 L240.5 36.3 L240.2 36.6 L239.8 37 L239.4 37.3 L239.1 37.7 L238.9 38.2 L238.6 38.6 L238.3 39.1 L238 39.5 L237.7 40 L237.5 40.5 L237.3 41.1 L237.3 41.7 L237.3 42.2 L237.2 42.7 L237.2 43.2 L237.1 43.7 L237 44.2 L236.8 44.6 L236.7 45.1 L236.5 45.6 L236.3 46 L236 46.5 L235.8 46.9 L235.5 47.3 L235.1 47.7 L234.8 48 L234.4 48.3 L234 48.6 L233.6 48.9 L233.1 49.2 L232.7 49.4 L232.2 49.5 L231.8 49.7 L231.3 49.8 L230.9 50 L230.4 50.1 L229.9 50.2 L229.4 50.4 L229 50.5 L228.5 50.6 L228 50.7 L227.6 50.9 L227.2 51.1 L226.9 51.4 L226.6 51.7 L226.4 52.1 L226.2 52.4 L226 52.9 L225.9 53.4 L225.8 53.9 L225.8 54.5 L225.7 55 L225.7 55.3M201.1 6.9 L201.2 7.3 L201.2 7.7 L201.2 8.1 L201.2 8.6 L201.2 9.1 L201.1 9.6 L201.1 10.1 L201.1 10.7 L201.2 11.2 L201.4 11.6 L201.7 12 L202.1 12.2 L202.6 12.4 L203 12.6 L203.5 12.8 L204 13 L204.4 13.2 L204.9 13.4 L205.3 13.7 L205.7 14 L206 14.4 L206.3 14.8 L206.4 15.3 L206.6 15.8 L206.6 16.3 L206.6 16.8 L206.5 17.3 L206.3 17.8 L206.1 18.2 L206 18.7 L205.8 19.2 L205.7 19.7 L205.6 20.1 L205.5 20.6 L205.5 21.1 L205.6 21.6 L205.7 22.1 L205.8 22.6 L206.1 23 L206.3 23.5 L206.6 23.9 L207 24.2 L207.3 24.6 L207.7 24.9 L208.1 25.2 L208.4 25.6 L208.8 25.9 L209.1 26.3 L209.4 26.8 L209.7 27.5 L209.6 28.3 L209.1 28.9 L208.7 29.3 L208.3 29.6 L207.8 29.8 L207.4 30 L206.9 30.2 L206.4 30.3 L205.9 30.4 L205.4 30.6 L205 30.8 L204.6 31 L204.2 31.4 L203.9 31.7 L203.6 32.2 L203.4 32.7 L203.3 33.1 L203.3 33.6 L203.2 34.1 L203.2 34.6 L203.3 34.9 L203.4 35.1 L203.9 35.1 L204.3 35 L204.6 35 L205.1 35.2 L205.6 35.4 L206 35.6 L206.4 35.9 L206.7 36.3 L207 36.7 L207.2 37.2 L207.3 37.7 L207.3 38.2 L207.3 38.7 L207.2 39.2 L207.1 39.7 L206.9 40.1 L206.7 40.6 L206.5 41.1 L206.3 41.5 L206.1 42 L205.9 42.5 L205.8 42.9 L205.7 43.4 L205.7 43.9 L205.8 44.4 L206 44.9 L206.2 45.4 L206.5 45.8 L206.8 46.1 L207.3 46.4 L207.7 46.7 L208.2 46.8 L208.6 47.1 L209.1 47.3 L209.5 47.5 L210 47.7 L210.4 47.9 L210.9 48.1 L211.3 48.4 L211.7 48.6 L212.1 49 L212.5 49.3 L212.8 49.7 L213 50.2 L213.2 50.6 L213.3 51.1 L213.4 51.6 L213.4 52.1 L213.4 52.6 L213.4 53.1 L213.3 53.6 L213.3 54.1 L213.3 54.6 L213.4 55.3 L213.7 55.8 L214.3 56.1 L214.9 56.3 L215.4 56.4 L215.9 56.4 L216.4 56.3 L216.9 56.1 L217.3 55.9 L217.8 55.7 L218.2 55.5 L218.7 55.2 L219.1 55 L219.6 54.9 L220.1 54.8 L220.6 54.8 L221.1 54.9 L221.5 55.1 L222 55.3 L222.4 55.5 L222.8 55.9 L223.2 56.2 L223.6 56.5 L223.9 56.9 L224.2 57.3 L224.4 57.7 L224.7 58.1 L224.9 58.4 L225.1 58.6 L225.2 58.9 L225.4 59.2 L225.8 59.5 L226.3 59.7 L226.8 59.8 L227.3 59.9 L227.8 59.9 L228.3 59.8 L228.8 59.7 L229.2 59.5 L229.7 59.4 L230.2 59.2 L230.6 59 L231.1 58.9 L231.7 58.9 L232.5 59.1 L233.4 59.7 L233.9 60.6 L234.1 61.8 L234.1 62.6 L234.1 63.1 L234 63.6 L233.8 64.1 L233.5 64.5 L233.2 64.9 L232.8 65.2 L232.4 65.5 L231.9 65.8 L231.5 66 L231.1 66.2 L230.6 66.5 L230.2 66.7 L229.8 67 L229.4 67.3 L229 67.7 L228.7 68.1 L228.5 68.5 L228.3 69 L228.2 69.5 L228.2 70 L228.2 70.5 L228.3 70.9 L228.5 71.4 L228.8 71.8 L229.1 72.2 L229.4 72.6 L229.7 73 L230.1 73.3 L230.5 73.7 L230.8 74 L231.2 74.4 L231.5 74.7 L231.8 75.1 L232 75.6 L232.2 76 L232.3 76.5 L232.3 77 L232.2 77.5 L232.1 78 L231.9 78.5 L231.6 79 L231.3 79.5 L231 80 L230.5 80.5 L230.1 80.8 L229.6 81.1 L229.2 81.4 L228.8 81.7 L228.4 82 L228.1 82.4 L227.8 82.8 L227.6 83.2 L227.4 83.7 L227.3 84.2 L227.3 84.7 L227.3 85.2 L227.4 85.7 L227.5 86.2 L227.6 86.7 L227.7 87.2 L227.8 87.6 L227.9 88.1 L227.9 88.6 L227.8 89.1 L227.7 89.6 L227.5 90.1 L227.3 90.5 L227 90.9 L226.6 91.2 L226.1 91.5 L225.7 91.7 L225.2 91.8 L224.7 91.9 L224.2 92 L223.7 92.2 L223.2 92.3 L222.8 92.4 L222.3 92.6 L221.9 92.9 L221.5 93.2 L221.1 93.5 L220.8 93.9 L220.6 94.3 L220.4 94.8 L220.3 95.3 L220.3 95.8 L220.3 96.3 L220.5 96.6 L220.9 96.9 L221.1 97.3 L221.1 97.6 L220.8 97.8 L220.4 98.1 L220 98.4 L219.5 98.6 L219.1 98.8 L218.7 99 L218.2 99.2 L217.7 99.3 L217.2 99.4 L216.7 99.4 L216.2 99.4 L215.7 99.3 L215.2 99.2 L214.8 99 L214.3 98.8 L213.9 98.5 L213.4 98.3 L213 98 L212.5 97.8 L211.9 97.5 L211.4 97.7 L210.9 98.1 L210.4 98.4 L210 98.7 L209.6 99.1 L209.3 99.5 L209.1 99.9 L209 100.4 L209 100.9 L209 101.4 L209.1 101.9 L209.2 102.4 L209.4 102.9 L209.6 103.3 L209.6 103.8 L209.6 104.4 L209.4 105.2 L209 105.8 L208.2 106.1 L207.5 106.3 L207 106.4 L206.5 106.4 L206 106.4 L205.5 106.3 L205.1 106.2 L204.6 106 L204.1 105.8 L203.8 105.5 L203.4 105.2 L202.9 105.2 L202.5 105.4 L202.1 105.7 L201.7 106.1 L201.4 106.4 L201.1 106.8 L200.8 107.2 L200.6 107.7 L200.5 108.2 L200.4 108.7 L200.4 109.2 L200.4 109.7 L200.5 110.2 L200.6 110.7 L200.7 111.2 L200.8 111.6 L200.9 111.9 L201.1 112.2 L201.4 112.5 L201.7 112.7 L202 113.2 L202.2 113.6 L202.4 114 L202.6 114.5 L202.7 115 L202.8 115.5 L202.9 116 L202.9 116.5 L202.8 117 L202.7 117.5 L202.6 118 L202.5 118.5 L202.4 119 L202.2 119.5 L202 119.9 L201.6 120.2 L201.1 120.2 L200.6 120.2 L200.2 120.3 L199.7 120.5 L199.3 120.7 L198.9 121 L198.5 121.4 L198.3 121.8 L198.1 122.3 L198.1 122.8 L198.1 123.3 L198.1 123.8 L198.2 124.3 L198.4 124.8 L198.5 125.2 L198.7 125.7 L198.8 126.2 L198.9 126.7 L199 127.2 L198.9 127.7 L198.8 128.1 L198.6 128.6 L198.5 128.6 L198.3 128.5 L198.4 128.4 L198.3 128.4 L198.2 128.9 L198.1 129.4 L198 129.8 L197.7 130.3 L197.5 130.7 L197.2 131.1 L196.9 131.6 L196.7 132 L196.4 132.4 L196.2 132.9 L196 133.3 L195.9 133.8 L195.7 134.3 L195.7 134.8 L195.7 135.3 L195.8 135.5 L195.9 135.4 L196.1 135.2 L196.2 135.2 L196.1 135.4 L195.9 135.9 L195.8 136.4 L195.7 136.9 L195.6 137.4 L195.5 137.9 L195.5 138.4 L195.4 138.9 L195.4 139.3 L195.3 139.8 L195.1 140.3 L194.9 140.8 L194.7 141.2 L194.4 141.6 L194.1 142 L193.8 142.3 L193.3 142.6 L192.9 142.8 L192.4 143 L192 143.1 L191.6 143 L191.2 142.9 L190.8 142.9 L190.4 142.9 L190 143.1 L189.5 143.3 L189.1 143.5 L188.6 143.7 L188.2 144 L187.8 144.3 L187.5 144.7 L187.2 145.1 L186.9 145.5 L186.7 146 L186.6 146.4 L186.5 146.9 L186.6 147.4 L186.6 148 L186.7 148.6 L186.8 149 L187.4 149.2 L187.9 149.3 L188.3 149.4 L188.8 149.5 L189.3 149.7 L189.7 149.9 L190.1 150.1 L190.5 150.4 L190.9 150.8 L191.2 151.2 L191.5 151.6 L191.6 152.1 L192 152.9 L192.1 153.8 L191.7 154.4 L191.1 154.9 L190.6 155.1 L190.1 155.3 L189.6 155.5 L189.2 155.7 L188.8 156 L188.4 156.4 L188.1 156.8 L187.8 157.2 L187.6 157.6 L187.5 158.1 L187.4 158.6 L187.3 159.1 L187.3 159.6 L187.3 160.1 L187.3 160.6 L187.4 161.1 L187.3 161.6 L187.3 162.1 L187.3 162.6 L187.2 163.1 L187 163.5 L186.8 164 L186.5 164.4 L186.2 164.7 L185.8 165.1 L185.3 165.3 L184.9 165.6 L184.4 165.8 L184 166.1 L183.5 166.3 L183 166.5 L182.5 166.7 L182.1 166.9 L181.7 167.2 L181.4 167.6 L181.1 168 L181 168.5 L180.9 169 L180.8 169.5 L180.8 170 L180.8 170.5 L180.7 171 L180.6 171.4 L180.4 171.9 L180.2 172.3 L179.9 172.7 L179.6 173.1 L179.1 173.4 L178.7 173.6 L178.2 173.8 L177.7 173.8 L177.2 173.9 L176.7 173.9 L176.2 173.8 L175.7 173.7 L175.2 173.7 L174.7 173.7 L174.2 173.7 L173.7 173.7 L173.2 173.9 L172.8 174 L172.3 174.3 L171.9 174.5 L171.5 174.8 L171 175.3 L170.7 175.8 L170.8 176.3 L171.1 176.8 L171.5 177.2 L171.9 177.5 L172.2 177.8 L172.6 178.1 L173 178.4 L173.4 178.7 L173.8 179 L174.2 179.3 L174.6 179.7 L174.9 180.1 L175.1 180.5 L175.3 180.9 L175.5 181.4 L175.6 182.3 L175.6 183.4 L175.1 184.3 L174.3 184.8 L173.7 185.1 L173.2 185.1 L172.7 185.2 L172.2 185.1 L171.7 185.1 L171.2 185.2 L170.7 185.3 L170.3 185.6 L169.9 185.9 L169.5 186.3 L169.3 186.7 L169.2 187.2 L169.1 187.7 L169.1 188.2 L169.1 188.7 L169.2 189.2 L169.2 189.6 L169.2 190.1 L169.2 190.6 L169.1 191.1 L168.9 191.6 L168.6 192 L168.3 192.3 L167.9 192.6 L167.4 192.8 L166.9 192.9 L166.4 192.9 L165.9 192.9 L165.4 192.8 L164.9 192.8 L164.4 192.8 L163.9 192.8 L163.4 192.9 L162.9 193.1 L162.5 193.4 L162.2 193.7 L161.8 194.1 L161.6 194.5 L161.3 195 L161.1 195.5 L161 195.9 L160.9 196.4 L160.9 196.9 L160.8 197.4 L160.8 197.9 L160.8 198.4 L160.8 198.9 L160.8 199.4 L160.7 199.9 L160.7 200.4 L160.6 200.9 L160.4 201.4 L160.3 201.8 L160 202.3 L159.7 202.7 L159.4 203 L159.1 203.4 L158.7 203.6 L158.4 203.5 L158 203.4 L157.7 203.5 L157.4 203.6 L157.1 203.9 L156.9 204.3 L156.6 204.7 L156.5 205.2 L156.4 205.7 L156.4 206.2 L156.4 206.7 L156.6 207.2 L156.8 207.6 L157.1 208 L157.5 208.4 L157.8 208.7 L158.2 209.1 L158.6 209.4 L158.9 209.8 L159.2 210.1 L159.5 210.6 L159.6 211 L159.7 211.5 L159.8 212 L159.7 212.5 L159.5 213 L159.3 213.5 L159.1 213.9 L158.9 214.3 L158.6 214.8 L158.3 215.2 L158.1 215.7 L158 216.1 L158 216.6 L158.1 217.1 L158.3 217.6 L158.5 218 L158.8 218.4 L159.2 218.7 L159.6 219 L160.1 219.2 L160.5 219.5 L160.9 219.7 L161.4 219.9 L161.8 220.1 L162.3 220.4 L162.7 220.6 L163.1 220.9 L163.4 221.2 L163.7 221.6 L164 222 L164.2 222.5 L164.3 223 L164.4 223.5 L164.4 224 L164.2 224.5 L164 224.9 L163.9 225.6 L163.6 226.7 L163.1 227.5 L162.5 228.1 L161.6 228.2 L160.8 228 L160.3 227.7 L159.9 227.4 L159.5 227.1 L159 226.8 L158.6 226.6 L158.1 226.5 L157.6 226.5 L157.1 226.6 L156.6 226.8 L156.3 227.1 L156 227.5 L155.7 228 L155.5 228.4 L155.3 228.9 L154.9 229.2 L154.8 229.5 L154.6 229.6 L154.6 229.9 L154.6 230.2 L154.4 230.5 L154.1 230.9 L153.7 231.2 L153.3 231.5 L152.9 231.8 L152.5 232 L152 232.2 L151.5 232.4 L151 232.5 L150.5 232.6 L150 232.6 L149.5 232.7 L149 232.8 L148.5 232.8 L148.1 232.9 L147.6 233 L147.1 233.2 L146.6 233.3 L146.2 233.6 L145.9 234 L145.7 234.4 L145.4 234.9 L145.2 235.4 L145 235.9 L144.8 236.4 L144.7 236.8 L144.5 237.2 L144.3 237.6 L144.1 237.9 L144 238M144.1 238.2 L144.2 238.3 L144.3 238.4 L144.4 238.4 L144.5 238.4 L144.5 238.4 L144.6 238.4 L144.7 238.4 L144.9 238.4 L145.2 238.5 L145.6 238.5 L146.2 238.7 L146.9 238.8 L147.6 238.9 L148.4 239.1 L149 239.4 L149.5 239.6 L149.9 239.9 L150 240.2 L149.9 240.5 L149.6 240.8 L149.2 241.1 L148.8 241.4 L148.3 241.6 L147.9 241.9 L147.4 242.1 L147 242.4 L146.6 242.7 L146.3 243.1 L146 243.5 L145.8 243.9 L145.8 244.4 L145.8 244.9 L145.9 245.2 L146.2 245.2 L146.4 245.1 L146.5 245.3 L146.6 245.7 L146.8 246.2 L147 246.6 L147.3 247 L147.7 247.3 L148 247.7 L148.4 248 L148.8 248.3 L149.3 248.5 L149.9 248.5 L150.5 248.5 L151 248.7 L151.3 249.1 L151.2 249.8 L150.8 250.7 L150.8 251.2 L150.7 251.7 L150.4 252.1 L150 252.4 L149.5 252.6 L149 252.7 L148.5 252.6 L148 252.5 L147.5 252.2 L147.2 251.9 L146.8 251.5 L146.6 251 L146.3 250.5 L146.1 250.1 L146 249.6 L145.8 249.1 L145.6 248.6 L145.4 248.2 L145.1 247.8 L144.8 247.4 L144.4 247.1 L144 246.9 L143.5 246.8 L143 246.8 L142.5 246.9 L142.1 247.2 L141.8 247.5 L141.5 248 L141.4 248.5 L141.5 249 L141.6 249.5 L141.8 249.9 L142.1 250.3 L142.5 250.7 L142.9 250.9 L143.3 251.2 L143.8 251.4 L144.2 251.7 L144.6 251.9 L144.9 252.3 L145.1 252.7 L145.2 253.2 L145 253.7 L144.7 254 L144.2 254.2 L143.7 254.2 L143.2 254 L142.9 253.6 L142.6 253.2 L142.4 252.7 L142.2 252.2 L142 251.8 L141.8 251.3 L141.4 251 L141 250.7 L140.5 250.7 L140 250.8 L139.6 251.1 L139.3 251.5 L139.1 251.8 L139 252.2 L138.8 252.4 L138.4 252.5 L137.9 252.6 L137.5 252.9 L137.1 253.1 L136.7 253.4 L136.3 253.8 L136 254.1 L135.7 254.5 L135.4 254.9 L135.1 255.2 L134.8 255.6 L134.4 255.9 L134.1 256.2 L133.7 256.5 L133.3 256.7 L132.8 256.9 L132.4 257 L131.9 257 L131.4 256.9 L131 256.8 L130.5 256.5 L130.1 256.2 L129.8 255.8 L129.6 255.4 L129.4 254.9 L129.3 254.4 L129.3 253.8 L129.3 253.3 L129.7 253 L130.2 252.6 L130.6 252.2 L131 251.8 L131.2 251.3 L131.3 250.8 L131.4 250.3 L131.5 249.9 L131.7 249.4 L131.9 248.9 L131.9 248.4 L131.8 247.8 L131.5 247.3 L130.9 247.3 L130.2 247.7 L129.7 248.2 L129.3 248.6 L129.1 249 L129 249.5 L128.9 250 L129 250.5 L129.2 251 L129.4 251.4 L129.7 251.8 L130.1 252.2 L130.5 252.5 L130.9 252.7 L131.4 252.9 L131.8 253.1 L132.3 253.2 L132.7 253.4 L133.2 253.6 L133.6 253.7 L134 254 L134.4 254.2 L134.8 254.5 L135.1 254.9 L135.3 255.3 L135.5 255.8 L135.5 256.2 L135.5 256.7 L135.4 257.2 L135.1 257.6 L134.8 258 L134.4 258.3 L133.9 258.6 L133.4 258.7 L132.9 258.8 L132.3 258.7 L131.8 258.6 L131.3 258.7 L130.8 258.8 L130.3 258.8 L129.8 258.8 L129.3 258.8 L128.8 258.8 L128.3 258.9 L127.8 259 L127.3 259.2 L126.9 259.5 L126.5 259.8 L126.1 260.1 L125.9 260.6 L125.7 261 L125.6 261.5 L125.6 262 L125.7 262.5 L125.8 263 L126 263.4 L126.3 263.9 L126.5 264.3 L126.8 264.6 L127.2 265 L127.5 265.4 L127.8 265.7 L128.1 265.9 L128.4 266.1 L128.7 266.2 L129 266.4 L129.3 266.4 L129.3 266.9 L129.4 267.4 L129.3 267.9 L129.1 268.3 L128.8 268.8 L128.5 269.2 L128.1 269.5 L127.7 269.8 L127.2 270 L126.7 270.1 L126.2 270.3 L125.7 270.4 L125.2 270.5 L124.7 270.6 L124.2 270.8 L123.8 271 L123.4 271.2 L123 271.5 L122.6 271.8 L122.3 272.2 L122.2 272.7 L122.2 273.2 L122.5 273.7 L122.8 274 L123.3 274.2 L123.7 274.4 L124.2 274.4 L124.7 274.5 L125.2 274.5 L125.7 274.6 L126.1 274.8 L126.5 275.1 L126.8 275.5 L126.9 276 L126.8 276.5 L126.6 276.9 L126.2 277.3 L125.7 277.5 L125.2 277.7 L124.8 277.9 L124.3 278.1 L123.8 278.2 L123.3 278 L122.9 277.8 L122.4 277.7 L121.9 277.6 L121.4 277.6 L120.9 277.7 L120.6 278 L120.3 278.4 L120.1 278.9 L120 279.4 L119.9 279.8 L119.9 280.3 L120 280.8 L120.2 281.3 L120.4 281.8 L120.7 282.2 L121.1 282.5 L121.4 282.9 L121.8 283.2 L122.3 283.4 L122.7 283.7 L123.1 283.9 L123.6 284.2 L124 284.4 L124.4 284.8 L124.7 285.1 L124.9 285.6 L125.1 286 L125.1 286.5 L124.9 287 L124.7 287.5 L124.3 287.8 L123.9 288.1 L123.5 288.4 L123 288.5 L122.5 288.7 L122.1 288.9 L121.6 289.1 L121.2 289.4 L120.9 289.8 L120.6 290 L120.7 290.1 L120.7 290.1 L120.6 290.3 L120.4 290.6 L120.2 291.1 L120.1 291.6 L120 292 L120.3 292.4 L120.6 292.8 L120.9 293.2 L121.1 293.7 L121.2 294.1 L121.2 294.6 L121 295.1 L120.7 295.5 L120.3 295.7 L119.8 295.8 L119.3 295.6 L118.8 295.4 L118.5 295 L118.3 294.5 L118.2 294 L118.1 293.5 L118.1 293 L118 292.5 L118 292 L117.8 291.6 L117.6 291.1 L117.2 290.8 L116.8 290.5 L116.3 290.5 L115.8 290.6 L115.4 290.9 L115.1 291.3 L115 291.8 L115 292.3 L114.9 292.8 L114.8 293.3 L114.8 293.8 L114.8 294.3 L114.8 294.8 L114.8 295.3 L114.8 295.8 L114.8 296.3 L114.7 296.8 L115 297.2 L115.1 297.6 L115.1 298.1 L115 298.6 L114.7 299 L114.8 299.1 L114.7 299 L114.7 298.9 L114.5 298.6 L114.1 298.4 L113.7 298.1 L113.3 297.7 L113 297.3 L112.8 296.9 L112.5 296.5 L112.3 296 L112.1 295.5 L111.9 295.1 L111.7 294.6 L111.4 294.2 L111 293.9 L110.5 293.8 L109.9 293.9 L109.4 294 L109 294.3 L108.7 294.7 L108.5 295.2 L108.5 295.7 L108.6 296.2 L108.8 296.6 L109.2 297 L109.5 297.4 L110 297.6 L110.4 297.8 L110.9 298 L111.3 298.2 L111.8 298.4 L112.2 298.7 L112.6 298.9 L112.9 299.3 L113 299.8 L113 300.3 L112.9 300.7 L112.6 301.1 L112.2 301.4 L111.7 301.5 L111.2 301.5 L110.7 301.4 L110.2 301.1 L109.8 300.8 L109.5 300.4 L109.2 300 L108.9 299.6 L108.6 299.2 L108.4 298.8 L108.1 298.4 L107.7 298.1 L107.2 297.8 L106.8 297.7 L106.3 297.7 L105.8 297.8 L105.4 298.1 L105 298.4 L104.8 298.9 L104.7 299.4 L104.7 299.9 L104.9 300.4 L105.1 300.8 L105.4 301.2 L105.8 301.5 L106.2 301.8 L106.7 302 L107.1 302.2 L107.6 302.4 L108 302.6 L108.4 302.8 L108.8 303.1 L109.2 303.4 L109.5 303.8 L109.7 304.2 L109.7 304.7 L109.7 305.2 L109.5 305.6 L109.2 306 L108.8 306.3 L108.3 306.5 L107.8 306.6 L107.3 306.6 L106.8 306.5 L106.3 306.3 L105.8 306.1 L105.3 305.9 L104.9 305.6 L104.5 305.3 L104 305.1 L103.5 304.9 L103.1 304.8 L102.6 304.7 L102.1 304.7 L101.6 304.8 L101.1 305 L100.7 305.4 L100.4 305.8 L100.2 306.2 L100.1 306.7 L100.1 307.2 L100.1 307.7 L100.2 308.2 L100.4 308.7 L100.6 309.1 L100.7 309.6 L100.9 310 L101 310.5 L101 311 L100.9 311.5 L100.9 311.8 L101.3 311.3 L101.4 310.5 L101.5 309.8 L101.2 309.3 L101 309.8 L100.7 310.2 L100.4 310.6 L100 310.9 L99.6 311.2 L99.2 311.5 L98.8 311.8 L98.4 312.2 L98.1 312.6 L97.9 313 L97.8 313.5 L97.8 314 L97.9 314.5 L98.1 315 L98.4 315.4 L98.7 315.8 L99.1 316.1 L99.5 316.3 L100 316.5 L100.5 316.7 L100.9 316.8 L101.4 316.9 L101.9 317 L102.3 317.2 L102.8 317.4 L103.3 318.3 L103.7 319.6 L103.5 321.1 L102.7 322.5 L101.9 323.3 L101.5 323.6 L101 323.8 L100.5 323.9 L100 324 L99.5 324 L99 323.9 L98.5 323.8 L98 323.6 L97.5 323.5 L97.1 323.3 L96.7 323 L96.2 322.7 L95.8 322.6 L95.3 322.6 L94.8 322.8 L94.5 323.2 L94.3 323.6 L94.2 324.1 L94.3 324.6 L94.6 325 L94.9 325.4 L95.3 325.7 L95.7 326 L96 326.3 L96.4 326.7 L96.7 327 L96.9 327.5 L97.1 327.9 L97.1 328.4 L97 328.9 L96.7 329.3 L96.3 329.6 L95.9 329.8 L95.4 329.9 L94.8 329.8 L94.4 329.6 L93.9 329.4 L93.5 329 L93.2 328.6 L92.9 328.2 L92.6 327.8 L92.2 327.5 L91.9 327.1 L91.5 326.8 L91 326.7 L90.5 326.7 L90 326.8 L89.5 326.9 L89 327.2 L88.5 327.7 L88 328.3 L87.9 329.1 L88 329.8 L88.2 330.2 L88.6 330.6 L89 330.9 L89.4 331.2 L89.9 331.3 L90.3 331.5 L90.8 331.6 L91.3 331.8 L91.7 331.9 L92.2 332.2 L92.6 332.4 L92.9 332.8 L93.1 333.2 L93.2 333.7 L93.2 334.2 L93 334.7 L92.7 335.1 L92.4 335.5 L91.9 335.7 L91.4 335.9 L90.9 335.9 L90.4 335.9 L89.9 335.9 L89.4 335.9 L88.9 335.8 L88.4 335.8 L87.9 335.8 L87.4 335.9 L86.9 336 L86.5 336.2 L86.1 336.5 L85.8 336.9 L85.5 337.3 L85.3 337.8 L85.3 338.3 L85.3 338.8 L85.5 339.3 L85.7 339.7 L86 340.1 L86.4 340.4 L86.8 340.7 L87.2 341 L87.7 341.2 L88.1 341.4 L88.6 341.6 L89 341.9 L89.5 342.1 L89.9 342.4 L90.3 342.7 L90.6 343.2 L90.7 343.7 L90.8 344.4 L90.6 345.1 L90.6 345.6 L90.5 346.1 L90.2 346.5 L89.9 346.9 L89.5 347.2 L89 347.4 L88.5 347.6 L88 347.6 L87.5 347.6 L87 347.5 L86.5 347.5 L86 347.4 L85.5 347.4 L85 347.4 L84.5 347.3 L84 347.2 L83.5 347.2 L83 347.2 L82.5 347.2 L82 347.2 L81.5 347.3 L81 347.4 L80.5 347.5 L80.1 347.8 L79.7 348 L79.3 348.3 L79 348.7 L78.7 349.1 L78.5 349.6 L78.3 350.1 L78.2 350.5 L78.1 351 L78.1 351.5 L78.2 352.1 L78.3 352.5 L78.4 353 L78.6 353.5 L78.8 354 L79 354.4 L79.2 354.9 L79.4 355.3 L79.6 355.8 L79.8 356.2 L79.9 356.7 L80 357.1 L80.1 357.6 L80.1 358.1 L80.1 358.6 L80 359.1 L79.9 359.6 L79.7 360 L79.4 360.4 L79.3 360.4 L79.2 360.1 L79.1 359.9 L78.9 359.7 L78.6 359.9 L78.3 360.2 L77.9 360.6 L77.5 360.9 L77.1 361.2 L76.7 361.4 L76.2 361.7 L75.8 362 L75.4 362.2 L74.9 362.5 L74.5 362.8 L74.2 363.1 L73.8 363.5 L73.4 363.7 L73 364 L72.8 364.5 L72.8 365 L73 365.4 L73.4 365.8 L73.9 365.9 L74.4 366 L74.9 365.9 L75.4 365.8 L75.8 365.7 L76.3 365.5 L76.8 365.5 L77.3 365.6 L77.7 365.9 L78 366.3 L78.1 366.8 L78 367.3 L77.7 367.7 L77.2 367.9 L76.7 368 L76.2 368 L75.7 367.9 L75.3 367.8 L74.8 367.7 L74.3 367.6 L73.8 367.6 L73.3 367.8 L73 368.1 L72.7 368.5 L72.5 369 L72.5 369.5 L72.7 370 L73 370.4 L73.4 370.7 L73.8 370.9 L74.3 371 L74.8 371 L75.3 370.9 L75.8 370.8 L76.3 370.7 L76.8 370.6 L77.3 370.6 L77.8 370.6 L78.2 370.7 L78.7 370.9 L79 371.2 L79.3 371.6 L79.4 372.1 L79.3 372.6 L79.1 373.1 L78.8 373.5 L78.4 373.8 L77.9 373.9 L77.4 374 L76.9 374 L76.4 373.9 L75.9 373.8 L75.4 373.7 L74.9 373.6 L74.4 373.7 L74 373.8 L73.5 374.1 L73.2 374.4 L73 374.9 L73 375.4 L73.2 375.9 L73.6 376.3 L74 376.5 L74.5 376.7 L75 376.7 L75.5 376.7 L76 376.7 L76.5 376.7 L76.9 376.8 L77.4 377 L77.7 377.4 L77.9 377.4 L77.9 377.3 L77.8 377.1 L77.7 377.1 L77.7 377.5 L77.7 378 L77.7 378.5 L77.6 379 L77.5 379.5 L77.3 380 L77.2 380.5 L77.1 381 L77.1 381.5 L77.1 382 L77.2 382.5 L77.4 382.9 L77.7 383.3 L78 383.7 L78.5 383.9 L78.9 384.1 L79.4 384.2 L79.9 384.2 L80.4 384.1 L80.7 383.7 L80.9 383.2 L81.1 382.8 L81.3 382.3 L81.5 381.9 L81.9 381.6 L82.3 381.3 L82.8 381.3 L83.3 381.4 L83.7 381.7 L84 382.1 L84.1 382.6 L84.1 383.2 L83.9 383.7 L83.5 384.1 L83.1 384.3 L82.6 384.5 L82.1 384.6 L81.6 384.8 L81.2 385.1 L80.8 385.4 L80.4 385.7 L80.3 386.2 L80.2 386.6 L80.2 386.9 L80.3 387 L80.4 387.1 L80.7 387.2 L81.2 387.3 L81.7 387.3 L82.2 387.1 L82.7 387 L83.1 386.8 L83.6 386.6 L84 386.4 L84.5 386.2 L84.9 385.9 L85.3 385.7 L85.8 385.5 L86.3 385.5 L86.8 385.6 L87.3 385.8 L87.7 385.9 L88.1 386.2 L88.5 386.5 L88.7 386.9 L88.9 387.4 L89 387.9 L88.9 388.4 L88.8 388.9 L88.5 389.4 L88.2 389.8 L87.8 390.1 L87.3 390.4 L86.9 390.6 L86.4 390.7 L85.9 390.8 L85.4 390.8 L84.9 390.8 L84.4 390.7 L83.9 390.7 L83.4 390.7 L82.9 390.7 L82.4 390.9 L82 391.2 L81.8 391.7 L81.8 392.2 L81.8 392.7 L81.9 393.1 L82.2 393.6 L82.5 394 L82.9 394.3 L83.3 394.5 L83.8 394.7 L84.3 394.8 L84.8 394.9 L85.3 395 L85.8 395.1 L86.3 395.2 L86.8 395.4 L87.3 395.7 L87.8 396.2 L88 396.8 L88.2 397.4 L88.2 398.3 L87.8 399.2 L87.6 399.7 L87.2 400 L86.7 400.2 L86.2 400.2 L85.7 400 L85.3 399.8 L84.9 399.4 L84.5 399.1 L84.2 398.7 L83.8 398.3 L83.4 398 L83 397.8 L82.6 397.5 L82.1 397.4 L81.6 397.4 L81.2 397.6 L80.8 397.9 L80.6 398.4 L80.7 398.9 L80.9 399.4 L81.2 399.7 L81.7 400 L82.1 400.2 L82.6 400.3 L83.1 400.5 L83.5 400.7 L83.9 401 L84.2 401.4 L84.3 401.9 L84.2 402.4 L83.9 402.8 L83.5 403.1 L82.9 403.1 L82.4 403 L82 402.8 L81.5 402.7 L81 402.5 L80.6 402.3 L80.1 402.1 L79.6 401.9 L79.2 401.8 L78.9 401.4 L78.5 401.1 L78 400.9 L77.6 400.8 L77.1 400.8 L76.6 401.1 L76.3 401.4 L76.1 401.9 L76 402.4 L76.1 402.9 L76.4 403.3 L76.7 403.7 L77.2 404 L77.6 404.2 L78.1 404.3 L78.6 404.5 L79.1 404.6 L79.5 404.7 L79.8 405.2 L80 405.6 L80.1 406.1 L80.2 406.6 L80.3 406.7 L80.5 406.2 L80.4 405.3 L80.2 404.8 L80.1 405 L80.2 405.5 L80.1 406 L80 406.5 L79.8 407 L79.6 407.4 L79.3 407.8 L79.1 408.3 L78.9 408.7 L78.7 409.2 L78.5 409.6 L78.4 410.1 L78.4 410.6 L78.6 411.1 L78.8 411.5 L79.1 411.9 L79.5 412.2 L79.7 412.1 L80 411.7 L80.4 411.3 L80.7 411.2 L81.1 411.2 L81.5 411.4 L81.9 411.7 L82.2 412 L82.5 412.4 L82.8 412.8 L83 413.3 L83.1 413.8 L83.1 414.3 L83 414.7 L82.8 415.2 L82.4 415.6 L82 415.8 L81.6 416 L81.1 416.1 L80.6 416.1 L80.1 416.1 L79.6 416 L79.1 416 L78.6 416 L78.1 416.1 L77.6 416.2 L77.2 416.4 L76.8 416.8 L76.5 417.2 L76.4 417.7 L76.3 418.2 L76.4 418.7 L76.6 419.1 L76.9 419.6 L77.2 420 L77.5 420.4 L77.8 420.8 L78.1 421.2 L78.3 421.6 L78.6 422 L78.8 422.4 L79 422.9 L79.1 423.4 L79.3 423.5 L79.7 422.7 L78.2 420 L76.4 419.3 L76.2 419.3 L76.7 419.3 L77.3 419.3 L77.7 419.5 L78.2 419.6 L78.7 419.8 L79.1 420.1 L79.5 420.4 L79.8 420.8 L80 421.3 L80.1 421.8 L80.2 422.3 L80.4 422.7 L80.5 423.2 L80.8 423.6 L81.1 424 L81.5 424.3 L81.9 424.5 L82.4 424.6 L82.9 424.6 L83.4 424.6 L83.9 424.4 L84.3 424.2 L84.5 423.9 L84 423.5 L83.3 422.5 L82.9 421.6 L83.2 421.3 L83.6 421.3 L84 421.5 L84.4 421.8 L84.8 422.1 L85.2 422.4 L85.7 422.5 L86.2 422.6 L86.6 422.8 L87 423.1 L87.4 423.4 L87.6 423.9 L87.6 424.3 L87.6 424.8 L87.4 425.3 L87 425.7 L86.6 425.9 L86.1 426.2 L85.6 426.3 L85.1 426.3 L84.6 426.3 L84.1 426.2 L83.6 426.1 L83.1 426 L82.6 426.1 L82.2 426.2 L81.7 426.4 L81.4 426.8 L81.1 427.2 L81.1 427.7 L81.1 428.2 L81.4 428.7 L81.7 429 L82.1 429.4 L82.6 429.4 L83.1 429.4 L83.5 429.4 L84 429.4 L84.5 429.5 L84.9 429.8 L85.2 430.1 L85.3 430.6 L85.2 431.1 L85 431.5 L84.5 431.8 L84 431.8 L83.5 431.8 L83 431.5 L82.6 431.3 L82.2 431 L81.8 430.7 L81.4 430.4 L80.9 430.3 L80.4 430.3 L80 430.5 L79.6 430.8 L79.5 431.3 L79.5 431.8 L79.8 432.2 L80.2 432.5 L80.6 432.7 L81.1 433 L81.4 433.3 L81.8 433.7 L82.1 434 L82.5 434.3 L82.8 434.7 L83.1 435.1 L83.4 435.5 L83.7 435.8 L84 435.9 L84.2 435.9 L84.5 435.8 L84.7 435.7 L84.8 435.9 L84.9 436.4 L85 436.9 L84.9 437.4 L84.8 437.9 L84.6 438.4 L84.3 438.8 L83.8 439 L83.3 439.1 L82.8 439.1 L82.3 439.1 L81.8 439 L81.3 438.9 L80.8 438.8 L80.3 438.7 L79.8 438.7 L79.3 438.8 L78.9 438.9 L78.4 439.1 L78.1 439.5 L77.8 439.9 L77.7 440.3 L77.7 440.8 L77.8 441.3 L78.1 441.7 L78.5 442.1 L78.9 442.3 L79.4 442.4 L79.9 442.4 L80.4 442.3 L80.9 442.1 L81.4 441.9 L81.8 441.6 L82.2 441.4 L82.6 441.1 L83 440.8 L83.5 440.6 L83.9 440.5 L84.4 440.4 L84.9 440.5 L85.3 440.6 L85.7 440.9 L86 441.4 L86 441.9 L85.9 442.4 L85.6 442.8 L85.2 443.1 L84.7 443.3 L84.2 443.4 L83.7 443.4 L83.2 443.4 L82.7 443.4 L82.2 443.4 L81.7 443.5 L81.3 443.8 L80.9 444.2 L80.7 444.6 L80.7 445.1 L80.9 445.6 L81.3 445.9 L81.7 446.2 L82.2 446.3 L82.7 446.2 L83.2 446.1 L83.6 445.9 L84.1 445.7 L84.5 445.5 L85 445.6 L85.5 445.7 L85.9 445.9 L86.2 446.1 L86.1 445.5 L85.5 444.9 L85 444.4 L84.4 444.3 L84.7 444.8 L84.8 445.3 L84.7 445.8 L84.5 446.2 L84.3 446.7 L84 447.1 L83.7 447.6 L83.5 448 L83.4 448.5 L83.3 449 L83.3 449.5 L83.5 449.9 L83.8 450.3 L84.3 450.5 L84.8 450.6 L85.3 450.5 L85.7 450.3 L86.1 450 L86.3 449.5 L86.5 449 L86.7 448.6 L86.9 448.2 L87.1 447.7 L87.3 447.3 L87.5 446.8 L87.7 446.4 L87.9 445.9 L88.1 445.5 L88.4 445.1 L88.7 444.8 L89.1 444.4 L89.5 444.2 L90 444 L90.4 443.9 L90.9 443.9 L91.4 443.9 L92.4 444.2 L95 445.8 L96.8 449.4 L96.1 452.5 L95 454 L94.5 454.1 L94 454.1 L93.5 454.1 L92.9 454 L92.5 453.8 L92 453.6 L91.5 453.4 L91.1 453.2 L90.6 453 L90.1 452.8 L89.7 452.5 L89.2 452.4 L88.8 452.2 L88.3 452.1 L87.8 452.1 L87.3 452 L86.8 452 L86.3 452.1 L85.9 452.2 L85.5 452.5 L85.1 452.9 L84.9 453.3 L84.8 453.8 L84.8 454.3 L84.8 454.8 L85 455.3 L85.3 455.7 L85.6 456.1 L86 456.4 L86.5 456.7 L86.9 456.9 L87.4 457.1 L87.8 457.2 L88.3 457.4 L88.8 457.5 L89.3 457.7 L89.7 457.8 L90.1 458 L90.6 458.3 L90.9 458.6 L91.2 459 L91.4 459.4 L91.4 459.9 L91.3 460.4 L91.1 460.8 L90.8 461.2 L90.4 461.5 L89.9 461.7 L89.5 461.7 L89.2 461.2 L88.8 460.7 L88.3 460.5 L87.8 460.4 L87.4 460.3 L86.9 460.1 L86.4 459.9 L86 459.7 L85.6 459.5 L85.1 459.3 L84.6 459.2 L84 459.4 L83.4 460 L83.5 460.9 L84 461.8 L84.6 462.3 L85 462.5 L85.5 462.6 L86 462.5 L86.5 462.3 L86.9 462.1 L87.3 461.8 L87.6 461.4 L87.9 461 L88.2 460.6 L88.4 460.1 L88.7 459.7 L89 459.3 L89.3 459 L89.7 458.7 L90.1 458.5 L90.6 458.4 L91.1 458.5 L91.5 458.6 L91.9 459 L92.2 459.3 L92.5 459.8 L92.6 460.3 L92.7 460.8 L92.7 461.3 L92.6 461.8 L92.5 462.3 L92.4 462.8 L92.2 463.3 L92.1 463.8 L92 464.3 L91.9 464.8 L91.9 465.3 L91.9 465.8 L92 466.3 L92.2 466.7 L92.5 467.2 L92.8 467.5 L93.3 467.8 L93.7 468 L94.2 468.1 L94.7 468.1 L95.2 468 L95.7 467.9 L96.2 467.7 L96.6 467.5 L97 467.3 L97.5 467.1 L97.9 466.9 L98.4 466.8 L98.9 466.7 L99.4 466.6 L99.8 466.7 L100.3 466.8 L100.7 467 L101.1 467.4 L101.5 467.8 L101.6 468.3 L101.8 468.9 L102.1 469.9 L102.1 470.7 L101.7 471.1 L101.3 471.3 L100.7 471.4 L100.1 471.4 L99.5 471.5 L99 471.7 L98.6 471.9 L98.1 472.1 L97.7 472.3 L97.3 472.6 L96.9 472.9 L96.5 473.2 L96.2 473.6 L96 474 L95.9 474.5 L95.9 475 L95.7 475.1 L95 473.9 L94.9 471.5 L95.7 469.9 L96.1 469.7 L96.1 470.3 L96.1 470.8 L96.2 471.3 L96.4 471.7 L96.7 472.2 L97 472.6 L97.3 473 L97.6 473.3 L97.9 473.7 L98.2 474.1 L98.5 474.6 L98.6 475 L98.7 475.5 L98.6 476 L98.4 476.4 L98.1 476.8 L97.7 477.1 L97.2 477.2 L96.7 477.2 L96.2 477.2 L95.7 477.1 L95.2 477 L94.7 476.8 L94.3 476.5 L93.9 476.3 L93.5 476 L93.1 475.7 L92.7 475.4 L92.3 475.1 L91.8 474.9 L91.4 474.7 L91 474.5 L90.5 474.4 L90 474.3 L89.5 474.3 L89 474.4 L88.6 474.6 L88.2 474.9 L87.8 475.2 L87.5 475.6 L87.3 476.1 L87.3 476.6 L87.4 477.1 L87.6 477.5 L87.9 478 L88.3 478.3 L88.6 478.7 L89 479 L89.4 479.3 L89.8 479.7 L90.1 480 L90.5 480.4 L90.7 480.8 L90.9 481.2 L91.1 481.7 L91.1 482.2 L91 482.7 L90.8 483.1 L90.5 483.5 L90.2 483.9 L89.7 484.1 L89.2 484.2 L88.7 484.2 L88.2 484 L87.8 483.8 L87.3 483.5 L87 483.2 L86.7 482.8 L86.4 482.3 L86.2 481.9 L86 481.5 L85.8 481 L85.6 480.6 L85.4 480.1 L85.1 479.7 L84.8 479.4 L84.4 479.1 L84 478.8 L83.5 478.7 L83 478.6 L82.6 478.7 L82.1 478.9 L81.7 479.2 L81.4 479.6 L81.2 480.1 L81.1 480.6 L81 481.1 L81.1 481.6 L81.3 482.1 L81.5 482.5 L81.8 483 L82.2 483.4 L82.5 483.7 L82.9 484.1 L83.2 484.4 L83.5 484.8 L83.8 485.2 L84.1 485.6 L84.3 486.1 L84.3 486.6 L84.3 487.1 L84.2 487.6 L84 488 L83.6 488.4 L83.2 488.6 L82.7 488.8 L82.4 488.7 L82.2 488.2 L81.9 487.7 L81.4 487.3 L80.8 487.3 L80.4 487.3 L79.9 487.2 L79.6 486.9 L79.2 486.6 L78.8 486.3 L78.3 486.1 L77.7 486.4 L77 487.4 L77.3 489.2 L78.5 490.6 L79.4 491.2 L79.8 491.4 L80.3 491.4 L80.8 491.3 L81.3 491 L81.7 490.7 L81.9 490.3 L82.2 489.8 L82.3 489.3 L82.6 488.9 L82.9 488.5 L83.1 488.1 L83.4 487.7 L83.8 487.3 L84.1 487 L84.6 486.7 L85 486.5 L85.5 486.4 L86 486.4 L86.5 486.5 L86.9 486.7 L87.3 487 L87.7 487.3 L88 487.7 L88.2 488.2 L88.3 488.7 L88.4 489.2 L88.3 489.7 L88.2 490.2 L88.1 490.7 L87.9 491.2 L87.8 491.6 L87.6 492.1 L87.4 492.6 L87.2 493 L87.1 493.5 L87 494 L87 494.5 L87 494.9 L86.8 495.2 L86.1 494.8 L85.3 493.3 L84.9 491.5 L85.3 490.5 L85.1 490.9 L85 491.4 L84.9 491.9 L85 492.4 L85.2 492.9 L85.4 493.4 L85.7 493.8 L86 494.2 L86.4 494.5 L86.8 494.9 L87.2 495.1 L87.7 495.3 L88.1 495.6 L88.5 495.8 L88.9 496.2 L89.1 496.6 L89.3 497.1 L89.3 497.6 L89.2 498 L88.9 498.4 L88.5 498.8 L88 498.9 L87.5 499 L87 498.9 L86.6 498.7 L86.1 498.5 L85.7 498.2 L85.4 497.9 L85 497.5 L84.6 497.2 L84.2 497 L83.8 496.7 L83.3 496.5 L82.8 496.4 L82.4 496.6 L82 496.9 L81.7 497.3 L81.6 497.8 L81.6 498.3 L81.9 498.7 L82.2 499.2 L82.5 499.5 L82.9 499.8 L83.4 500.1 L83.8 500.4 L84.2 500.7 L84.5 501 L84.8 501.4 L85 501.9 L85.2 502.4 L85.2 502.9 L85 503.3 L84.8 503.8 L84.4 504.1 L83.9 504.3 L83.5 504.4 L82.9 504.4 L82.5 504.3 L82 504.1 L81.6 503.9 L81.2 503.6 L80.8 503.3 L80.4 503 L80 502.7 L79.6 502.4 L79.2 502.2 L78.7 502.1 L78.2 502 L77.8 502.1 L77.3 502.3 L76.9 502.6 L76.7 503 L76.5 503.5 L76.5 504 L76.6 504.5 L76.8 505 L77.1 505.4 L77.5 505.7 L78 506 L78.4 506.2 L78.9 506.4 L79.4 506.5 L79.8 506.7 L80.3 506.9 L80.7 507.1 L81.2 507.4 L81.5 507.7 L81.8 508.1 L82 508.5 L82.1 509 L82 509.5 L81.9 510 L81.6 510.4 L81.2 510.7 L80.7 510.9 L80.2 511 L79.7 511 L79.2 510.8 L78.7 510.6 L78.3 510.3 L77.9 510 L77.6 509.7 L77.3 509.3 L76.9 508.9 L76.6 508.6 L76.2 508.2 L75.8 508 L75.4 507.7 L74.9 507.6 L74.5 507.6 L74 507.7 L73.5 507.9 L73.2 508.2 L72.9 508.6 L72.7 509.1 L72.7 509.6 L72.8 510.1 L73 510.6 L73.3 511 L73.6 511.3 L74.1 511.6 L74.5 511.8 L75 512 L75.5 512.2 L75.9 512.4 L76.3 512.7 L76.7 513 L77 513.4 L77.3 513.8 L77.5 514.2 L77.6 514.7 L77.5 515.3 L77.2 516 L76.7 516.5 L76.1 516.9 L75.5 517.1 L75 517.2 L74.5 517.1 L74 516.9 L73.6 516.7 L73.2 516.3 L72.9 516 L72.6 515.6 L72.3 515.2 L72 514.8 L71.8 514.4 L71.5 513.9 L71.2 513.6 L70.9 513.2 L70.5 512.9 L70.1 512.6 L69.7 512.4 L69.2 512.3 L68.7 512.3 L68.3 512.5 L67.9 512.8 L67.6 513.2 L67.5 513.7 L67.5 514.2 L67.6 514.7 L67.9 515.2 L68.2 515.6 L68.5 516 L68.9 516.3 L69.3 516.6 L69.7 516.9 L70.1 517.2 L70.5 517.6 L70.8 517.9 L71.2 518.3 L71.4 518.7 L71.6 519.1 L71.8 519.6 L71.8 520.1 L71.7 520.6 L71.5 521 L71.2 521.4 L70.8 521.7 L70.3 522 L69.9 522.1 L69.3 522.1 L68.8 521.9 L68.4 521.7 L68 521.4 L67.6 521.1 L67.3 520.7 L67.1 520.2 L66.9 519.8 L66.7 519.3 L66.5 518.8 L66.3 518.4 L66.2 517.9 L65.9 517.5 L65.7 517.1 L65.4 516.7 L65 516.4 L64.6 516.2 L64.2 516 L63.7 515.9 L63.2 516 L62.7 516.2 L62.3 516.5 L60.8 518.1 L59.5 521.2 L60.5 524 L61.9 525.3 L62.9 525.7 L63.5 525.5 L63.9 525.2 L64.2 524.8 L64.6 524.4 L64.9 524 L65.1 523.6 L65.4 523.2 L65.7 522.7 L65.9 522.3 L66.2 521.9 L66.5 521.5 L66.9 521.2 L67.2 520.9 L67.7 520.6 L68.1 520.4 L68.6 520.3 L69.1 520.3 L69.6 520.5 L70 520.7 L70.4 520.9 L70.8 521.3 L71 521.8 L71.2 522.2 L71.2 522.8 L71.1 523.2 L70.8 523.7 L70.5 524.1 L70.1 524.4 L69.9 524.9 L69.6 525.3 L69.3 525.7 L69 526.1 L68.8 526.5 L68.7 527 L68.7 527.5 L68.8 528 L68.7 528.1 L68.5 527.4 L68.6 526.2 L68.9 525.8 L69.2 526 L69.3 526.5 L69.6 526.9 L69.9 527.2 L70.4 527.5 L70.8 527.8 L71.2 528 L71.7 528.2 L72.2 528.4 L72.7 528.5 L73.2 528.7 L73.5 529.1 L73.7 529.6 L73.6 530.4 L73.5 530.9 L73.5 531.4 L73.4 531.9 L73.1 532.3 L72.8 532.7 L72.4 532.9 L71.9 533.1 L71.4 533.2 L70.9 533.2 L70.4 533 L69.9 532.8 L69.5 532.5 L69.1 532.2 L68.8 531.8 L68.5 531.3 L68.3 530.9 L68 530.5 L67.8 530 L67.6 529.6 L67.3 529.1 L67 528.7 L66.7 528.4 L66.4 528 L66 527.8 L65.5 527.6 L65 527.5 L64.6 527.5 L64.1 527.6 L63.6 527.8 L63.3 528.1 L62.9 528.5 L62.7 529 L62.6 529.5 L62.5 530 L62.5 530.5 L62.7 531 L62.8 531.5 L63.1 531.9 L63.3 532.3 L63.6 532.8 L63.9 533.2 L64.2 533.5 L64.5 533.9 L64.8 534.4 L65 534.8 L65.2 535.2 L65.3 535.7 L65.4 536.2 L65.3 536.7 L65.1 537.2 L64.9 537.6 L64.6 538 L64.2 538.3 L63.7 538.5 L63.2 538.6 L62.7 538.6 L62.2 538.5 L61.7 538.3 L61.2 538.1 L60.8 537.8 L60.4 537.5 L60 537.2 L59.7 536.9 L59.3 536.6 L58.9 536.2 L58.5 535.9 L58.1 535.7 L57.7 535.5 L57.2 535.3 L56.8 535.1 L56.3 535.1 L55.8 535.2 L55.4 535.4 L55 535.7 L54.6 536.1 L54.4 536.6 L54.3 537.1 L54.3 537.6 L54.4 538.1 L54.6 538.5 L54.9 539 L55.2 539.4 L55.6 539.7 L56 540.1 L56.4 540.4 L56.7 540.7 L57.1 541 L57.5 541.3 L57.8 541.7 L58.1 542.1 L58.3 542.5 L58.4 543 L58.5 543.4 L58.9 543.4 L59.1 543 L59.5 542.5 L59.5 542.1 L59.4 542.4 L59.2 542.8 L58.9 543.2 L58.5 543.6 L58.1 543.8 L57.6 544 L57.1 544.1 L56.6 544.2 L56.1 544.2 L55.6 544.2 L55.1 544.2 L54.6 544.2 L54.1 544.2 L53.6 544.2 L53.3 544.6 L52.9 544.9 L52.6 545.3 L52.4 545.7 L52.2 546.2 L52.1 546.7 L52.1 547.2 L52.1 547.7 L52.2 548.1 L52.5 548.6 L52.7 549 L53.1 549.4 L53.4 549.8 L53.9 550 L54.3 550.3 L54.8 550.5 L55.2 550.6 L55.7 550.7 L56.2 550.9 L56.7 551.2 L57.1 551.5 L57.3 552 L57.4 552.5 L57.4 553.1 L57.2 553.7 L57.2 554.2 L57.1 554.7 L56.9 555.2 L56.6 555.6 L56.3 556 L56 556.3 L55.5 556.6 L55.1 556.8 L54.6 556.9 L54.1 557 L53.6 557 L53.1 556.9 L52.6 556.8 L52.1 556.6 L51.6 556.4 L51.2 556.2 L50.7 556 L50.3 555.8 L50 555.4 L49.6 555 L49.2 554.7 L48.8 554.5 L48.4 554.2 L47.9 554.1 L47.4 554.1 L47 554.2 L46.5 554.3 L46.1 554.6 L45.4 555.3 L44.5 556.9 L44.2 558.7 L44.9 560 L45.7 560.7 L46.4 560.9 L46.9 560.7 L47.3 560.5 L47.8 560.3 L48.2 560 L48.6 559.7 L49 559.4 L49.4 559.2 L49.9 558.9 L50.3 558.8 L50.8 558.6 L51.3 558.6 L51.7 558.6 L52.2 558.8 L52.6 559 L53 559.4 L53.3 559.8 L53.4 560.3 L53.5 560.8 L53.5 561.3 L53.3 561.8 L53.1 562.2 L52.8 562.6 L52.5 563 L52.1 563.3 L51.7 563.6 L51.3 563.9 L50.8 564.2 L50.5 564.5 L50.1 564.9 L49.8 565.2 L49.6 565.6 L49.4 566.1 L49.2 566.6 L49.2 567 L48.9 567 L48.7 565.8 L49.2 564.1 L49.9 563.2 L50 563.3 L49.7 563.7 L49.6 564.2 L49.5 564.7 L49.5 565.2 L49.5 565.7 L49.6 566.2 L49.8 566.7 L49.9 567.2 L50.1 567.7 L50.3 568.1 L50.4 568.6 L50.5 569.1 L50.5 569.6 L50.5 570.1 L50.4 570.5 L50.2 571 L49.9 571.4 L49.5 571.7 L49.1 572 L48.6 572.2 L48.1 572.2 L47.6 572.2 L47.1 572 L46.7 571.8 L46.3 571.5 L45.9 571.2 L45.7 570.7 L45.5 570.3 L45.4 569.8 L45.2 569.3 L45.1 568.8 L44.9 568.4 L44.7 567.9 L44.4 567.5 L44.1 567.2 L43.7 566.9 L43.1 566.8 L41.9 567.3 L40.5 568.5 L40 570.5 L40.3 572.3 L40.7 572.8 L41.1 573.1 L41.5 573.3 L42 573.4 L42.5 573.5 L43 573.4 L43.5 573.2 L44 573.1 L44.5 572.8 L44.9 572.6 L45.3 572.4 L45.8 572.2 L46.3 572.1 L46.8 572 L47.2 572 L47.7 572.1 L48.2 572.3 L48.6 572.6 L48.9 573 L49 573.4 L49.1 573.9 L49 574.4 L48.8 574.9 L48.6 575.3 L48.2 575.7 L47.7 575.9 L47.3 576.1 L46.8 576.2 L46.3 576.3 L45.8 576.4 L45.3 576.4 L44.8 576.5 L44.4 576.8 L44 577.1 L43.8 577.5 L43.7 578 L43.9 578.5 L44.2 578.9 L44.6 579.1 L45.1 579.2 L45.6 579.2 L46.1 579.1 L46.6 578.9 L47 578.7 L47.5 578.5 L48 578.4 L48.5 578.5 L48.9 578.6 L49.2 579 L49.4 579.5 L49.6 580 L49.6 580.5 L49.5 581 L49.4 581.4 L49.1 581.9 L48.9 582.3 L48.5 582.7 L48.1 583 L47.8 583.4 L47.4 583.7 L47 584 L46.6 584.3 L46.2 584.6 L45.9 585 L45.6 585.4 L45.4 585.8 L45.3 586.3 L45.2 586.8 L45.3 587.3 L45.4 587.8 L45.7 588.2 L46 588.6 L46.4 588.9 L46.8 589.1 L47.2 589 L47.7 589.1 L48.2 589.3 L48.5 589.5 L49 589.7 L49.5 589.8 L50 590 L50.4 590.2 L50.7 590.6 L50.8 591.2 L50.6 592 L50.5 592.6 L50.3 593.1 L49.9 593.4 L49.3 593.5 L48.6 593.5 L48 593.5 L47.4 593.4 L46.9 593.4 L46.6 593.3 L46.3 593.2 L46.1 593 L45.9 592.9 L45.8 592.7 L45.7 592.5 L45.5 592.2 L45.4 592 L45.2 591.9 L45 591.7 L44.8 591.7 L44.6 591.8 L44.5 592.1 L44.3 592.5 L44.3 593 L44.2 593.7 L44.2 594.3 L44.2 594.4" stroke="#000" stroke-width="1.15"/>
<circle cx="407" cy="407" r="159.3" stroke="#c4c4c4" stroke-width="1" shape-rendering="crispEdges"/>
<circle cx="407" cy="407" r="279.0" stroke="#c4c4c4" stroke-width="1" shape-rendering="crispEdges"/>
<circle cx="407" cy="407" r="398.8" stroke="#c4c4c4" stroke-width="1" shape-rendering="crispEdges"/>
<circle cx="407" cy="407" r="518.6" stroke="#c4c4c4" stroke-width="1" shape-rendering="crispEdges"/>
<rect x="394.9" y="4" width="21.5" height="9" fill="#5d4f4b" stroke="none"/>
<text x="405.9" y="12" text-anchor="middle" class="rl" stroke="none">313</text>
<rect x="394.9" y="123" width="21.5" height="9" fill="#5d4f4b" stroke="none"/>
<text x="405.9" y="131" text-anchor="middle" class="rl" stroke="none">219</text>
<rect x="394.9" y="243" width="21.5" height="9" fill="#5d4f4b" stroke="none"/>
<text x="405.9" y="251" text-anchor="middle" class="rl" stroke="none">125</text>
<rect x="398.6" y="363" width="14" height="9" fill="#5d4f4b" stroke="none"/>
<text x="405.9" y="371" text-anchor="middle" class="rl" stroke="none">31</text>
<circle cx="407" cy="407" r="39.5" stroke="#ff0000" stroke-width="1" shape-rendering="crispEdges"/>
</g>
<g stroke="#e08a0c" stroke-width="1.15" fill="none"><circle cx="425.5" cy="741.5" r="4"/><path shape-rendering="crispEdges" stroke-width="1" d="M423.0 741.5h5"/></g>
<g stroke="#e08a0c" stroke-width="1.15" fill="none"><circle cx="479.5" cy="791.5" r="4"/><path shape-rendering="crispEdges" stroke-width="1" d="M477.0 791.5h5"/></g>
</svg>
<div class="lg" style="left:9px;top:759px;width:242px;height:42px"></div>
<div class="t " style="left:13.30px;top:763.05px;font-size:9.4px;color:#f0f0f0;letter-spacing:0.156px;font-family:'DejaVu Sans Condensed','Liberation Sans',sans-serif;">Symbols</div>
<div class="t " style="left:53.00px;top:763.05px;font-size:9.4px;color:#f0f0f0;letter-spacing:0.495px;font-family:'DejaVu Sans Condensed','Liberation Sans',sans-serif;">-CG</div>
<div class="t " style="left:77.70px;top:763.05px;font-size:9.4px;color:#f0f0f0;letter-spacing:1.016px;font-family:'DejaVu Sans Condensed','Liberation Sans',sans-serif;">-IC</div>
<div class="t " style="left:98.70px;top:763.05px;font-size:9.4px;color:#f0f0f0;letter-spacing:0.317px;font-family:'DejaVu Sans Condensed','Liberation Sans',sans-serif;">+CG</div>
<div class="t " style="left:123.40px;top:763.05px;font-size:9.4px;color:#f0f0f0;letter-spacing:0.838px;font-family:'DejaVu Sans Condensed','Liberation Sans',sans-serif;">+IC</div>
<div class="t " style="left:153.00px;top:763.05px;font-size:9.4px;color:#f0f0f0;letter-spacing:-0.187px;font-family:'DejaVu Sans Condensed','Liberation Sans',sans-serif;">Strike age color codes</div>
<div class="t " style="left:13.30px;top:776.05px;font-size:9.4px;color:#f0f0f0;letter-spacing:-0.198px;font-family:'DejaVu Sans Condensed','Liberation Sans',sans-serif;">Recent</div>
<div class="t " style="left:13.30px;top:789.05px;font-size:9.4px;color:#f0f0f0;letter-spacing:-0.125px;font-family:'DejaVu Sans Condensed','Liberation Sans',sans-serif;">Old</div>
<div class="t " style="left:153.50px;top:776.05px;font-size:9.4px;color:#ecd400;letter-spacing:-0.615px;font-family:'DejaVu Sans Condensed','Liberation Sans',sans-serif;">15+</div>
<div class="t " style="left:153.50px;top:789.05px;font-size:9.4px;color:#e67600;letter-spacing:-0.615px;font-family:'DejaVu Sans Condensed','Liberation Sans',sans-serif;">60+</div>
<div class="t " style="left:188.10px;top:776.05px;font-size:9.4px;color:#eaa600;letter-spacing:-0.615px;font-family:'DejaVu Sans Condensed','Liberation Sans',sans-serif;">30+</div>
<div class="t " style="left:188.10px;top:789.05px;font-size:9.4px;color:#e45600;letter-spacing:-0.615px;font-family:'DejaVu Sans Condensed','Liberation Sans',sans-serif;">75+</div>
<div class="t " style="left:222.70px;top:776.05px;font-size:9.4px;color:#ea8c00;letter-spacing:-0.615px;font-family:'DejaVu Sans Condensed','Liberation Sans',sans-serif;">45+</div>
<div class="t " style="left:222.70px;top:789.05px;font-size:9.4px;color:#e22c00;letter-spacing:-0.615px;font-family:'DejaVu Sans Condensed','Liberation Sans',sans-serif;">90+</div>
<svg class="map" width="1138" height="812" viewBox="0 0 1138 812"><g fill="none" stroke-width="1.1"><g stroke="#00ffff" stroke-width="1.15"><circle cx="60.5" cy="780.5" r="4"/><circle cx="110.5" cy="780.5" r="4"/><path shape-rendering="crispEdges" stroke-width="1" d="M58 780.5h5M82 780.5h7M108 780.5h5M110.5 778.0v5M132 780.5h7M135.5 777.0v7"/></g><g stroke="#ffff00" stroke-width="1.15"><circle cx="60.5" cy="793.5" r="4"/><circle cx="110.5" cy="793.5" r="4"/><path shape-rendering="crispEdges" stroke-width="1" d="M58 793.5h5M82 793.5h7M108 793.5h5M110.5 791.0v5M132 793.5h7M135.5 790.0v7"/></g></g></svg>
<div style="position:absolute;left:685px;top:792px;width:121px;height:14px;background:#000"></div>
<div class="t " style="left:688.50px;top:794.05px;font-size:9.4px;color:#f0f0f0;letter-spacing:-0.132px;font-family:'DejaVu Sans Condensed','Liberation Sans',sans-serif;">©2005 Astrogenic Systems</div>
<div class="pn" style="left:812px;top:8px;width:318px;height:318px"></div>
<div class="pn" style="left:812px;top:333px;width:318px;height:113px"></div>
<div class="pn" style="left:812px;top:453px;width:318px;height:348px"></div>
<div class="bx" style="left:819px;top:16px;width:56px;height:16px;background:#5c0000"></div>
<div class="bx" style="left:883px;top:16px;width:56px;height:16px;background:#333"></div>
<div class="bx" style="left:994px;top:16px;width:126px;height:16px;background:#333"></div>
<div class="t " style="left:824.00px;top:19.59px;font-size:12.3px;color:#d6d6d6;text-shadow:0.68px 0 0 #d6d6d6;letter-spacing:0.778px;">STRIKE</div>
<div class="t " style="left:890.70px;top:19.59px;font-size:12.3px;color:#bcbcbc;text-shadow:0.68px 0 0 #bcbcbc;letter-spacing:0.982px;">NOISE</div>
<div class="t " style="left:998.60px;top:19.59px;font-size:12.3px;color:#fff;text-shadow:0.68px 0 0 #fff;letter-spacing:0.478px;">Bng 176°</div>
<div class="t " style="left:1075.90px;top:19.59px;font-size:12.3px;color:#00e600;text-shadow:0.68px 0 0 #00e600;letter-spacing:0.625px;">262mi</div>
<div class="bx" style="left:821px;top:64px;width:80px;height:14px;background:#5c5c5c"></div>
<div class="t " style="left:829.00px;top:65.59px;font-size:12.3px;color:#ececec;letter-spacing:-0.282px;">Strikes/min</div>
<div class="bx" style="left:931px;top:64px;width:80px;height:14px;background:#5c5c5c"></div>
<div class="t " style="left:943.40px;top:65.59px;font-size:12.3px;color:#ececec;letter-spacing:-0.461px;">Close/min</div>
<div class="bx" style="left:1041px;top:64px;width:80px;height:14px;background:#5c5c5c"></div>
<div class="t " style="left:1050.60px;top:65.59px;font-size:12.3px;color:#ececec;letter-spacing:-0.587px;">Noises/min</div>
<div class="t " style="left:884.30px;top:88.73px;font-size:27.5px;color:#fff;text-shadow:1.93px 0 0 #fff;">0</div>
<div class="t " style="left:994.30px;top:88.73px;font-size:27.5px;color:#fff;text-shadow:1.93px 0 0 #fff;">0</div>
<div class="t " style="left:1104.30px;top:88.73px;font-size:27.5px;color:#b4b4b4;text-shadow:1.93px 0 0 #b4b4b4;">0</div>
<div class="t " style="left:828.05px;top:132.59px;font-size:12.3px;color:#f4f4f4;letter-spacing:0.046px;">Total Strikes</div>
<div class="t " style="left:945.17px;top:132.59px;font-size:12.3px;color:#f4f4f4;letter-spacing:0.169px;">Total Close</div>
<div class="t " style="left:1048.57px;top:132.59px;font-size:12.3px;color:#c2c2c2;letter-spacing:0.07px;">Total Noises</div>
<div class="t " style="left:895.17px;top:150.59px;font-size:12.3px;color:#f4f4f4;">0</div>
<div class="t " style="left:1005.17px;top:150.59px;font-size:12.3px;color:#f4f4f4;">0</div>
<div class="t " style="left:1114.67px;top:150.59px;font-size:12.3px;color:#f4f4f4;">4</div>
<div class="t " style="left:821.00px;top:204.59px;font-size:12.3px;color:#c2c2c2;letter-spacing:0.059px;">Lightning type distribution</div>
<div class="hr" style="left:821px;top:217px;width:303px"></div>
<div class="t " style="left:821.00px;top:226.59px;font-size:12.3px;color:#fff;text-shadow:0.68px 0 0 #fff;letter-spacing:0.101px;">Cloud-ground</div>
<div class="t " style="left:912.20px;top:226.59px;font-size:12.3px;color:#f4f4f4;">+</div>
<div class="bar" style="left:925px;top:227.0px"></div>
<div class="t " style="left:980.00px;top:226.59px;font-size:12.3px;color:#fff;text-shadow:0.68px 0 0 #fff;letter-spacing:0.493px;">0%</div>
<div class="mn" style="left:1016px;top:231.0px"></div>
<div class="bar" style="left:1028px;top:227.0px"></div>
<div class="t " style="left:1082.50px;top:226.59px;font-size:12.3px;color:#fff;text-shadow:0.68px 0 0 #fff;letter-spacing:0.493px;">0%</div>
<div class="t " style="left:821.00px;top:250.59px;font-size:12.3px;color:#b4b4b4;text-shadow:0.68px 0 0 #b4b4b4;letter-spacing:0.254px;">Count</div>
<div class="t " style="left:925.00px;top:250.59px;font-size:12.3px;color:#fff;text-shadow:0.68px 0 0 #fff;">0</div>
<div class="t " style="left:1028.00px;top:250.59px;font-size:12.3px;color:#fff;text-shadow:0.68px 0 0 #fff;">0</div>
<div class="t " style="left:821.00px;top:280.59px;font-size:12.3px;color:#fff;text-shadow:0.68px 0 0 #fff;letter-spacing:0.125px;">Intracloud</div>
<div class="t " style="left:912.20px;top:280.59px;font-size:12.3px;color:#f4f4f4;">+</div>
<div class="bar" style="left:925px;top:281.0px"></div>
<div class="t " style="left:980.00px;top:280.59px;font-size:12.3px;color:#fff;text-shadow:0.68px 0 0 #fff;letter-spacing:0.493px;">0%</div>
<div class="mn" style="left:1016px;top:285.0px"></div>
<div class="bar" style="left:1028px;top:281.0px"></div>
<div class="t " style="left:1082.50px;top:280.59px;font-size:12.3px;color:#fff;text-shadow:0.68px 0 0 #fff;letter-spacing:0.493px;">0%</div>
<div class="t " style="left:821.00px;top:304.59px;font-size:12.3px;color:#b4b4b4;text-shadow:0.68px 0 0 #b4b4b4;letter-spacing:0.254px;">Count</div>
<div class="t " style="left:925.00px;top:304.59px;font-size:12.3px;color:#fff;text-shadow:0.68px 0 0 #fff;">0</div>
<div class="t " style="left:1028.00px;top:304.59px;font-size:12.3px;color:#fff;text-shadow:0.68px 0 0 #fff;">0</div>
<div class="t " style="left:822.00px;top:339.13px;font-size:16.4px;color:#00e600;text-shadow:0.90px 0 0 #00e600;letter-spacing:0.879px;">2/26/2026 12:55:02 AM</div>
<div class="hr" style="left:821px;top:358px;width:302px"></div>
<div class="t " style="left:821.70px;top:377.59px;font-size:12.3px;color:#f4f4f4;letter-spacing:-0.093px;">Squelch</div>
<div class="t " style="left:909.50px;top:377.59px;font-size:12.3px;color:#f4f4f4;letter-spacing:-0.326px;">0</div>
<div class="t " style="left:981.40px;top:377.59px;font-size:12.3px;color:#f4f4f4;letter-spacing:0.034px;">Upload</div>
<div class="t " style="left:1061.40px;top:377.59px;font-size:12.3px;color:#c2c2c2;letter-spacing:0.046px;">Disabled</div>
<div class="t " style="left:821.70px;top:397.59px;font-size:12.3px;color:#f4f4f4;letter-spacing:0.15px;">Persistence</div>
<div class="t " style="left:909.50px;top:397.59px;font-size:12.3px;color:#f4f4f4;letter-spacing:-0.293px;">90 min</div>
<div class="t " style="left:981.40px;top:397.59px;font-size:12.3px;color:#f4f4f4;letter-spacing:0.228px;">Capture</div>
<div class="t " style="left:1061.40px;top:397.59px;font-size:12.3px;color:#00e600;letter-spacing:-0.358px;">Active</div>
<div class="t " style="left:821.70px;top:417.59px;font-size:12.3px;color:#f4f4f4;letter-spacing:0.023px;">Range</div>
<div class="t " style="left:909.50px;top:417.59px;font-size:12.3px;color:#f4f4f4;letter-spacing:-0.231px;">313 mi</div>
<div class="t " style="left:981.40px;top:417.59px;font-size:12.3px;color:#f4f4f4;letter-spacing:-0.114px;">Receiver</div>
<div class="t " style="left:1061.40px;top:417.59px;font-size:12.3px;color:#00e600;letter-spacing:0.042px;">Enabled</div>
<div class="t " style="left:821.70px;top:464.59px;font-size:12.3px;color:#c2c2c2;letter-spacing:-0.267px;">Uptime</div>
<div class="t " style="left:910.60px;top:464.59px;font-size:12.3px;color:#f4f4f4;letter-spacing:-0.043px;">1068:40</div>
<div class="t " style="left:981.40px;top:464.59px;font-size:12.3px;color:#c2c2c2;letter-spacing:0.033px;">Peak time</div>
<div class="t " style="left:1061.40px;top:464.59px;font-size:12.3px;color:#c2c2c2;letter-spacing:0.104px;">Plot</div>
<div class="t " style="left:821.70px;top:487.59px;font-size:12.3px;color:#c2c2c2;letter-spacing:0.233px;">Peak rate</div>
<div class="t " style="left:909.50px;top:487.59px;font-size:12.3px;color:#f4f4f4;letter-spacing:-0.253px;">0/min</div>
<div class="t " style="left:982.30px;top:487.59px;font-size:12.3px;color:#f4f4f4;letter-spacing:-0.11px;">12:55 AM</div>
<div class="t " style="left:1061.40px;top:487.59px;font-size:12.3px;color:#f4f4f4;letter-spacing:-0.043px;">Strike</div>
<div class="t " style="left:822.40px;top:517.59px;font-size:12.3px;color:#c2c2c2;letter-spacing:0.238px;">Trend graph</div>
<div class="t " style="left:908.80px;top:517.59px;font-size:12.3px;color:#f4f4f4;letter-spacing:-0.309px;">60 min</div>
<svg class="map" width="1138" height="812" viewBox="0 0 1138 812"><g stroke="#c8c8c8" stroke-width="1" shape-rendering="crispEdges" fill="none"><path d="M1088.5 542V778M822 777.5H1089"/><path d="M822.5 775V778M1084 542.5H1088M866.9 775V778M1084 581.7H1088M911.2 775V778M1084 620.8H1088M955.5 775V778M1084 660.0H1088M999.9 775V778M1084 699.2H1088M1044.2 775V778M1084 738.4H1088M1088.6 775V778M1084 777.5H1088"/></g></svg>
<div class="t " style="left:820.50px;top:784.27px;font-size:11.5px;color:#c2c2c2;letter-spacing:-0.067px;">60</div>
<div class="t " style="left:864.85px;top:784.27px;font-size:11.5px;color:#c2c2c2;letter-spacing:-0.067px;">50</div>
<div class="t " style="left:909.20px;top:784.27px;font-size:11.5px;color:#c2c2c2;letter-spacing:-0.067px;">40</div>
<div class="t " style="left:953.55px;top:784.27px;font-size:11.5px;color:#c2c2c2;letter-spacing:-0.067px;">30</div>
<div class="t " style="left:997.90px;top:784.27px;font-size:11.5px;color:#c2c2c2;letter-spacing:-0.067px;">20</div>
<div class="t " style="left:1042.25px;top:784.27px;font-size:11.5px;color:#c2c2c2;letter-spacing:-0.067px;">10</div>
<div class="t " style="left:1087.70px;top:784.27px;font-size:11.5px;color:#c2c2c2;">0</div>
<div class="t " style="left:1100.30px;top:784.27px;font-size:11.5px;color:#c2c2c2;letter-spacing:-0.229px;">min</div>
<div class="t " style="left:1092.00px;top:538.27px;font-size:11.5px;color:#c2c2c2;letter-spacing:-0.567px;">30</div>
<div class="t " style="left:1092.00px;top:616.27px;font-size:11.5px;color:#c2c2c2;letter-spacing:-0.567px;">20</div>
<div class="t " style="left:1092.00px;top:694.27px;font-size:11.5px;color:#c2c2c2;letter-spacing:-0.567px;">10</div>
</body></html>
